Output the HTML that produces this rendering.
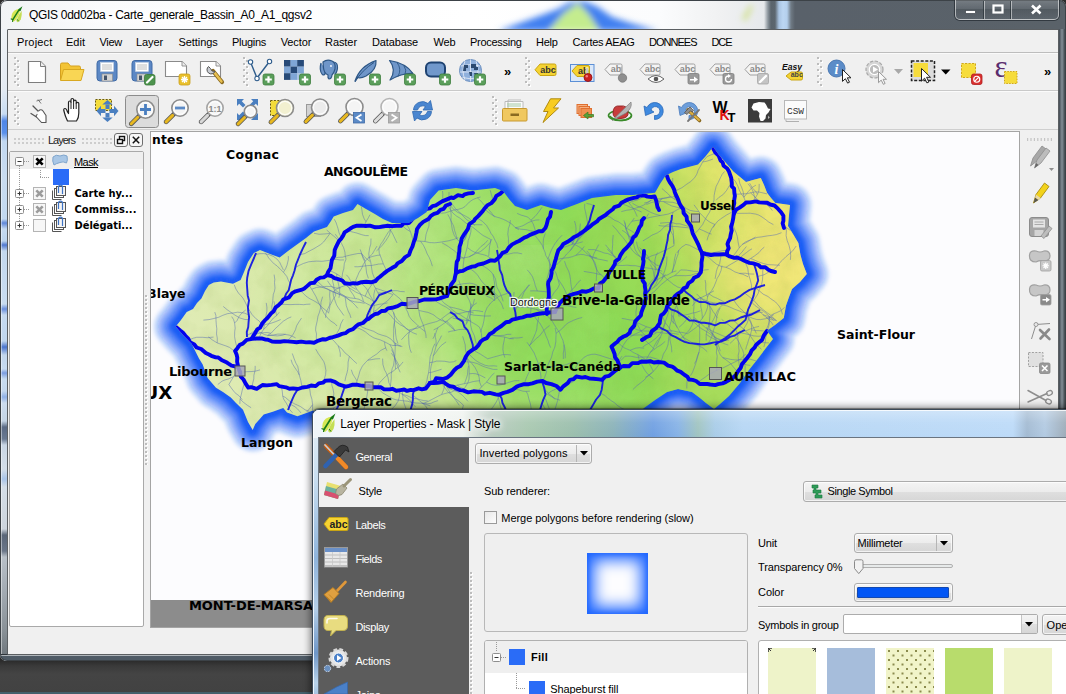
<!DOCTYPE html>
<html><head><meta charset="utf-8"><title>QGIS</title><style>
*{box-sizing:border-box;margin:0;padding:0}
html,body{width:1066px;height:694px;overflow:hidden}
body{background:#3a3a3a;font-family:"Liberation Sans","DejaVu Sans",sans-serif;font-size:11px;color:#000;position:relative}
.abs{position:absolute}
.t{position:absolute;white-space:nowrap;line-height:1}
#desk{position:absolute;left:0;top:0;width:1066px;height:694px;background:linear-gradient(180deg,#2c2c2c 661px,#3a3a3a 666px,#444 674px,#424242 692px)}
#deskline{position:absolute;left:0;top:692px;width:1066px;height:2px;background:#44606c}
#main{position:absolute;left:0;top:0;width:1066px;height:661px;border-radius:7px 7px 7px 7px;background:#e9edf0;overflow:hidden}
#mainb{position:absolute;left:0;top:0;width:1066px;height:661px;border-radius:7px;border:1px solid #3c4247}
#mtitle{position:absolute;left:0;top:0;width:1066px;height:29px}
#client{position:absolute;left:8px;top:30px;width:1050px;height:624px;background:#f0f0f0}
#clientborder{position:absolute;left:7px;top:29px;width:1052px;height:626px;border:1px solid #5b5f62;border-radius:1px}
.menu{position:absolute;top:38px;font-size:11px;line-height:11px;white-space:nowrap}
.hsep{position:absolute;height:1px;background:#c4c4c4}
.grip{position:absolute;width:6px;background-image:radial-gradient(circle at 1px 1px,#bdbdbd 0.8px,transparent 1.2px),radial-gradient(circle at 2px 2px,#fff 0.8px,transparent 1.2px),radial-gradient(circle at 4px 4px,#bdbdbd 0.8px,transparent 1.2px),radial-gradient(circle at 5px 5px,#fff 0.8px,transparent 1.2px);background-size:6px 6px}
</style></head><body>
<div id="desk"></div><div id="deskline"></div>
<div id="main">
<div id="mtitle" style="background:linear-gradient(90deg,#f1f3f5 0px,#fafbfc 100px,#ffffff 470px,#fbfcfd 660px,#f0f1f2 720px,#e6e9ec 764px,#8a949c 768px,#5a646c 771px,#5c666e 775px,#a9c4e2 779px,#bcd6f2 783px,#b4cfec 787px,#6f7a84 791px,#59616a 795px,#5a6269 1066px)"></div>
<svg class="abs" style="left:480px;top:1px" width="300" height="28" viewBox="0 0 300 28"><defs><filter id="tb" x="-20%" y="-50%" width="140%" height="200%"><feGaussianBlur stdDeviation="3.2"></feGaussianBlur></filter></defs><g filter="url(#tb)"><path d="M18 30L40 22L62 14L78 8L90 1L104 0L118 6L132 16L150 22L178 30Z" fill="#3f7ff0"></path><path d="M68 30L84 12L98 2L108 12L120 30Z" fill="#c4ec8e"></path><path d="M262 18L270 4L273 5L266 20Z" fill="#c8dc6a" opacity=".8"></path></g></svg>
<div class="abs" style="left:0;top:29px;width:7px;height:632px;background:linear-gradient(180deg,#eef2f6 0px,#e3eaf2 60px,#c8dcf2 85px,#4f86e6 92px,#5a90ea 104px,#c2d8f0 112px,#c9dcf0 150px,#c2d8ef 190px,#5f86d8 194px,#c6daf0 200px,#bcd4ee 212px,#5078d0 216px,#c4d8ee 222px,#c9dcf0 275px,#6a8fdc 280px,#c6daf0 286px,#c0d6ee 312px,#4a74cc 318px,#c2d6ec 326px,#c6daf0 340px,#7a9ce0 344px,#c8dcf0 350px,#c4d8ee 362px,#8fb0e6 368px,#ccdcee 374px,#c4d4e4 392px,#5a6a84 398px,#6a7a92 410px,#c9d6e4 416px,#d4dee8 440px,#a8c4e8 450px,#d4dee8 458px,#ccd4dc 500px,#5a6678 506px,#6a7688 522px,#b8c0c8 528px,#a4acb4 560px,#8a9298 600px,#6a7278 632px)"></div>
<div class="abs" style="left:0;top:29px;width:2px;height:632px;background:rgba(255,255,255,.45)"></div>
<div class="abs" style="left:1058px;top:29px;width:8px;height:632px;background:linear-gradient(90deg,#4c545c 0,#4c545c 2px,#78828a 3px,#78828a 5px,#4a5258 6px)"></div>
<div class="abs" style="left:0;top:654px;width:1066px;height:7px;background:#4f5b66;border-top:1px solid #2e343a;box-shadow:inset 0 1px 0 rgba(255,255,255,.55),inset 0 -1px 0 rgba(225,232,238,.9)"></div>
<div id="clientborder"></div>
<div id="client"></div>
</div>
<div id="mainb"></div>
<div class="abs" style="left:14px;top:6px;width:310px;height:20px;background:radial-gradient(closest-side,rgba(255,255,255,.9),rgba(255,255,255,0));"></div>
<span class="t" style="left: 29px; top: 9px; font-size: 12px; color: rgb(0, 0, 0); text-shadow: rgb(255, 255, 255) 0px 0px 6px, rgb(255, 255, 255) 0px 0px 6px; letter-spacing: -0.303px;">QGIS 0dd02ba - Carte_generale_Bassin_A0_A1_qgsv2</span>
<svg class="abs" style="left:0;top:0" width="40" height="30"><g transform="translate(9.5 7.5) scale(0.84)"><path d="M2.500 14Q1.500 7 6 3.500Q10 1 13 2Q12 8 9.500 12Q7.500 15.500 5 17Q3.500 16.500 2.500 14Z" fill="#d4e64a" opacity=".95"></path><path d="M8 16Q10.500 9 14.500 4Q15 10 13.500 14Q11.500 17.500 9.500 17.500Z" fill="#c0dc40" opacity=".9"></path><path d="M4 14.500L11.500 2.500L13.500 1L12.500 3.500" fill="none" stroke="#1a7a1a" stroke-width="1.700" stroke-linecap="round"></path><path d="M1.500 13.500L4 14.500L3.500 17" fill="none" stroke="#1a7a1a" stroke-width="1.200"></path><path d="M9 14L11 16.500" stroke="#1a7a1a" stroke-width="1"></path></g></svg>
<div class="abs" style="left:955px;top:0;width:104px;height:20px;border:1px solid rgba(255,255,255,.55);border-top:0;border-radius:0 0 5px 5px;background:linear-gradient(rgba(255,255,255,.18),rgba(255,255,255,.05) 45%,rgba(0,0,0,.08) 50%,rgba(255,255,255,.02));box-shadow:0 0 0 1px rgba(40,48,54,.8)"></div>
<div class="abs" style="left:984px;top:1px;width:1px;height:18px;background:rgba(255,255,255,.5);box-shadow:-1px 0 0 rgba(40,48,54,.7)"></div>
<div class="abs" style="left:1011px;top:1px;width:1px;height:18px;background:rgba(255,255,255,.5);box-shadow:-1px 0 0 rgba(40,48,54,.7)"></div>
<svg class="abs" style="left:955px;top:0" width="104" height="20"><rect x="10.5" y="10.5" width="10" height="3" fill="#fff" stroke="#4a5056" stroke-width=".8"></rect><rect x="38.5" y="5.5" width="9" height="7" fill="none" stroke="#fff" stroke-width="2.2"></rect><path d="M77 5.5L85.5 13.5M85.5 5.5L77 13.5" stroke="#fff" stroke-width="2.6"></path></svg>
<span class="t" style="left: 17px; top: 36.9px; font-size: 11px; color: rgb(0, 0, 0); letter-spacing: 0.179px;">Project</span>
<span class="t" style="left: 66px; top: 36.9px; font-size: 11px; color: rgb(0, 0, 0); letter-spacing: 0.008px;">Edit</span>
<span class="t" style="left: 99.4px; top: 36.9px; font-size: 11px; color: rgb(0, 0, 0); letter-spacing: -0.264px;">View</span>
<span class="t" style="left: 136px; top: 36.9px; font-size: 11px; color: rgb(0, 0, 0); letter-spacing: -0.106px;">Layer</span>
<span class="t" style="left: 178.6px; top: 36.9px; font-size: 11px; color: rgb(0, 0, 0); letter-spacing: -0.094px;">Settings</span>
<span class="t" style="left: 232px; top: 36.9px; font-size: 11px; color: rgb(0, 0, 0); letter-spacing: -0.297px;">Plugins</span>
<span class="t" style="left: 280.7px; top: 36.9px; font-size: 11px; color: rgb(0, 0, 0); letter-spacing: -0.115px;">Vector</span>
<span class="t" style="left: 325px; top: 36.9px; font-size: 11px; color: rgb(0, 0, 0); letter-spacing: -0.068px;">Raster</span>
<span class="t" style="left: 372px; top: 36.9px; font-size: 11px; color: rgb(0, 0, 0); letter-spacing: -0.137px;">Database</span>
<span class="t" style="left: 433.4px; top: 36.9px; font-size: 11px; color: rgb(0, 0, 0); letter-spacing: -0.141px;">Web</span>
<span class="t" style="left: 470px; top: 36.9px; font-size: 11px; color: rgb(0, 0, 0); letter-spacing: -0.282px;">Processing</span>
<span class="t" style="left: 536px; top: 36.9px; font-size: 11px; color: rgb(0, 0, 0); letter-spacing: -0.256px;">Help</span>
<span class="t" style="left: 572.6px; top: 36.9px; font-size: 11px; color: rgb(0, 0, 0); letter-spacing: -0.311px;">Cartes AEAG</span>
<span class="t" style="left: 649px; top: 36.9px; font-size: 11px; color: rgb(0, 0, 0); letter-spacing: -0.987px;">DONNEES</span>
<span class="t" style="left: 711.4px; top: 36.9px; font-size: 11px; color: rgb(0, 0, 0); letter-spacing: -0.978px;">DCE</span>
<div class="hsep" style="left:8px;top:52px;width:1050px;background:#bdbdbd"></div>
<div class="hsep" style="left:8px;top:53px;width:1050px;background:#fafafa"></div>
<div class="hsep" style="left:8px;top:90px;width:1050px;background:#c9c9c9"></div>
<div class="hsep" style="left:8px;top:91px;width:1050px;background:#fbfbfb"></div>
<div class="hsep" style="left:8px;top:129px;width:1050px;background:#cfcfcf"></div>
<div class="grip" style="left:14px;top:57px;height:30px"></div>
<div class="grip" style="left:243px;top:57px;height:30px"></div>
<div class="grip" style="left:525px;top:57px;height:30px"></div>
<div class="grip" style="left:817px;top:57px;height:30px"></div>
<div class="grip" style="left:14px;top:96px;height:30px"></div>
<div class="grip" style="left:492px;top:96px;height:30px"></div>
<span class="t" style="left:504px;top:65.2px;font-size:13px;color:#000;font-weight:bold;">»</span>
<span class="t" style="left:1044px;top:65.2px;font-size:13px;color:#000;font-weight:bold;">»</span>
<div class="abs" style="left:14px;top:138px;width:30px;height:6px;background-image:radial-gradient(circle at 1px 1px,#cdcdcd 0.8px,transparent 1.1px);background-size:4px 4px"></div>
<div class="abs" style="left:82px;top:138px;width:30px;height:6px;background-image:radial-gradient(circle at 1px 1px,#cdcdcd 0.8px,transparent 1.1px);background-size:4px 4px"></div>
<span class="t" style="left: 48px; top: 134.9px; font-size: 11px; color: rgb(34, 34, 34); letter-spacing: -1.005px;">Layers</span>
<div class="abs" style="left:114px;top:133px;width:14px;height:14px;border:1px solid #6e6e6e;border-radius:3px;background:#f6f6f6"></div>
<svg class="abs" style="left:114px;top:133px" width="14" height="14"><rect x="5.5" y="3.5" width="5" height="4" fill="none" stroke="#111" stroke-width="1.4"></rect><rect x="3.5" y="6.5" width="5" height="4" fill="#f6f6f6" stroke="#111" stroke-width="1.4"></rect></svg>
<div class="abs" style="left:129px;top:133px;width:14px;height:14px;border:1px solid #6e6e6e;border-radius:3px;background:#f6f6f6"></div>
<svg class="abs" style="left:129px;top:133px" width="14" height="14"><path d="M3.8 3.8L10.2 10.2M10.2 3.8L3.8 10.2" stroke="#111" stroke-width="1.5"></path></svg>
<div class="abs" style="left:9px;top:151px;width:135px;height:476px;background:#fff;border:1px solid #a9a9a9;border-radius:2px"></div>
<div class="abs" style="left:10px;top:152px;width:133px;height:17px;background:#efefef"></div>
<div class="abs" style="left:19px;top:166px;width:1px;height:55px;background-image:linear-gradient(#9a9a9a 1px,transparent 1px);background-size:1px 2px"></div>
<div class="abs" style="left:24px;top:161px;width:6px;height:1px;background-image:linear-gradient(90deg,#9a9a9a 1px,transparent 1px);background-size:2px 1px"></div>
<div class="abs" style="left:24px;top:193px;width:6px;height:1px;background-image:linear-gradient(90deg,#9a9a9a 1px,transparent 1px);background-size:2px 1px"></div>
<div class="abs" style="left:24px;top:209px;width:6px;height:1px;background-image:linear-gradient(90deg,#9a9a9a 1px,transparent 1px);background-size:2px 1px"></div>
<div class="abs" style="left:24px;top:225px;width:6px;height:1px;background-image:linear-gradient(90deg,#9a9a9a 1px,transparent 1px);background-size:2px 1px"></div>
<div class="abs" style="left:40px;top:170px;width:1px;height:7px;background-image:linear-gradient(#9a9a9a 1px,transparent 1px);background-size:1px 2px"></div>
<div class="abs" style="left:40px;top:177px;width:10px;height:1px;background-image:linear-gradient(90deg,#9a9a9a 1px,transparent 1px);background-size:2px 1px"></div>
<svg class="abs" style="left:15px;top:157px" width="9" height="9"><rect x="0.5" y="0.5" width="8" height="8" rx="1" fill="#fdfdfd" stroke="#8e8e8e"></rect><path d="M2.5 4.5H6.5" stroke="#333" stroke-width="1"></path></svg>
<svg class="abs" style="left:15px;top:189px" width="9" height="9"><rect x="0.5" y="0.5" width="8" height="8" rx="1" fill="#fdfdfd" stroke="#8e8e8e"></rect><path d="M2.5 4.5H6.5" stroke="#333" stroke-width="1"></path><path d="M4.5 2.5V6.5" stroke="#333" stroke-width="1"></path></svg>
<svg class="abs" style="left:15px;top:205px" width="9" height="9"><rect x="0.5" y="0.5" width="8" height="8" rx="1" fill="#fdfdfd" stroke="#8e8e8e"></rect><path d="M2.5 4.5H6.5" stroke="#333" stroke-width="1"></path><path d="M4.5 2.5V6.5" stroke="#333" stroke-width="1"></path></svg>
<svg class="abs" style="left:15px;top:221px" width="9" height="9"><rect x="0.5" y="0.5" width="8" height="8" rx="1" fill="#fdfdfd" stroke="#8e8e8e"></rect><path d="M2.5 4.5H6.5" stroke="#333" stroke-width="1"></path><path d="M4.5 2.5V6.5" stroke="#333" stroke-width="1"></path></svg>
<div class="abs" style="left:33px;top:155px;width:13px;height:13px;border:1px solid #b4b4b4;background:#f7f7f7"></div>
<div class="abs" style="left:33px;top:187px;width:13px;height:13px;border:1px solid #b4b4b4;background:#f7f7f7"></div>
<div class="abs" style="left:33px;top:203px;width:13px;height:13px;border:1px solid #b4b4b4;background:#f7f7f7"></div>
<div class="abs" style="left:33px;top:219px;width:13px;height:13px;border:1px solid #b4b4b4;background:#f7f7f7"></div>
<svg class="abs" style="left:33px;top:155px" width="13" height="13"><path d="M3.3 3.3L9.7 9.7M9.7 3.3L3.3 9.7" stroke="#000" stroke-width="2.6"></path></svg>
<svg class="abs" style="left:33px;top:187px" width="13" height="13"><path d="M3.3 3.3L9.7 9.7M9.7 3.3L3.3 9.7" stroke="#9c9c9c" stroke-width="2.6"></path></svg>
<svg class="abs" style="left:33px;top:203px" width="13" height="13"><path d="M3.3 3.3L9.7 9.7M9.7 3.3L3.3 9.7" stroke="#9c9c9c" stroke-width="2.6"></path></svg>
<svg class="abs" style="left:51px;top:153px" width="18" height="15" viewBox="0 0 18 15"><path d="M2 4 Q5 1 9 3 Q13 1 16 3 Q17 7 15.5 10 Q12 8 9 9.5 Q5 10.5 3 12 Q1 8 2 4Z" fill="#a9c7e6" stroke="#7fa5cc" stroke-width="1"></path></svg>
<span class="t" style="left: 74px; top: 156.9px; font-size: 11px; color: rgb(0, 0, 0); text-decoration: underline; letter-spacing: -0.57px;">Mask</span>
<div class="abs" style="left:53px;top:169px;width:16px;height:16px;background:#2a6cf7"></div>
<svg class="abs" style="left:51px;top:184px" width="16" height="17" viewBox="0 0 16 17"><path d="M1.5 6.5V15.5H10.5" fill="none" stroke="#555" stroke-width="1"></path><rect x="3.5" y="4.5" width="9" height="9" fill="#fff" stroke="#555"></rect><rect x="5.5" y="2.5" width="9" height="9" fill="#f4f4f4" stroke="#555"></rect><path d="M7.5 9V3.2A2 2 0 0 1 11.5 3.2V10" fill="none" stroke="#3e73c4" stroke-width="1.2"></path></svg>
<span class="t" style="left: 74.5px; top: 187.9px; font-size: 11px; color: rgb(0, 0, 0); font-weight: bold; font-family: &quot;DejaVu Sans Condensed&quot;, &quot;DejaVu Sans&quot;, &quot;Liberation Sans&quot;, sans-serif; letter-spacing: 0.047px;">Carte hy...</span>
<svg class="abs" style="left:51px;top:200px" width="16" height="17" viewBox="0 0 16 17"><path d="M1.5 6.5V15.5H10.5" fill="none" stroke="#555" stroke-width="1"></path><rect x="3.5" y="4.5" width="9" height="9" fill="#fff" stroke="#555"></rect><rect x="5.5" y="2.5" width="9" height="9" fill="#f4f4f4" stroke="#555"></rect><path d="M7.5 9V3.2A2 2 0 0 1 11.5 3.2V10" fill="none" stroke="#3e73c4" stroke-width="1.2"></path></svg>
<span class="t" style="left: 74.5px; top: 203.9px; font-size: 11px; color: rgb(0, 0, 0); font-weight: bold; font-family: &quot;DejaVu Sans Condensed&quot;, &quot;DejaVu Sans&quot;, &quot;Liberation Sans&quot;, sans-serif; letter-spacing: 0.086px;">Commiss...</span>
<svg class="abs" style="left:51px;top:216px" width="16" height="17" viewBox="0 0 16 17"><path d="M1.5 6.5V15.5H10.5" fill="none" stroke="#555" stroke-width="1"></path><rect x="3.5" y="4.5" width="9" height="9" fill="#fff" stroke="#555"></rect><rect x="5.5" y="2.5" width="9" height="9" fill="#f4f4f4" stroke="#555"></rect><path d="M7.5 9V3.2A2 2 0 0 1 11.5 3.2V10" fill="none" stroke="#3e73c4" stroke-width="1.2"></path></svg>
<span class="t" style="left: 74.5px; top: 219.9px; font-size: 11px; color: rgb(0, 0, 0); font-weight: bold; font-family: &quot;DejaVu Sans Condensed&quot;, &quot;DejaVu Sans&quot;, &quot;Liberation Sans&quot;, sans-serif; letter-spacing: -0.018px;">Délégati...</span>
<div class="grip" style="left:145px;top:295px;height:170px;width:3px;background-size:6px 4px"></div>
<div class="abs" style="left:150px;top:131px;width:870px;height:497px;border:1px solid #a4a4a4;background:#fcfcfe"></div>
<svg class="abs" style="left:151px;top:132px" width="868" height="495" viewBox="0 0 868 495">
<defs>
<filter id="glow" x="-10%" y="-10%" width="120%" height="120%"><feGaussianBlur stdDeviation="6.5"></feGaussianBlur></filter>
<filter id="glow2" x="-10%" y="-10%" width="120%" height="120%"><feGaussianBlur stdDeviation="1.6"></feGaussianBlur></filter>
<filter id="soft" x="-20%" y="-20%" width="140%" height="140%"><feGaussianBlur stdDeviation="18"></feGaussianBlur></filter>
<filter id="tex" x="0" y="0" width="100%" height="100%"><feTurbulence type="fractalNoise" baseFrequency="0.045" numOctaves="3" seed="4" result="n"></feTurbulence><feColorMatrix in="n" type="matrix" values="0 0 0 0 0.2  0 0 0 0 0.35  0 0 0 0 0.05  0 0 0 1.6 -0.62"></feColorMatrix></filter>
<linearGradient id="terr" gradientUnits="userSpaceOnUse" x1="25" y1="160" x2="660" y2="-140">
<stop offset="0" stop-color="#dfebb4"></stop><stop offset="0.14" stop-color="#d8e9a8"></stop><stop offset="0.28" stop-color="#c6e692"></stop><stop offset="0.42" stop-color="#a6e372"></stop><stop offset="0.55" stop-color="#8edb58"></stop><stop offset="0.64" stop-color="#a0dc58"></stop><stop offset="0.71" stop-color="#c4e162"></stop><stop offset="0.78" stop-color="#e4e66e"></stop><stop offset="0.86" stop-color="#f6e67e"></stop><stop offset="1" stop-color="#f6e67e"></stop></linearGradient>
<clipPath id="bc"><polygon points="24.7,194.5 30.0,188.0 35.7,180.0 42.0,177.0 46.0,171.0 50.4,166.4 54.0,159.0 57.8,153.0 62.7,150.4 70.0,149.5 82.0,151.7 89.6,148.0 93.0,140.0 97.0,130.0 102.8,121.0 109.0,118.0 119.0,122.0 128.7,125.5 137.0,119.0 146.0,112.6 155.0,106.0 163.0,99.6 176.0,95.0 180.0,89.0 182.7,84.5 192.0,81.0 202.0,78.0 206.5,72.0 215.0,77.0 223.8,82.0 232.0,87.0 241.0,91.0 258.0,91.0 267.0,86.0 275.7,80.0 279.0,68.0 287.6,58.5 305.0,56.0 322.0,58.5 344.0,56.0 352.0,59.0 358.0,67.0 364.0,74.0 376.0,78.0 390.0,73.0 400.0,76.0 410.0,78.0 426.0,72.0 441.0,66.0 465.0,63.0 482.0,63.0 504.0,60.7 509.0,52.0 514.6,43.4 522.0,40.0 529.8,37.0 547.0,32.6 554.0,25.0 560.0,17.5 562.0,14.7 568.0,23.0 575.0,31.0 582.6,39.8 589.0,45.0 595.0,50.0 602.0,48.0 609.8,46.0 613.0,53.0 616.0,60.7 620.0,66.0 624.4,71.0 632.0,72.0 639.0,73.0 638.0,83.0 637.0,94.0 642.0,102.0 647.4,111.0 649.5,123.0 652.0,132.0 655.8,142.0 649.0,150.0 641.0,157.0 638.0,165.0 635.0,173.6 632.8,186.0 624.0,193.0 616.0,198.7 622.0,207.0 615.0,216.0 607.7,225.8 598.0,238.0 589.0,251.0 578.0,264.0 569.0,272.0 563.0,277.0 555.0,271.0 549.0,266.0 541.0,260.0 527.0,257.0 516.0,260.0 504.0,268.0 493.0,276.0 479.0,288.0 449.0,296.0 409.0,292.0 369.0,300.0 319.0,294.0 269.0,298.0 219.0,292.0 179.0,288.0 162.0,278.5 156.8,280.4 146.4,284.3 136.0,280.4 132.2,275.9 121.8,279.8 112.7,282.4 108.8,286.9 104.3,292.0 101.7,298.0 97.0,290.0 92.0,277.8 85.0,271.0 79.8,265.6 72.0,260.0 65.0,255.8 56.6,246.0 51.7,232.5 48.0,226.4 40.6,211.7 32.0,203.0"></polygon></clipPath>
</defs>
<rect width="868" height="495" fill="#fcfcfe"></rect>
<g filter="url(#glow2)">
<polygon points="24.7,194.5 30.0,188.0 35.7,180.0 42.0,177.0 46.0,171.0 50.4,166.4 54.0,159.0 57.8,153.0 62.7,150.4 70.0,149.5 82.0,151.7 89.6,148.0 93.0,140.0 97.0,130.0 102.8,121.0 109.0,118.0 119.0,122.0 128.7,125.5 137.0,119.0 146.0,112.6 155.0,106.0 163.0,99.6 176.0,95.0 180.0,89.0 182.7,84.5 192.0,81.0 202.0,78.0 206.5,72.0 215.0,77.0 223.8,82.0 232.0,87.0 241.0,91.0 258.0,91.0 267.0,86.0 275.7,80.0 279.0,68.0 287.6,58.5 305.0,56.0 322.0,58.5 344.0,56.0 352.0,59.0 358.0,67.0 364.0,74.0 376.0,78.0 390.0,73.0 400.0,76.0 410.0,78.0 426.0,72.0 441.0,66.0 465.0,63.0 482.0,63.0 504.0,60.7 509.0,52.0 514.6,43.4 522.0,40.0 529.8,37.0 547.0,32.6 554.0,25.0 560.0,17.5 562.0,14.7 568.0,23.0 575.0,31.0 582.6,39.8 589.0,45.0 595.0,50.0 602.0,48.0 609.8,46.0 613.0,53.0 616.0,60.7 620.0,66.0 624.4,71.0 632.0,72.0 639.0,73.0 638.0,83.0 637.0,94.0 642.0,102.0 647.4,111.0 649.5,123.0 652.0,132.0 655.8,142.0 649.0,150.0 641.0,157.0 638.0,165.0 635.0,173.6 632.8,186.0 624.0,193.0 616.0,198.7 622.0,207.0 615.0,216.0 607.7,225.8 598.0,238.0 589.0,251.0 578.0,264.0 569.0,272.0 563.0,277.0 555.0,271.0 549.0,266.0 541.0,260.0 527.0,257.0 516.0,260.0 504.0,268.0 493.0,276.0 479.0,288.0 449.0,296.0 409.0,292.0 369.0,300.0 319.0,294.0 269.0,298.0 219.0,292.0 179.0,288.0 162.0,278.5 156.8,280.4 146.4,284.3 136.0,280.4 132.2,275.9 121.8,279.8 112.7,282.4 108.8,286.9 104.3,292.0 101.7,298.0 97.0,290.0 92.0,277.8 85.0,271.0 79.8,265.6 72.0,260.0 65.0,255.8 56.6,246.0 51.7,232.5 48.0,226.4 40.6,211.7 32.0,203.0" fill="none" stroke="#1a5cf5" stroke-opacity="0.085" stroke-width="46.0" stroke-linejoin="round"></polygon>
<polygon points="24.7,194.5 30.0,188.0 35.7,180.0 42.0,177.0 46.0,171.0 50.4,166.4 54.0,159.0 57.8,153.0 62.7,150.4 70.0,149.5 82.0,151.7 89.6,148.0 93.0,140.0 97.0,130.0 102.8,121.0 109.0,118.0 119.0,122.0 128.7,125.5 137.0,119.0 146.0,112.6 155.0,106.0 163.0,99.6 176.0,95.0 180.0,89.0 182.7,84.5 192.0,81.0 202.0,78.0 206.5,72.0 215.0,77.0 223.8,82.0 232.0,87.0 241.0,91.0 258.0,91.0 267.0,86.0 275.7,80.0 279.0,68.0 287.6,58.5 305.0,56.0 322.0,58.5 344.0,56.0 352.0,59.0 358.0,67.0 364.0,74.0 376.0,78.0 390.0,73.0 400.0,76.0 410.0,78.0 426.0,72.0 441.0,66.0 465.0,63.0 482.0,63.0 504.0,60.7 509.0,52.0 514.6,43.4 522.0,40.0 529.8,37.0 547.0,32.6 554.0,25.0 560.0,17.5 562.0,14.7 568.0,23.0 575.0,31.0 582.6,39.8 589.0,45.0 595.0,50.0 602.0,48.0 609.8,46.0 613.0,53.0 616.0,60.7 620.0,66.0 624.4,71.0 632.0,72.0 639.0,73.0 638.0,83.0 637.0,94.0 642.0,102.0 647.4,111.0 649.5,123.0 652.0,132.0 655.8,142.0 649.0,150.0 641.0,157.0 638.0,165.0 635.0,173.6 632.8,186.0 624.0,193.0 616.0,198.7 622.0,207.0 615.0,216.0 607.7,225.8 598.0,238.0 589.0,251.0 578.0,264.0 569.0,272.0 563.0,277.0 555.0,271.0 549.0,266.0 541.0,260.0 527.0,257.0 516.0,260.0 504.0,268.0 493.0,276.0 479.0,288.0 449.0,296.0 409.0,292.0 369.0,300.0 319.0,294.0 269.0,298.0 219.0,292.0 179.0,288.0 162.0,278.5 156.8,280.4 146.4,284.3 136.0,280.4 132.2,275.9 121.8,279.8 112.7,282.4 108.8,286.9 104.3,292.0 101.7,298.0 97.0,290.0 92.0,277.8 85.0,271.0 79.8,265.6 72.0,260.0 65.0,255.8 56.6,246.0 51.7,232.5 48.0,226.4 40.6,211.7 32.0,203.0" fill="none" stroke="#1a5cf5" stroke-opacity="0.087" stroke-width="42.9" stroke-linejoin="round"></polygon>
<polygon points="24.7,194.5 30.0,188.0 35.7,180.0 42.0,177.0 46.0,171.0 50.4,166.4 54.0,159.0 57.8,153.0 62.7,150.4 70.0,149.5 82.0,151.7 89.6,148.0 93.0,140.0 97.0,130.0 102.8,121.0 109.0,118.0 119.0,122.0 128.7,125.5 137.0,119.0 146.0,112.6 155.0,106.0 163.0,99.6 176.0,95.0 180.0,89.0 182.7,84.5 192.0,81.0 202.0,78.0 206.5,72.0 215.0,77.0 223.8,82.0 232.0,87.0 241.0,91.0 258.0,91.0 267.0,86.0 275.7,80.0 279.0,68.0 287.6,58.5 305.0,56.0 322.0,58.5 344.0,56.0 352.0,59.0 358.0,67.0 364.0,74.0 376.0,78.0 390.0,73.0 400.0,76.0 410.0,78.0 426.0,72.0 441.0,66.0 465.0,63.0 482.0,63.0 504.0,60.7 509.0,52.0 514.6,43.4 522.0,40.0 529.8,37.0 547.0,32.6 554.0,25.0 560.0,17.5 562.0,14.7 568.0,23.0 575.0,31.0 582.6,39.8 589.0,45.0 595.0,50.0 602.0,48.0 609.8,46.0 613.0,53.0 616.0,60.7 620.0,66.0 624.4,71.0 632.0,72.0 639.0,73.0 638.0,83.0 637.0,94.0 642.0,102.0 647.4,111.0 649.5,123.0 652.0,132.0 655.8,142.0 649.0,150.0 641.0,157.0 638.0,165.0 635.0,173.6 632.8,186.0 624.0,193.0 616.0,198.7 622.0,207.0 615.0,216.0 607.7,225.8 598.0,238.0 589.0,251.0 578.0,264.0 569.0,272.0 563.0,277.0 555.0,271.0 549.0,266.0 541.0,260.0 527.0,257.0 516.0,260.0 504.0,268.0 493.0,276.0 479.0,288.0 449.0,296.0 409.0,292.0 369.0,300.0 319.0,294.0 269.0,298.0 219.0,292.0 179.0,288.0 162.0,278.5 156.8,280.4 146.4,284.3 136.0,280.4 132.2,275.9 121.8,279.8 112.7,282.4 108.8,286.9 104.3,292.0 101.7,298.0 97.0,290.0 92.0,277.8 85.0,271.0 79.8,265.6 72.0,260.0 65.0,255.8 56.6,246.0 51.7,232.5 48.0,226.4 40.6,211.7 32.0,203.0" fill="none" stroke="#1a5cf5" stroke-opacity="0.093" stroke-width="39.9" stroke-linejoin="round"></polygon>
<polygon points="24.7,194.5 30.0,188.0 35.7,180.0 42.0,177.0 46.0,171.0 50.4,166.4 54.0,159.0 57.8,153.0 62.7,150.4 70.0,149.5 82.0,151.7 89.6,148.0 93.0,140.0 97.0,130.0 102.8,121.0 109.0,118.0 119.0,122.0 128.7,125.5 137.0,119.0 146.0,112.6 155.0,106.0 163.0,99.6 176.0,95.0 180.0,89.0 182.7,84.5 192.0,81.0 202.0,78.0 206.5,72.0 215.0,77.0 223.8,82.0 232.0,87.0 241.0,91.0 258.0,91.0 267.0,86.0 275.7,80.0 279.0,68.0 287.6,58.5 305.0,56.0 322.0,58.5 344.0,56.0 352.0,59.0 358.0,67.0 364.0,74.0 376.0,78.0 390.0,73.0 400.0,76.0 410.0,78.0 426.0,72.0 441.0,66.0 465.0,63.0 482.0,63.0 504.0,60.7 509.0,52.0 514.6,43.4 522.0,40.0 529.8,37.0 547.0,32.6 554.0,25.0 560.0,17.5 562.0,14.7 568.0,23.0 575.0,31.0 582.6,39.8 589.0,45.0 595.0,50.0 602.0,48.0 609.8,46.0 613.0,53.0 616.0,60.7 620.0,66.0 624.4,71.0 632.0,72.0 639.0,73.0 638.0,83.0 637.0,94.0 642.0,102.0 647.4,111.0 649.5,123.0 652.0,132.0 655.8,142.0 649.0,150.0 641.0,157.0 638.0,165.0 635.0,173.6 632.8,186.0 624.0,193.0 616.0,198.7 622.0,207.0 615.0,216.0 607.7,225.8 598.0,238.0 589.0,251.0 578.0,264.0 569.0,272.0 563.0,277.0 555.0,271.0 549.0,266.0 541.0,260.0 527.0,257.0 516.0,260.0 504.0,268.0 493.0,276.0 479.0,288.0 449.0,296.0 409.0,292.0 369.0,300.0 319.0,294.0 269.0,298.0 219.0,292.0 179.0,288.0 162.0,278.5 156.8,280.4 146.4,284.3 136.0,280.4 132.2,275.9 121.8,279.8 112.7,282.4 108.8,286.9 104.3,292.0 101.7,298.0 97.0,290.0 92.0,277.8 85.0,271.0 79.8,265.6 72.0,260.0 65.0,255.8 56.6,246.0 51.7,232.5 48.0,226.4 40.6,211.7 32.0,203.0" fill="none" stroke="#1a5cf5" stroke-opacity="0.101" stroke-width="36.8" stroke-linejoin="round"></polygon>
<polygon points="24.7,194.5 30.0,188.0 35.7,180.0 42.0,177.0 46.0,171.0 50.4,166.4 54.0,159.0 57.8,153.0 62.7,150.4 70.0,149.5 82.0,151.7 89.6,148.0 93.0,140.0 97.0,130.0 102.8,121.0 109.0,118.0 119.0,122.0 128.7,125.5 137.0,119.0 146.0,112.6 155.0,106.0 163.0,99.6 176.0,95.0 180.0,89.0 182.7,84.5 192.0,81.0 202.0,78.0 206.5,72.0 215.0,77.0 223.8,82.0 232.0,87.0 241.0,91.0 258.0,91.0 267.0,86.0 275.7,80.0 279.0,68.0 287.6,58.5 305.0,56.0 322.0,58.5 344.0,56.0 352.0,59.0 358.0,67.0 364.0,74.0 376.0,78.0 390.0,73.0 400.0,76.0 410.0,78.0 426.0,72.0 441.0,66.0 465.0,63.0 482.0,63.0 504.0,60.7 509.0,52.0 514.6,43.4 522.0,40.0 529.8,37.0 547.0,32.6 554.0,25.0 560.0,17.5 562.0,14.7 568.0,23.0 575.0,31.0 582.6,39.8 589.0,45.0 595.0,50.0 602.0,48.0 609.8,46.0 613.0,53.0 616.0,60.7 620.0,66.0 624.4,71.0 632.0,72.0 639.0,73.0 638.0,83.0 637.0,94.0 642.0,102.0 647.4,111.0 649.5,123.0 652.0,132.0 655.8,142.0 649.0,150.0 641.0,157.0 638.0,165.0 635.0,173.6 632.8,186.0 624.0,193.0 616.0,198.7 622.0,207.0 615.0,216.0 607.7,225.8 598.0,238.0 589.0,251.0 578.0,264.0 569.0,272.0 563.0,277.0 555.0,271.0 549.0,266.0 541.0,260.0 527.0,257.0 516.0,260.0 504.0,268.0 493.0,276.0 479.0,288.0 449.0,296.0 409.0,292.0 369.0,300.0 319.0,294.0 269.0,298.0 219.0,292.0 179.0,288.0 162.0,278.5 156.8,280.4 146.4,284.3 136.0,280.4 132.2,275.9 121.8,279.8 112.7,282.4 108.8,286.9 104.3,292.0 101.7,298.0 97.0,290.0 92.0,277.8 85.0,271.0 79.8,265.6 72.0,260.0 65.0,255.8 56.6,246.0 51.7,232.5 48.0,226.4 40.6,211.7 32.0,203.0" fill="none" stroke="#1a5cf5" stroke-opacity="0.111" stroke-width="33.7" stroke-linejoin="round"></polygon>
<polygon points="24.7,194.5 30.0,188.0 35.7,180.0 42.0,177.0 46.0,171.0 50.4,166.4 54.0,159.0 57.8,153.0 62.7,150.4 70.0,149.5 82.0,151.7 89.6,148.0 93.0,140.0 97.0,130.0 102.8,121.0 109.0,118.0 119.0,122.0 128.7,125.5 137.0,119.0 146.0,112.6 155.0,106.0 163.0,99.6 176.0,95.0 180.0,89.0 182.7,84.5 192.0,81.0 202.0,78.0 206.5,72.0 215.0,77.0 223.8,82.0 232.0,87.0 241.0,91.0 258.0,91.0 267.0,86.0 275.7,80.0 279.0,68.0 287.6,58.5 305.0,56.0 322.0,58.5 344.0,56.0 352.0,59.0 358.0,67.0 364.0,74.0 376.0,78.0 390.0,73.0 400.0,76.0 410.0,78.0 426.0,72.0 441.0,66.0 465.0,63.0 482.0,63.0 504.0,60.7 509.0,52.0 514.6,43.4 522.0,40.0 529.8,37.0 547.0,32.6 554.0,25.0 560.0,17.5 562.0,14.7 568.0,23.0 575.0,31.0 582.6,39.8 589.0,45.0 595.0,50.0 602.0,48.0 609.8,46.0 613.0,53.0 616.0,60.7 620.0,66.0 624.4,71.0 632.0,72.0 639.0,73.0 638.0,83.0 637.0,94.0 642.0,102.0 647.4,111.0 649.5,123.0 652.0,132.0 655.8,142.0 649.0,150.0 641.0,157.0 638.0,165.0 635.0,173.6 632.8,186.0 624.0,193.0 616.0,198.7 622.0,207.0 615.0,216.0 607.7,225.8 598.0,238.0 589.0,251.0 578.0,264.0 569.0,272.0 563.0,277.0 555.0,271.0 549.0,266.0 541.0,260.0 527.0,257.0 516.0,260.0 504.0,268.0 493.0,276.0 479.0,288.0 449.0,296.0 409.0,292.0 369.0,300.0 319.0,294.0 269.0,298.0 219.0,292.0 179.0,288.0 162.0,278.5 156.8,280.4 146.4,284.3 136.0,280.4 132.2,275.9 121.8,279.8 112.7,282.4 108.8,286.9 104.3,292.0 101.7,298.0 97.0,290.0 92.0,277.8 85.0,271.0 79.8,265.6 72.0,260.0 65.0,255.8 56.6,246.0 51.7,232.5 48.0,226.4 40.6,211.7 32.0,203.0" fill="none" stroke="#1a5cf5" stroke-opacity="0.123" stroke-width="30.7" stroke-linejoin="round"></polygon>
<polygon points="24.7,194.5 30.0,188.0 35.7,180.0 42.0,177.0 46.0,171.0 50.4,166.4 54.0,159.0 57.8,153.0 62.7,150.4 70.0,149.5 82.0,151.7 89.6,148.0 93.0,140.0 97.0,130.0 102.8,121.0 109.0,118.0 119.0,122.0 128.7,125.5 137.0,119.0 146.0,112.6 155.0,106.0 163.0,99.6 176.0,95.0 180.0,89.0 182.7,84.5 192.0,81.0 202.0,78.0 206.5,72.0 215.0,77.0 223.8,82.0 232.0,87.0 241.0,91.0 258.0,91.0 267.0,86.0 275.7,80.0 279.0,68.0 287.6,58.5 305.0,56.0 322.0,58.5 344.0,56.0 352.0,59.0 358.0,67.0 364.0,74.0 376.0,78.0 390.0,73.0 400.0,76.0 410.0,78.0 426.0,72.0 441.0,66.0 465.0,63.0 482.0,63.0 504.0,60.7 509.0,52.0 514.6,43.4 522.0,40.0 529.8,37.0 547.0,32.6 554.0,25.0 560.0,17.5 562.0,14.7 568.0,23.0 575.0,31.0 582.6,39.8 589.0,45.0 595.0,50.0 602.0,48.0 609.8,46.0 613.0,53.0 616.0,60.7 620.0,66.0 624.4,71.0 632.0,72.0 639.0,73.0 638.0,83.0 637.0,94.0 642.0,102.0 647.4,111.0 649.5,123.0 652.0,132.0 655.8,142.0 649.0,150.0 641.0,157.0 638.0,165.0 635.0,173.6 632.8,186.0 624.0,193.0 616.0,198.7 622.0,207.0 615.0,216.0 607.7,225.8 598.0,238.0 589.0,251.0 578.0,264.0 569.0,272.0 563.0,277.0 555.0,271.0 549.0,266.0 541.0,260.0 527.0,257.0 516.0,260.0 504.0,268.0 493.0,276.0 479.0,288.0 449.0,296.0 409.0,292.0 369.0,300.0 319.0,294.0 269.0,298.0 219.0,292.0 179.0,288.0 162.0,278.5 156.8,280.4 146.4,284.3 136.0,280.4 132.2,275.9 121.8,279.8 112.7,282.4 108.8,286.9 104.3,292.0 101.7,298.0 97.0,290.0 92.0,277.8 85.0,271.0 79.8,265.6 72.0,260.0 65.0,255.8 56.6,246.0 51.7,232.5 48.0,226.4 40.6,211.7 32.0,203.0" fill="none" stroke="#1a5cf5" stroke-opacity="0.139" stroke-width="27.6" stroke-linejoin="round"></polygon>
<polygon points="24.7,194.5 30.0,188.0 35.7,180.0 42.0,177.0 46.0,171.0 50.4,166.4 54.0,159.0 57.8,153.0 62.7,150.4 70.0,149.5 82.0,151.7 89.6,148.0 93.0,140.0 97.0,130.0 102.8,121.0 109.0,118.0 119.0,122.0 128.7,125.5 137.0,119.0 146.0,112.6 155.0,106.0 163.0,99.6 176.0,95.0 180.0,89.0 182.7,84.5 192.0,81.0 202.0,78.0 206.5,72.0 215.0,77.0 223.8,82.0 232.0,87.0 241.0,91.0 258.0,91.0 267.0,86.0 275.7,80.0 279.0,68.0 287.6,58.5 305.0,56.0 322.0,58.5 344.0,56.0 352.0,59.0 358.0,67.0 364.0,74.0 376.0,78.0 390.0,73.0 400.0,76.0 410.0,78.0 426.0,72.0 441.0,66.0 465.0,63.0 482.0,63.0 504.0,60.7 509.0,52.0 514.6,43.4 522.0,40.0 529.8,37.0 547.0,32.6 554.0,25.0 560.0,17.5 562.0,14.7 568.0,23.0 575.0,31.0 582.6,39.8 589.0,45.0 595.0,50.0 602.0,48.0 609.8,46.0 613.0,53.0 616.0,60.7 620.0,66.0 624.4,71.0 632.0,72.0 639.0,73.0 638.0,83.0 637.0,94.0 642.0,102.0 647.4,111.0 649.5,123.0 652.0,132.0 655.8,142.0 649.0,150.0 641.0,157.0 638.0,165.0 635.0,173.6 632.8,186.0 624.0,193.0 616.0,198.7 622.0,207.0 615.0,216.0 607.7,225.8 598.0,238.0 589.0,251.0 578.0,264.0 569.0,272.0 563.0,277.0 555.0,271.0 549.0,266.0 541.0,260.0 527.0,257.0 516.0,260.0 504.0,268.0 493.0,276.0 479.0,288.0 449.0,296.0 409.0,292.0 369.0,300.0 319.0,294.0 269.0,298.0 219.0,292.0 179.0,288.0 162.0,278.5 156.8,280.4 146.4,284.3 136.0,280.4 132.2,275.9 121.8,279.8 112.7,282.4 108.8,286.9 104.3,292.0 101.7,298.0 97.0,290.0 92.0,277.8 85.0,271.0 79.8,265.6 72.0,260.0 65.0,255.8 56.6,246.0 51.7,232.5 48.0,226.4 40.6,211.7 32.0,203.0" fill="none" stroke="#1a5cf5" stroke-opacity="0.161" stroke-width="24.5" stroke-linejoin="round"></polygon>
<polygon points="24.7,194.5 30.0,188.0 35.7,180.0 42.0,177.0 46.0,171.0 50.4,166.4 54.0,159.0 57.8,153.0 62.7,150.4 70.0,149.5 82.0,151.7 89.6,148.0 93.0,140.0 97.0,130.0 102.8,121.0 109.0,118.0 119.0,122.0 128.7,125.5 137.0,119.0 146.0,112.6 155.0,106.0 163.0,99.6 176.0,95.0 180.0,89.0 182.7,84.5 192.0,81.0 202.0,78.0 206.5,72.0 215.0,77.0 223.8,82.0 232.0,87.0 241.0,91.0 258.0,91.0 267.0,86.0 275.7,80.0 279.0,68.0 287.6,58.5 305.0,56.0 322.0,58.5 344.0,56.0 352.0,59.0 358.0,67.0 364.0,74.0 376.0,78.0 390.0,73.0 400.0,76.0 410.0,78.0 426.0,72.0 441.0,66.0 465.0,63.0 482.0,63.0 504.0,60.7 509.0,52.0 514.6,43.4 522.0,40.0 529.8,37.0 547.0,32.6 554.0,25.0 560.0,17.5 562.0,14.7 568.0,23.0 575.0,31.0 582.6,39.8 589.0,45.0 595.0,50.0 602.0,48.0 609.8,46.0 613.0,53.0 616.0,60.7 620.0,66.0 624.4,71.0 632.0,72.0 639.0,73.0 638.0,83.0 637.0,94.0 642.0,102.0 647.4,111.0 649.5,123.0 652.0,132.0 655.8,142.0 649.0,150.0 641.0,157.0 638.0,165.0 635.0,173.6 632.8,186.0 624.0,193.0 616.0,198.7 622.0,207.0 615.0,216.0 607.7,225.8 598.0,238.0 589.0,251.0 578.0,264.0 569.0,272.0 563.0,277.0 555.0,271.0 549.0,266.0 541.0,260.0 527.0,257.0 516.0,260.0 504.0,268.0 493.0,276.0 479.0,288.0 449.0,296.0 409.0,292.0 369.0,300.0 319.0,294.0 269.0,298.0 219.0,292.0 179.0,288.0 162.0,278.5 156.8,280.4 146.4,284.3 136.0,280.4 132.2,275.9 121.8,279.8 112.7,282.4 108.8,286.9 104.3,292.0 101.7,298.0 97.0,290.0 92.0,277.8 85.0,271.0 79.8,265.6 72.0,260.0 65.0,255.8 56.6,246.0 51.7,232.5 48.0,226.4 40.6,211.7 32.0,203.0" fill="none" stroke="#1a5cf5" stroke-opacity="0.190" stroke-width="21.5" stroke-linejoin="round"></polygon>
<polygon points="24.7,194.5 30.0,188.0 35.7,180.0 42.0,177.0 46.0,171.0 50.4,166.4 54.0,159.0 57.8,153.0 62.7,150.4 70.0,149.5 82.0,151.7 89.6,148.0 93.0,140.0 97.0,130.0 102.8,121.0 109.0,118.0 119.0,122.0 128.7,125.5 137.0,119.0 146.0,112.6 155.0,106.0 163.0,99.6 176.0,95.0 180.0,89.0 182.7,84.5 192.0,81.0 202.0,78.0 206.5,72.0 215.0,77.0 223.8,82.0 232.0,87.0 241.0,91.0 258.0,91.0 267.0,86.0 275.7,80.0 279.0,68.0 287.6,58.5 305.0,56.0 322.0,58.5 344.0,56.0 352.0,59.0 358.0,67.0 364.0,74.0 376.0,78.0 390.0,73.0 400.0,76.0 410.0,78.0 426.0,72.0 441.0,66.0 465.0,63.0 482.0,63.0 504.0,60.7 509.0,52.0 514.6,43.4 522.0,40.0 529.8,37.0 547.0,32.6 554.0,25.0 560.0,17.5 562.0,14.7 568.0,23.0 575.0,31.0 582.6,39.8 589.0,45.0 595.0,50.0 602.0,48.0 609.8,46.0 613.0,53.0 616.0,60.7 620.0,66.0 624.4,71.0 632.0,72.0 639.0,73.0 638.0,83.0 637.0,94.0 642.0,102.0 647.4,111.0 649.5,123.0 652.0,132.0 655.8,142.0 649.0,150.0 641.0,157.0 638.0,165.0 635.0,173.6 632.8,186.0 624.0,193.0 616.0,198.7 622.0,207.0 615.0,216.0 607.7,225.8 598.0,238.0 589.0,251.0 578.0,264.0 569.0,272.0 563.0,277.0 555.0,271.0 549.0,266.0 541.0,260.0 527.0,257.0 516.0,260.0 504.0,268.0 493.0,276.0 479.0,288.0 449.0,296.0 409.0,292.0 369.0,300.0 319.0,294.0 269.0,298.0 219.0,292.0 179.0,288.0 162.0,278.5 156.8,280.4 146.4,284.3 136.0,280.4 132.2,275.9 121.8,279.8 112.7,282.4 108.8,286.9 104.3,292.0 101.7,298.0 97.0,290.0 92.0,277.8 85.0,271.0 79.8,265.6 72.0,260.0 65.0,255.8 56.6,246.0 51.7,232.5 48.0,226.4 40.6,211.7 32.0,203.0" fill="none" stroke="#1a5cf5" stroke-opacity="0.234" stroke-width="18.4" stroke-linejoin="round"></polygon>
<polygon points="24.7,194.5 30.0,188.0 35.7,180.0 42.0,177.0 46.0,171.0 50.4,166.4 54.0,159.0 57.8,153.0 62.7,150.4 70.0,149.5 82.0,151.7 89.6,148.0 93.0,140.0 97.0,130.0 102.8,121.0 109.0,118.0 119.0,122.0 128.7,125.5 137.0,119.0 146.0,112.6 155.0,106.0 163.0,99.6 176.0,95.0 180.0,89.0 182.7,84.5 192.0,81.0 202.0,78.0 206.5,72.0 215.0,77.0 223.8,82.0 232.0,87.0 241.0,91.0 258.0,91.0 267.0,86.0 275.7,80.0 279.0,68.0 287.6,58.5 305.0,56.0 322.0,58.5 344.0,56.0 352.0,59.0 358.0,67.0 364.0,74.0 376.0,78.0 390.0,73.0 400.0,76.0 410.0,78.0 426.0,72.0 441.0,66.0 465.0,63.0 482.0,63.0 504.0,60.7 509.0,52.0 514.6,43.4 522.0,40.0 529.8,37.0 547.0,32.6 554.0,25.0 560.0,17.5 562.0,14.7 568.0,23.0 575.0,31.0 582.6,39.8 589.0,45.0 595.0,50.0 602.0,48.0 609.8,46.0 613.0,53.0 616.0,60.7 620.0,66.0 624.4,71.0 632.0,72.0 639.0,73.0 638.0,83.0 637.0,94.0 642.0,102.0 647.4,111.0 649.5,123.0 652.0,132.0 655.8,142.0 649.0,150.0 641.0,157.0 638.0,165.0 635.0,173.6 632.8,186.0 624.0,193.0 616.0,198.7 622.0,207.0 615.0,216.0 607.7,225.8 598.0,238.0 589.0,251.0 578.0,264.0 569.0,272.0 563.0,277.0 555.0,271.0 549.0,266.0 541.0,260.0 527.0,257.0 516.0,260.0 504.0,268.0 493.0,276.0 479.0,288.0 449.0,296.0 409.0,292.0 369.0,300.0 319.0,294.0 269.0,298.0 219.0,292.0 179.0,288.0 162.0,278.5 156.8,280.4 146.4,284.3 136.0,280.4 132.2,275.9 121.8,279.8 112.7,282.4 108.8,286.9 104.3,292.0 101.7,298.0 97.0,290.0 92.0,277.8 85.0,271.0 79.8,265.6 72.0,260.0 65.0,255.8 56.6,246.0 51.7,232.5 48.0,226.4 40.6,211.7 32.0,203.0" fill="none" stroke="#1a5cf5" stroke-opacity="0.303" stroke-width="15.3" stroke-linejoin="round"></polygon>
<polygon points="24.7,194.5 30.0,188.0 35.7,180.0 42.0,177.0 46.0,171.0 50.4,166.4 54.0,159.0 57.8,153.0 62.7,150.4 70.0,149.5 82.0,151.7 89.6,148.0 93.0,140.0 97.0,130.0 102.8,121.0 109.0,118.0 119.0,122.0 128.7,125.5 137.0,119.0 146.0,112.6 155.0,106.0 163.0,99.6 176.0,95.0 180.0,89.0 182.7,84.5 192.0,81.0 202.0,78.0 206.5,72.0 215.0,77.0 223.8,82.0 232.0,87.0 241.0,91.0 258.0,91.0 267.0,86.0 275.7,80.0 279.0,68.0 287.6,58.5 305.0,56.0 322.0,58.5 344.0,56.0 352.0,59.0 358.0,67.0 364.0,74.0 376.0,78.0 390.0,73.0 400.0,76.0 410.0,78.0 426.0,72.0 441.0,66.0 465.0,63.0 482.0,63.0 504.0,60.7 509.0,52.0 514.6,43.4 522.0,40.0 529.8,37.0 547.0,32.6 554.0,25.0 560.0,17.5 562.0,14.7 568.0,23.0 575.0,31.0 582.6,39.8 589.0,45.0 595.0,50.0 602.0,48.0 609.8,46.0 613.0,53.0 616.0,60.7 620.0,66.0 624.4,71.0 632.0,72.0 639.0,73.0 638.0,83.0 637.0,94.0 642.0,102.0 647.4,111.0 649.5,123.0 652.0,132.0 655.8,142.0 649.0,150.0 641.0,157.0 638.0,165.0 635.0,173.6 632.8,186.0 624.0,193.0 616.0,198.7 622.0,207.0 615.0,216.0 607.7,225.8 598.0,238.0 589.0,251.0 578.0,264.0 569.0,272.0 563.0,277.0 555.0,271.0 549.0,266.0 541.0,260.0 527.0,257.0 516.0,260.0 504.0,268.0 493.0,276.0 479.0,288.0 449.0,296.0 409.0,292.0 369.0,300.0 319.0,294.0 269.0,298.0 219.0,292.0 179.0,288.0 162.0,278.5 156.8,280.4 146.4,284.3 136.0,280.4 132.2,275.9 121.8,279.8 112.7,282.4 108.8,286.9 104.3,292.0 101.7,298.0 97.0,290.0 92.0,277.8 85.0,271.0 79.8,265.6 72.0,260.0 65.0,255.8 56.6,246.0 51.7,232.5 48.0,226.4 40.6,211.7 32.0,203.0" fill="none" stroke="#1a5cf5" stroke-opacity="0.433" stroke-width="12.3" stroke-linejoin="round"></polygon>
<polygon points="24.7,194.5 30.0,188.0 35.7,180.0 42.0,177.0 46.0,171.0 50.4,166.4 54.0,159.0 57.8,153.0 62.7,150.4 70.0,149.5 82.0,151.7 89.6,148.0 93.0,140.0 97.0,130.0 102.8,121.0 109.0,118.0 119.0,122.0 128.7,125.5 137.0,119.0 146.0,112.6 155.0,106.0 163.0,99.6 176.0,95.0 180.0,89.0 182.7,84.5 192.0,81.0 202.0,78.0 206.5,72.0 215.0,77.0 223.8,82.0 232.0,87.0 241.0,91.0 258.0,91.0 267.0,86.0 275.7,80.0 279.0,68.0 287.6,58.5 305.0,56.0 322.0,58.5 344.0,56.0 352.0,59.0 358.0,67.0 364.0,74.0 376.0,78.0 390.0,73.0 400.0,76.0 410.0,78.0 426.0,72.0 441.0,66.0 465.0,63.0 482.0,63.0 504.0,60.7 509.0,52.0 514.6,43.4 522.0,40.0 529.8,37.0 547.0,32.6 554.0,25.0 560.0,17.5 562.0,14.7 568.0,23.0 575.0,31.0 582.6,39.8 589.0,45.0 595.0,50.0 602.0,48.0 609.8,46.0 613.0,53.0 616.0,60.7 620.0,66.0 624.4,71.0 632.0,72.0 639.0,73.0 638.0,83.0 637.0,94.0 642.0,102.0 647.4,111.0 649.5,123.0 652.0,132.0 655.8,142.0 649.0,150.0 641.0,157.0 638.0,165.0 635.0,173.6 632.8,186.0 624.0,193.0 616.0,198.7 622.0,207.0 615.0,216.0 607.7,225.8 598.0,238.0 589.0,251.0 578.0,264.0 569.0,272.0 563.0,277.0 555.0,271.0 549.0,266.0 541.0,260.0 527.0,257.0 516.0,260.0 504.0,268.0 493.0,276.0 479.0,288.0 449.0,296.0 409.0,292.0 369.0,300.0 319.0,294.0 269.0,298.0 219.0,292.0 179.0,288.0 162.0,278.5 156.8,280.4 146.4,284.3 136.0,280.4 132.2,275.9 121.8,279.8 112.7,282.4 108.8,286.9 104.3,292.0 101.7,298.0 97.0,290.0 92.0,277.8 85.0,271.0 79.8,265.6 72.0,260.0 65.0,255.8 56.6,246.0 51.7,232.5 48.0,226.4 40.6,211.7 32.0,203.0" fill="none" stroke="#1a5cf5" stroke-opacity="0.762" stroke-width="9.2" stroke-linejoin="round"></polygon>
<polygon points="24.7,194.5 30.0,188.0 35.7,180.0 42.0,177.0 46.0,171.0 50.4,166.4 54.0,159.0 57.8,153.0 62.7,150.4 70.0,149.5 82.0,151.7 89.6,148.0 93.0,140.0 97.0,130.0 102.8,121.0 109.0,118.0 119.0,122.0 128.7,125.5 137.0,119.0 146.0,112.6 155.0,106.0 163.0,99.6 176.0,95.0 180.0,89.0 182.7,84.5 192.0,81.0 202.0,78.0 206.5,72.0 215.0,77.0 223.8,82.0 232.0,87.0 241.0,91.0 258.0,91.0 267.0,86.0 275.7,80.0 279.0,68.0 287.6,58.5 305.0,56.0 322.0,58.5 344.0,56.0 352.0,59.0 358.0,67.0 364.0,74.0 376.0,78.0 390.0,73.0 400.0,76.0 410.0,78.0 426.0,72.0 441.0,66.0 465.0,63.0 482.0,63.0 504.0,60.7 509.0,52.0 514.6,43.4 522.0,40.0 529.8,37.0 547.0,32.6 554.0,25.0 560.0,17.5 562.0,14.7 568.0,23.0 575.0,31.0 582.6,39.8 589.0,45.0 595.0,50.0 602.0,48.0 609.8,46.0 613.0,53.0 616.0,60.7 620.0,66.0 624.4,71.0 632.0,72.0 639.0,73.0 638.0,83.0 637.0,94.0 642.0,102.0 647.4,111.0 649.5,123.0 652.0,132.0 655.8,142.0 649.0,150.0 641.0,157.0 638.0,165.0 635.0,173.6 632.8,186.0 624.0,193.0 616.0,198.7 622.0,207.0 615.0,216.0 607.7,225.8 598.0,238.0 589.0,251.0 578.0,264.0 569.0,272.0 563.0,277.0 555.0,271.0 549.0,266.0 541.0,260.0 527.0,257.0 516.0,260.0 504.0,268.0 493.0,276.0 479.0,288.0 449.0,296.0 409.0,292.0 369.0,300.0 319.0,294.0 269.0,298.0 219.0,292.0 179.0,288.0 162.0,278.5 156.8,280.4 146.4,284.3 136.0,280.4 132.2,275.9 121.8,279.8 112.7,282.4 108.8,286.9 104.3,292.0 101.7,298.0 97.0,290.0 92.0,277.8 85.0,271.0 79.8,265.6 72.0,260.0 65.0,255.8 56.6,246.0 51.7,232.5 48.0,226.4 40.6,211.7 32.0,203.0" fill="none" stroke="#1a5cf5" stroke-opacity="1.000" stroke-width="6.1" stroke-linejoin="round"></polygon>
<polygon points="24.7,194.5 30.0,188.0 35.7,180.0 42.0,177.0 46.0,171.0 50.4,166.4 54.0,159.0 57.8,153.0 62.7,150.4 70.0,149.5 82.0,151.7 89.6,148.0 93.0,140.0 97.0,130.0 102.8,121.0 109.0,118.0 119.0,122.0 128.7,125.5 137.0,119.0 146.0,112.6 155.0,106.0 163.0,99.6 176.0,95.0 180.0,89.0 182.7,84.5 192.0,81.0 202.0,78.0 206.5,72.0 215.0,77.0 223.8,82.0 232.0,87.0 241.0,91.0 258.0,91.0 267.0,86.0 275.7,80.0 279.0,68.0 287.6,58.5 305.0,56.0 322.0,58.5 344.0,56.0 352.0,59.0 358.0,67.0 364.0,74.0 376.0,78.0 390.0,73.0 400.0,76.0 410.0,78.0 426.0,72.0 441.0,66.0 465.0,63.0 482.0,63.0 504.0,60.7 509.0,52.0 514.6,43.4 522.0,40.0 529.8,37.0 547.0,32.6 554.0,25.0 560.0,17.5 562.0,14.7 568.0,23.0 575.0,31.0 582.6,39.8 589.0,45.0 595.0,50.0 602.0,48.0 609.8,46.0 613.0,53.0 616.0,60.7 620.0,66.0 624.4,71.0 632.0,72.0 639.0,73.0 638.0,83.0 637.0,94.0 642.0,102.0 647.4,111.0 649.5,123.0 652.0,132.0 655.8,142.0 649.0,150.0 641.0,157.0 638.0,165.0 635.0,173.6 632.8,186.0 624.0,193.0 616.0,198.7 622.0,207.0 615.0,216.0 607.7,225.8 598.0,238.0 589.0,251.0 578.0,264.0 569.0,272.0 563.0,277.0 555.0,271.0 549.0,266.0 541.0,260.0 527.0,257.0 516.0,260.0 504.0,268.0 493.0,276.0 479.0,288.0 449.0,296.0 409.0,292.0 369.0,300.0 319.0,294.0 269.0,298.0 219.0,292.0 179.0,288.0 162.0,278.5 156.8,280.4 146.4,284.3 136.0,280.4 132.2,275.9 121.8,279.8 112.7,282.4 108.8,286.9 104.3,292.0 101.7,298.0 97.0,290.0 92.0,277.8 85.0,271.0 79.8,265.6 72.0,260.0 65.0,255.8 56.6,246.0 51.7,232.5 48.0,226.4 40.6,211.7 32.0,203.0" fill="none" stroke="#1a5cf5" stroke-opacity="1.000" stroke-width="3.1" stroke-linejoin="round"></polygon>
</g>
<polygon points="24.7,194.5 30.0,188.0 35.7,180.0 42.0,177.0 46.0,171.0 50.4,166.4 54.0,159.0 57.8,153.0 62.7,150.4 70.0,149.5 82.0,151.7 89.6,148.0 93.0,140.0 97.0,130.0 102.8,121.0 109.0,118.0 119.0,122.0 128.7,125.5 137.0,119.0 146.0,112.6 155.0,106.0 163.0,99.6 176.0,95.0 180.0,89.0 182.7,84.5 192.0,81.0 202.0,78.0 206.5,72.0 215.0,77.0 223.8,82.0 232.0,87.0 241.0,91.0 258.0,91.0 267.0,86.0 275.7,80.0 279.0,68.0 287.6,58.5 305.0,56.0 322.0,58.5 344.0,56.0 352.0,59.0 358.0,67.0 364.0,74.0 376.0,78.0 390.0,73.0 400.0,76.0 410.0,78.0 426.0,72.0 441.0,66.0 465.0,63.0 482.0,63.0 504.0,60.7 509.0,52.0 514.6,43.4 522.0,40.0 529.8,37.0 547.0,32.6 554.0,25.0 560.0,17.5 562.0,14.7 568.0,23.0 575.0,31.0 582.6,39.8 589.0,45.0 595.0,50.0 602.0,48.0 609.8,46.0 613.0,53.0 616.0,60.7 620.0,66.0 624.4,71.0 632.0,72.0 639.0,73.0 638.0,83.0 637.0,94.0 642.0,102.0 647.4,111.0 649.5,123.0 652.0,132.0 655.8,142.0 649.0,150.0 641.0,157.0 638.0,165.0 635.0,173.6 632.8,186.0 624.0,193.0 616.0,198.7 622.0,207.0 615.0,216.0 607.7,225.8 598.0,238.0 589.0,251.0 578.0,264.0 569.0,272.0 563.0,277.0 555.0,271.0 549.0,266.0 541.0,260.0 527.0,257.0 516.0,260.0 504.0,268.0 493.0,276.0 479.0,288.0 449.0,296.0 409.0,292.0 369.0,300.0 319.0,294.0 269.0,298.0 219.0,292.0 179.0,288.0 162.0,278.5 156.8,280.4 146.4,284.3 136.0,280.4 132.2,275.9 121.8,279.8 112.7,282.4 108.8,286.9 104.3,292.0 101.7,298.0 97.0,290.0 92.0,277.8 85.0,271.0 79.8,265.6 72.0,260.0 65.0,255.8 56.6,246.0 51.7,232.5 48.0,226.4 40.6,211.7 32.0,203.0" fill="url(#terr)"></polygon>
<g clip-path="url(#bc)">
<circle cx="377" cy="144" r="22" fill="#cfeca6" opacity="0.7" filter="url(#soft)"></circle>
<circle cx="280" cy="140" r="22" fill="#cdeba2" opacity="0.55" filter="url(#soft)"></circle>
<circle cx="330" cy="215" r="25" fill="#bfe890" opacity="0.5" filter="url(#soft)"></circle>
<circle cx="430" cy="190" r="20" fill="#c6ea98" opacity="0.5" filter="url(#soft)"></circle>
<circle cx="380" cy="200" r="70" fill="#84d850" opacity="0.6" filter="url(#soft)"></circle>
<circle cx="300" cy="170" r="60" fill="#a4e36c" opacity="0.4" filter="url(#soft)"></circle>
<circle cx="460" cy="130" r="50" fill="#98dc56" opacity="0.5" filter="url(#soft)"></circle>
<circle cx="545" cy="250" r="45" fill="#aedc5e" opacity="0.6" filter="url(#soft)"></circle>
<circle cx="610" cy="140" r="50" fill="#f6e67c" opacity="0.7" filter="url(#soft)"></circle>
<circle cx="600" cy="60" r="40" fill="#e6e46e" opacity="0.6" filter="url(#soft)"></circle>
<circle cx="480" cy="230" r="40" fill="#8ad852" opacity="0.5" filter="url(#soft)"></circle>
<circle cx="180" cy="190" r="60" fill="#cae99c" opacity="0.5" filter="url(#soft)"></circle>
<circle cx="560" cy="100" r="35" fill="#cce268" opacity="0.5" filter="url(#soft)"></circle>
<rect width="868" height="495" filter="url(#tex)" opacity="0.16"></rect>
<path d="M37.6 208.1 L42.6 206.1 L45.6 205.3 L51.5 205.3 L56.3 205.7 L59.4 205.4 L62.5 205.1M87.8 237.6 L85.8 239.8 L82.6 244.6 L79.5 249.7 L77.9 252.5M82.6 244.6 L77.3 247.0 L74.0 247.9 L71.0 249.2 L66.8 252.5M77.9 252.5 L80.2 255.9 L83.9 260.7 L88.3 264.0 L91.3 267.8M89.1 240.2 L92.5 240.0 L95.5 239.7 L101.0 239.5 L104.2 239.2 L109.0 237.9M93.9 250.6 L92.6 253.8 L91.2 258.4 L90.4 262.1 L89.1 267.1 L88.8 271.9M89.1 267.1 L92.3 270.2 L96.5 273.4 L100.1 275.7M100.9 256.0 L101.6 251.6 L102.8 246.9 L102.9 243.3 L104.1 238.2 L104.2 233.9M130.3 254.4 L131.3 259.3 L131.7 264.0 L132.6 267.0 L135.7 271.8 L138.3 277.1 L141.5 280.8M131.7 264.0 L134.5 265.5 L138.4 268.9 L143.5 271.8 L146.5 273.2 L149.4 274.5 L154.2 277.9 L158.4 279.4M150.8 256.2 L150.6 252.9 L149.9 248.7 L148.3 243.1 L147.6 238.8 L146.7 234.3M146.7 234.3 L144.9 231.1 L143.2 226.9 L141.3 221.5M148.3 243.1 L146.8 239.9 L143.5 235.2 L141.3 231.5 L140.1 227.7M158.4 254.8 L159.0 258.9 L159.5 262.8 L160.9 267.1 L161.6 272.6 L161.6 278.5M161.6 272.6 L158.9 276.3 L155.5 280.2M173.2 249.4 L173.7 245.5 L174.6 242.6 L174.9 238.3 L173.9 232.9 L172.8 229.6 L170.1 225.6 L167.3 221.6 L164.6 216.9M180.6 248.8 L180.9 253.4 L182.0 256.9 L182.8 261.4 L182.4 265.9M204.9 253.1 L206.0 248.9 L207.8 243.4 L209.0 238.9 L211.4 234.1 L214.3 230.7 L216.8 228.2 L221.2 224.9 L225.5 222.2 L229.8 218.4 L235.1 215.7M216.8 228.2 L220.1 227.7 L224.6 226.9 L229.1 226.7M206.0 248.9 L204.3 246.2 L201.7 241.9 L200.3 237.7M216.8 253.9 L216.7 259.0 L216.1 263.2 L215.0 268.6 L214.2 272.0 L212.9 277.6 L212.4 282.6 L210.5 287.9M226.4 255.6 L228.4 257.8 L231.8 261.0 L236.8 263.8 L241.9 266.8 L245.1 267.8 L250.8 268.6 L256.5 269.2 L260.6 270.4 L265.0 271.0 L270.7 271.2 L276.2 272.9 L279.4 273.9M270.7 271.2 L276.6 271.8 L280.0 271.3 L283.5 269.7 L287.1 268.6M226.0 255.5 L228.4 251.0 L230.4 248.7 L234.3 244.8 L237.7 241.7 L241.7 239.5 L244.6 237.2 L248.4 234.3 L252.1 229.9M244.6 237.2 L244.2 233.6 L244.5 230.0 L243.5 224.4 L242.3 221.4 L240.5 217.5M248.4 234.3 L246.2 230.1 L243.4 225.4 L240.4 221.3M239.2 257.3 L239.4 254.2 L239.9 249.7 L240.3 246.3 L240.2 242.7 L241.1 236.8 L242.4 233.8 L243.3 228.0 L244.0 222.7 L244.1 218.3 L244.3 214.0 L244.6 211.0M239.4 254.2 L237.8 250.4 L237.1 245.7 L235.1 240.7 L233.5 237.8 L231.9 232.4 L231.6 226.6M244.3 214.0 L243.0 210.5 L242.5 205.3 L242.7 199.8 L242.7 194.2 L243.8 189.2M245.5 257.8 L248.6 260.3 L250.9 262.2 L255.0 265.0 L257.9 267.2 L261.0 271.2 L264.4 274.8M250.9 262.2 L255.9 263.6 L261.3 266.1 L266.1 266.8 L269.7 267.9 L272.7 268.6 L276.8 268.9M248.6 260.3 L248.4 264.9 L247.0 269.3 L244.3 273.5 L242.1 275.8 L238.3 279.5M251.2 258.0 L251.6 262.8 L252.1 267.2 L253.0 271.3 L254.6 275.7 L255.8 279.2 L256.4 284.2 L256.3 287.3 L255.4 292.0 L254.3 296.0M256.3 287.3 L261.6 289.4 L265.7 291.0 L268.8 293.1 L273.5 296.5M272.0 256.4 L274.1 253.4 L275.8 249.2 L276.5 244.9 L277.6 240.7 L278.2 236.0 L278.6 230.7 L279.2 224.7 L281.0 219.8 L281.7 216.5 L283.9 211.7M278.6 230.7 L282.2 230.1 L285.7 229.1 L290.2 229.1 L293.8 229.3 L298.6 230.2 L302.4 229.8 L305.3 228.6M277.6 240.7 L281.0 240.2 L286.7 238.5 L290.6 237.2M279.9 250.5 L279.4 245.6 L279.5 242.0 L279.5 238.2 L280.1 234.2 L281.6 228.4 L282.3 223.8 L284.0 218.3 L285.0 214.3 L285.1 208.7 L284.4 205.5 L283.7 201.1M285.0 214.3 L286.6 211.0 L288.3 208.3 L290.6 203.6M282.3 223.8 L285.5 219.7 L287.3 216.9 L290.4 213.3 L295.1 209.9M290.4 246.6 L293.9 251.1 L295.5 254.5 L297.6 258.1 L299.9 261.6 L302.1 264.4 L305.2 268.8 L308.3 273.4M295.5 254.5 L298.6 256.8 L302.9 258.4 L307.3 260.1 L311.2 263.1 L313.4 265.4 L317.0 269.4M293.9 251.1 L293.4 254.4 L292.6 257.7 L290.7 262.3M312.1 228.8 L316.0 229.9 L320.5 230.1 L323.6 230.8 L326.6 231.7 L332.0 234.3 L334.8 235.3 L337.9 236.2 L342.4 237.4 L346.5 237.4M318.0 222.0 L322.2 226.3 L324.8 228.5 L328.5 230.8 L333.9 233.2 L337.7 234.0 L342.7 233.8 L346.2 234.2M322.2 217.8 L325.2 219.8 L329.4 222.1 L333.1 224.5 L336.7 226.8M336.7 226.8 L342.3 225.2 L347.7 223.7 L351.8 222.6 L356.7 222.6 L360.0 223.0M326.4 214.0 L324.5 209.0 L323.4 203.7 L320.9 198.5 L319.6 193.1 L319.6 188.7 L318.9 184.5 L319.2 180.2 L319.9 176.9 L322.3 172.0 L323.5 166.9M319.6 188.7 L314.1 188.3 L308.8 186.8 L305.0 186.7 L301.8 186.2M319.9 176.9 L319.7 172.4 L318.6 169.0 L316.2 164.5 L314.8 160.5 L312.4 157.0 L309.1 152.1 L307.8 148.4M339.1 201.9 L343.8 203.7 L348.0 204.3 L353.8 205.1 L358.6 206.6 L362.7 206.8M358.6 206.6 L361.5 205.9 L366.9 206.0 L371.7 205.3M353.8 205.1 L352.8 210.2 L352.1 213.4 L351.9 217.5 L352.5 221.4 L353.8 225.6M337.9 203.1 L341.3 203.3 L344.8 203.7 L347.9 203.6 L353.0 203.3 L356.0 202.4 L360.3 202.3M364.2 186.4 L364.6 182.2 L364.7 178.0 L363.6 173.9 L362.7 168.1 L362.8 163.1 L363.0 160.0M364.7 178.0 L366.3 174.2 L368.3 169.2 L371.0 165.2 L373.0 160.3 L375.6 156.5 L377.9 152.6M378.8 183.0 L379.8 179.6 L380.0 175.9 L380.4 170.8 L380.3 165.0M380.4 170.8 L383.8 170.5 L388.4 171.3 L393.0 172.1 L398.7 172.5 L403.8 174.3 L407.0 175.6M382.5 182.7 L384.4 185.7 L386.1 188.4 L388.7 190.9 L391.6 195.9 L393.3 199.4 L395.2 204.3 L397.1 208.7 L397.9 211.6 L399.6 215.6M392.5 181.8 L395.8 183.5 L398.2 185.6 L401.5 189.6 L403.6 193.2 L405.3 196.0 L408.6 200.7 L410.4 205.0 L412.0 208.5 L413.0 212.8 L412.9 217.9 L412.3 221.2 L412.4 227.0M413.0 212.8 L413.7 215.9 L414.3 221.5 L414.2 226.3M405.5 177.3 L402.7 172.4 L401.5 168.1 L398.8 163.1 L396.6 158.6 L395.4 153.1 L395.7 148.0 L396.8 144.0 L398.2 139.5 L398.7 134.6 L398.9 131.2 L398.1 126.7M421.7 162.2 L421.1 158.7 L420.3 154.4 L419.8 151.1 L419.5 147.4 L418.8 143.1 L417.7 139.3 L415.3 134.5 L413.5 129.2M445.8 156.3 L447.5 153.8 L450.6 149.8 L453.6 146.3 L456.7 141.3 L460.4 138.0 L463.9 133.9 L467.1 131.7 L471.6 128.4 L476.0 124.4M467.1 131.7 L464.9 127.1 L462.2 122.8 L460.1 119.5 L456.6 115.4 L454.5 112.8M453.8 146.2 L450.2 142.8 L447.7 140.7 L445.9 138.1 L444.7 135.3 L443.2 130.9 L441.4 126.6 L438.2 121.6 L435.8 118.9M450.2 142.8 L447.1 142.1 L442.0 140.9 L436.3 140.0 L432.8 139.4M441.4 126.6 L442.7 122.2 L445.0 117.7 L447.7 112.6M462.7 133.5 L466.4 133.3 L471.6 133.5 L476.2 133.2 L481.0 133.7 L484.6 133.7 L487.6 134.4 L493.1 135.6 L497.9 136.2 L503.3 137.2 L508.3 138.1 L511.2 139.3M466.7 127.5 L464.6 125.1 L461.1 121.8 L458.3 119.2 L456.1 116.8M461.1 121.8 L461.3 116.8 L461.7 112.5 L461.7 108.1 L462.2 103.0M464.6 125.1 L461.5 123.6 L456.7 121.5 L453.1 121.0 L449.9 119.7 L446.2 118.5 L443.1 117.6 L437.1 117.6M479.1 110.0 L478.1 106.4 L476.4 100.9 L474.9 97.1 L474.4 92.3 L472.9 88.4M478.1 106.4 L480.5 103.9 L485.3 100.6 L488.4 97.8 L490.6 94.2 L492.8 89.3 L495.3 85.6 L497.7 81.5M474.9 97.1 L477.1 94.3 L479.0 91.6 L481.6 88.5 L483.3 86.0M396.7 169.8 L400.2 165.2 L403.1 160.7 L406.7 156.3 L408.4 152.7M408.4 152.7 L407.0 147.6 L406.1 144.6 L405.0 141.0 L403.1 138.1 L401.6 135.4 L399.1 132.0M396.1 179.7 L399.2 178.1 L402.3 175.9 L406.0 173.8 L410.7 170.7 L413.6 168.1 L416.0 165.5 L417.5 162.8 L420.0 158.8 L424.0 154.5 L427.0 150.4 L429.8 148.0M416.0 165.5 L415.0 160.7 L413.2 156.8 L411.7 154.0 L409.5 150.7 L407.4 147.4M406.0 173.8 L411.1 173.7 L416.3 173.6 L421.6 174.8 L425.3 175.5M397.3 160.1 L394.1 159.6 L391.0 159.4 L386.3 159.0 L382.3 158.8 L379.2 159.0M386.3 159.0 L384.3 153.7 L383.3 149.7 L381.3 144.3 L378.3 140.1 L376.1 137.8M401.1 138.0 L399.3 134.2 L398.7 131.2 L396.9 127.0 L394.8 123.5 L394.0 120.1 L392.5 116.8 L391.3 113.3 L388.7 109.5 L386.4 106.5 L383.3 102.6 L380.4 98.7M392.5 116.8 L392.2 111.6 L392.5 106.6 L394.3 101.4M396.9 127.0 L398.3 123.4 L399.7 119.6 L401.7 115.5 L403.7 112.0 L407.1 107.4 L411.0 103.3M402.1 134.3 L406.5 131.9 L410.0 128.5 L413.1 125.3 L415.7 122.0 L419.4 118.5 L422.4 114.7 L425.3 110.5 L427.5 105.4 L428.7 100.9 L429.0 94.9 L429.4 91.6M419.4 118.5 L421.4 115.2 L425.0 110.5 L427.9 106.3 L432.0 102.2 L434.3 99.2 L436.8 94.9M425.3 110.5 L427.7 107.8 L430.5 104.2 L433.6 101.3M408.0 117.7 L412.8 115.2 L416.5 114.1 L421.0 112.4 L426.8 111.2 L431.7 109.8M421.0 112.4 L423.6 107.3 L426.2 103.9 L428.9 98.9M421.0 112.4 L422.5 109.0 L424.1 105.2 L424.9 102.2 L425.0 96.5 L424.7 93.3 L423.5 89.0M404.2 127.8 L408.8 126.8 L412.4 126.2 L417.8 125.6 L421.3 124.7 L424.8 123.3 L429.4 122.4 L432.5 122.6 L438.2 124.0 L443.0 125.4 L446.1 125.8M424.8 123.3 L427.2 121.2 L430.9 117.5 L433.2 114.5M438.2 124.0 L442.1 127.6 L443.8 130.4 L445.1 134.4 L445.8 138.1 L445.7 141.2 L445.4 144.9 L445.3 149.0M417.1 108.5 L420.6 110.2 L423.7 112.6 L427.3 114.4 L430.3 116.3 L433.8 119.4 L436.2 122.0 L439.1 123.9 L442.8 126.0 L447.2 127.1 L451.1 127.8 L456.8 129.0M454.3 83.1 L459.2 85.1 L463.6 88.3 L467.5 89.8 L472.1 93.1 L475.4 96.2 L480.0 98.7 L484.8 101.9M469.9 71.8 L474.9 73.2 L478.8 75.0 L483.9 77.1 L487.7 78.7 L490.6 80.0M476.0 68.3 L478.1 71.0 L481.8 75.7 L483.8 79.1 L486.2 84.6M478.1 71.0 L481.2 69.3 L486.4 68.0 L489.4 66.5 L492.3 64.1M505.4 69.5 L509.2 69.4 L512.4 69.6 L517.8 70.1 L521.5 70.3 L526.9 71.7 L531.2 73.5 L535.6 76.7 L539.3 78.4 L542.3 79.0 L547.9 79.7M512.4 69.6 L516.9 72.0 L520.9 74.0 L525.7 75.2 L529.5 76.2 L534.7 79.1 L539.8 82.2M290.2 249.3 L291.6 252.6 L294.5 256.7 L296.5 259.5 L300.8 263.4 L303.7 266.2 L308.6 269.7 L312.4 273.2M312.4 273.2 L311.2 277.9 L310.1 283.3 L309.4 287.6 L308.4 293.3M299.6 254.7 L302.8 253.8 L306.4 253.2 L309.9 252.4 L313.5 251.6 L317.5 250.9 L322.1 249.6 L325.8 249.0 L328.9 248.7M313.5 251.6 L315.4 246.3 L316.5 242.6 L316.9 237.0 L317.6 233.8M306.4 253.2 L308.8 255.1 L313.1 257.0 L318.3 260.0M312.0 258.7 L314.4 254.9 L316.9 250.7 L318.0 247.2 L318.2 241.8 L318.2 238.1 L318.2 234.8 L316.8 228.9 L316.1 223.6 L316.5 219.1M318.2 241.8 L321.4 241.5 L324.5 241.7 L329.3 243.3 L334.3 245.9M316.1 223.6 L314.5 218.3 L314.2 212.6 L313.0 208.7 L311.7 204.3M325.9 260.3 L328.0 257.8 L330.5 254.8 L333.3 252.3 L335.5 250.1 L338.2 246.6 L340.9 243.2 L343.4 241.1M330.5 254.8 L328.7 250.3 L328.1 245.2 L326.4 240.0 L323.9 235.2 L320.6 231.2 L317.9 228.4 L315.2 225.2M335.5 250.1 L340.5 252.5 L344.7 253.3 L348.5 253.2 L354.0 251.7 L358.2 250.2 L363.7 248.7 L368.4 248.6M346.8 261.9 L347.3 265.6 L348.3 269.8 L349.3 273.8 L350.6 277.9 L353.4 282.7 L356.6 285.9 L359.5 289.0 L362.1 291.0M347.3 265.6 L345.4 269.8 L343.2 273.3 L341.3 276.0 L338.6 279.0M362.6 256.2 L366.8 257.6 L371.9 259.2 L375.1 259.4 L378.9 259.1M375.1 259.4 L376.7 262.2 L378.0 267.5 L379.3 271.3 L380.2 276.6 L380.4 279.7 L380.2 282.9 L379.6 287.5M373.3 253.1 L373.9 250.1 L375.3 246.1 L377.7 240.7 L379.7 238.1 L382.9 235.2 L386.3 232.8 L389.7 230.2M389.7 249.3 L390.0 244.7 L389.5 241.4 L388.0 235.7 L386.8 230.1 L385.2 226.1 L383.2 221.0 L380.2 216.2 L378.5 213.7 L376.0 210.3M378.5 213.7 L381.5 210.4 L385.3 206.4 L388.5 204.0 L391.8 199.7 L394.6 196.6 L398.6 193.5M378.5 213.7 L380.9 209.2 L382.3 206.2 L384.3 201.7 L385.7 197.8 L386.3 192.0 L387.2 188.4 L387.6 184.8M391.6 249.3 L393.7 245.3 L395.4 240.3 L395.8 236.4 L396.7 233.5 L398.6 229.2 L400.4 225.6 L401.8 219.9 L403.9 214.9 L404.8 209.6 L404.9 206.0 L405.1 201.2 L404.1 196.0M395.8 236.4 L400.8 234.5 L405.6 233.6 L411.5 233.5 L415.5 232.6 L420.7 230.3M405.1 201.2 L408.7 198.7 L411.6 196.2 L414.6 192.8 L417.4 190.7 L422.5 188.3 L426.8 186.6 L431.2 185.5M408.3 256.7 L408.1 260.8 L407.4 264.4 L406.7 268.4 L405.0 274.0 L403.6 278.5 L402.8 282.1 L401.3 285.1 L398.0 288.8 L395.4 293.9M458.0 243.0 L460.5 238.6 L464.1 234.7 L466.3 232.3 L468.7 229.7 L471.5 226.8 L474.0 224.2M460.5 238.6 L463.1 235.0 L466.6 230.2 L468.7 227.6 L470.9 224.2M474.0 224.2 L479.8 224.2 L485.5 225.4 L490.0 225.1 L495.0 225.0 L499.9 225.3 L503.0 226.2 L508.6 228.0M494.4 229.1 L496.9 224.7 L499.2 220.5 L502.5 216.2 L503.6 213.2 L506.7 208.2 L509.5 205.0M499.2 220.5 L502.9 217.6 L506.1 215.2 L509.9 213.0 L514.2 209.4M536.3 245.5 L536.0 250.2 L535.8 253.3 L535.8 256.5M546.7 250.2 L549.8 248.2 L554.7 244.8 L557.9 242.3 L563.3 239.7 L566.2 238.0 L571.3 236.2 L576.1 233.9 L579.5 232.1 L584.2 229.8 L589.1 227.3 L592.4 224.3 L594.6 222.0M581.6 246.2 L586.4 247.9 L589.4 250.0M586.4 247.9 L589.7 245.7 L592.9 243.7M588.8 236.5 L588.3 233.2 L587.5 227.6 L587.2 223.6 L588.1 219.2 L587.8 215.8 L587.4 210.7 L586.9 206.0 L586.5 202.2 L585.1 198.2M592.3 231.6 L595.2 232.8 L599.2 233.4M607.1 210.4 L612.9 210.7 L617.9 210.9M466.2 228.4 L461.3 227.3 L457.3 226.1 L452.0 224.4 L449.0 223.4 L444.2 222.2 L440.8 222.3 L436.3 223.5 L433.0 225.5 L429.6 228.8 L427.5 231.1 L424.9 235.2 L423.5 239.1M465.1 225.2 L467.9 221.7 L469.8 218.7 L472.0 213.6 L475.3 208.7 L479.0 205.2 L483.3 202.4 L488.2 200.2 L492.8 197.2 L495.6 194.8M466.3 209.4 L469.5 213.1 L473.6 216.0 L479.1 218.3 L482.3 220.5 L486.9 222.6 L492.0 225.8 L494.7 227.8 L497.0 230.0 L499.9 234.4 L502.3 239.5M486.9 222.6 L488.1 227.6 L490.7 232.6 L493.5 237.9 L496.4 241.8 L499.0 244.1 L502.4 246.8M479.1 218.3 L484.5 216.2 L488.3 215.7 L493.1 216.2M476.0 202.4 L480.3 203.3 L485.9 203.0 L490.3 202.9 L494.1 203.3 L498.8 203.0 L502.7 202.2 L505.5 200.9M490.3 202.9 L493.5 207.7 L496.6 210.6 L499.7 213.5 L503.5 217.5M481.5 195.5 L485.6 197.5 L490.7 198.9 L494.2 199.0 L498.0 199.1 L503.1 200.0 L508.4 200.4 L513.5 201.2 L517.7 201.8 L522.1 201.4 L527.7 202.3M485.0 190.0 L490.4 192.5 L495.3 194.7 L500.5 196.3 L506.1 197.1 L509.3 197.3 L513.0 197.8 L517.2 198.5 L522.4 199.0 L527.1 200.1 L530.8 200.4 L536.7 201.6M536.7 201.6 L541.2 198.3 L544.6 195.8 L549.0 192.2M493.8 167.3 L497.3 164.6 L499.4 162.4 L503.4 159.6 L506.9 155.8 L510.2 152.6 L514.1 149.4 L518.4 146.0 L523.5 143.7 L526.4 141.4 L529.7 137.9M523.5 143.7 L528.8 143.6 L534.8 143.7 L539.9 143.3 L543.9 141.8 L547.6 141.1M529.7 137.9 L535.5 138.1 L539.8 138.8 L542.9 139.3 L547.8 139.4 L553.6 138.0 L557.6 137.6M494.0 156.6 L497.6 152.7 L500.7 148.6 L503.7 146.2 L507.4 143.4M503.7 146.2 L503.6 142.3 L504.3 138.1 L504.1 133.3 L503.8 128.7 L504.8 124.1 L506.6 120.5M494.7 160.4 L499.5 157.7 L502.7 155.6 L506.3 152.8 L508.8 149.5 L511.1 146.9 L514.4 142.3M502.7 155.6 L505.3 151.5 L506.4 148.1 L506.5 144.9M511.1 146.9 L512.0 143.4 L513.8 138.6 L515.3 133.2 L515.8 128.8 L515.9 124.5M492.1 128.5 L495.5 126.4 L500.7 123.8 L506.1 122.2 L509.2 120.5 L514.0 118.3 L518.4 116.2 L523.0 113.6M523.0 113.6 L523.1 108.4 L522.0 103.4 L519.5 98.5M492.2 128.2 L489.2 124.8 L486.5 121.6 L484.3 118.0 L482.9 113.4 L482.0 110.4 L479.7 105.9 L476.1 101.9 L473.8 99.9 L471.2 98.4M482.0 110.4 L479.8 106.1 L478.0 103.3 L476.2 99.3 L474.7 95.6 L473.8 90.5M492.3 126.5 L489.1 124.5 L485.0 122.1 L481.2 118.3 L479.1 115.0 L476.5 111.8 L474.7 109.2 L472.0 105.6 L468.2 101.2 L465.5 97.7 L461.5 93.5M85.2 220.8 L82.2 218.2 L78.5 215.4 L74.9 213.9 L69.3 212.0 L66.2 210.9 L61.6 208.1 L57.4 204.9M66.2 210.9 L66.3 206.2 L65.5 201.9 L65.8 196.8 L65.3 192.5 L65.0 188.5 L64.9 183.6 L63.8 180.1M86.5 217.3 L84.9 211.6 L84.2 208.4 L83.6 204.7 L83.7 199.5 L84.2 196.4 L83.6 191.0 L82.6 187.6 L80.7 184.6M83.6 191.0 L86.0 188.6 L88.3 184.1 L90.8 181.1 L94.7 178.0M106.4 206.8 L108.7 204.1 L110.4 200.7 L112.7 197.3 L116.4 193.9 L119.2 189.9 L122.4 186.0 L125.6 183.6 L128.2 180.3M125.6 183.6 L124.8 179.6 L124.1 175.0 L123.0 169.3M112.7 197.3 L113.3 192.4 L114.1 188.1 L114.7 185.0 L115.9 179.3 L115.9 175.1 L115.2 170.9M135.0 210.0 L139.1 206.1 L142.2 202.2 L144.5 197.7 L145.6 193.8 L148.4 189.2 L150.5 186.1M165.7 209.3 L165.3 205.2 L165.5 201.9 L164.6 198.1 L164.8 195.0 L166.1 189.4 L167.0 184.1 L168.4 180.5 L169.7 175.6 L170.0 170.2 L171.6 164.7M179.6 205.8 L183.5 209.5 L187.2 213.9 L190.5 216.5 L193.8 220.7 L198.4 224.4 L202.3 228.4 L205.9 231.6M198.4 224.4 L197.1 230.1 L197.0 234.3 L196.7 237.7 L196.0 240.8 L194.9 244.4 L193.9 249.2M187.2 213.9 L188.5 217.8 L189.3 221.3 L189.3 224.8M184.1 204.3 L186.6 200.0 L188.8 196.1 L189.8 191.9 L192.3 187.2M203.4 195.0 L207.2 196.1 L211.2 197.9 L214.2 199.7 L218.7 203.4 L222.9 205.9 L225.9 206.9 L229.3 207.9 L233.6 209.8 L238.8 212.6 L241.9 213.5 L246.3 213.5 L251.3 214.5M233.6 209.8 L233.8 212.8 L234.6 215.8 L235.9 218.7M238.8 212.6 L241.6 217.4 L242.8 221.4 L243.7 225.4 L244.9 230.2 L246.2 233.1 L247.6 236.8 L249.2 240.3M207.1 192.7 L212.1 195.6 L215.6 196.9 L219.5 198.3 L222.6 199.3 L227.1 201.9 L231.7 203.4 L235.4 204.4 L239.8 206.9M239.8 206.9 L242.6 210.0 L246.7 212.8 L249.9 214.2M222.8 183.8 L222.5 179.6 L223.2 174.5 L222.8 171.0 L221.6 167.7 L218.7 162.9 L216.8 158.6 L214.5 155.4 L210.3 151.2M222.5 179.6 L225.4 178.1 L229.1 174.8 L233.3 171.0 L236.4 169.0 L239.6 165.4 L242.1 162.5M217.7 186.5 L219.1 181.9 L220.1 176.8 L222.3 171.9 L223.0 167.4 L222.8 162.8 L224.0 157.3M239.4 175.8 L242.5 180.4 L243.8 183.8 L246.3 187.6 L248.9 190.3 L252.8 194.2 L255.4 196.7 L258.6 198.6 L261.7 200.7 L265.9 202.3M258.6 198.6 L257.6 203.8 L257.8 207.6 L258.0 212.2 L259.0 217.2 L260.4 220.8M242.5 180.4 L243.5 185.7 L243.4 189.6 L243.4 192.9 L244.5 197.7 L244.5 201.0 L245.2 206.2 L246.9 211.6M253.0 171.8 L254.5 176.0 L256.7 180.1 L258.2 184.4 L260.7 187.8 L264.6 191.3 L267.3 193.9 L270.6 196.9 L274.3 199.6M267.3 193.9 L263.1 197.0 L260.2 198.8 L256.2 201.6 L252.8 205.2 L250.4 207.8M264.6 170.1 L266.6 175.0 L268.0 179.2 L268.8 184.1 L270.4 188.4 L272.2 192.6 L273.6 197.5 L274.9 202.7 L275.1 206.0M282.5 167.1 L286.1 170.1 L290.7 172.9 L295.6 175.4 L298.0 177.2 L300.6 179.2 L302.7 181.6M302.7 181.6 L307.0 181.8 L310.1 181.1 L314.6 180.0 L319.2 179.2 L323.6 178.5 L327.2 178.8 L332.0 179.7M289.3 166.3 L291.4 169.3 L293.9 171.7 L298.6 174.9 L301.6 178.2 L304.9 180.5 L309.3 182.8 L313.7 185.8 L317.4 188.1 L320.9 190.3 L325.3 192.8 L328.5 195.2M298.6 174.9 L304.3 176.2 L309.8 177.6 L313.2 178.9 L316.3 179.7 L319.7 180.1 L322.7 181.0M328.5 195.2 L329.6 198.0 L330.4 201.6 L330.9 207.0 L332.1 210.3M299.7 155.9 L303.6 153.8 L307.2 152.6 L312.9 151.7 L318.7 151.2 L322.2 151.7 L325.5 153.2 L328.2 155.1 L332.1 157.1 L336.0 160.2 L341.0 163.0 L344.4 166.0M307.4 126.5 L311.1 125.8 L315.1 125.5 L318.2 124.8 L322.0 122.9 L325.8 121.1 L329.4 119.6 L333.3 116.5 L336.5 113.4 L339.1 110.6 L340.9 107.1M318.2 124.8 L322.7 122.2 L324.8 120.0 L327.2 117.5 L330.1 114.4 L334.0 111.4 L336.7 108.3M310.1 111.1 L306.0 107.2 L303.3 103.5 L301.4 98.1 L300.5 92.7 L299.9 88.0 L300.2 83.3 L299.9 80.3 L299.4 74.6 L298.2 69.0 L298.0 65.7 L298.0 60.2M306.0 107.2 L304.8 102.0 L303.7 98.9 L302.6 93.9 L299.9 88.7 L298.6 85.9 L296.8 82.4M321.6 89.5 L317.9 86.1 L314.4 84.1 L310.5 82.1 L306.2 80.1 L301.7 76.4 L298.3 72.1M325.0 85.8 L328.5 87.5 L331.4 89.3 L335.6 93.5 L338.6 98.5 L340.0 101.5 L342.0 104.0 L344.0 108.2 L345.8 111.6 L347.0 116.2M333.5 76.7 L335.9 79.1 L340.6 82.7 L345.3 85.0 L348.3 85.8 L352.3 87.3 L355.9 89.0 L360.7 91.9 L364.3 95.7 L367.9 97.8M364.3 95.7 L367.9 95.0 L372.0 93.7 L377.1 90.7 L380.9 89.1 L385.0 88.0 L388.4 87.9M364.3 95.7 L369.6 97.2 L375.5 97.7 L380.1 99.0 L385.5 99.3 L390.6 100.1 L394.5 100.0M342.2 68.1 L340.6 63.4 L339.2 58.2M311.9 138.5 L312.3 132.5 L313.0 127.0 L314.6 121.3 L316.1 115.7 L316.7 112.8 L317.1 108.7 L318.6 104.8 L319.9 99.9 L320.0 96.0M313.0 127.0 L310.5 125.1 L306.6 121.9 L303.8 119.2 L300.1 116.5 L295.9 113.6 L291.1 110.9M318.3 136.1 L323.0 139.5 L326.9 143.3 L328.6 146.3 L331.0 149.6 L333.4 152.4 L337.9 155.7 L341.7 158.6 L343.9 161.1 L347.0 164.3M337.9 155.7 L339.9 158.1 L342.1 161.3 L344.8 164.1 L347.3 167.1 L350.6 171.8 L352.5 177.1M329.1 132.5 L333.1 134.5 L336.2 136.5 L339.8 139.6 L342.0 142.2 L344.5 146.9M342.0 142.2 L342.5 145.3 L343.5 151.0 L343.7 154.3 L343.4 159.4 L343.6 164.7 L343.6 169.0M344.5 146.9 L345.3 152.1 L346.1 155.6 L349.0 160.8 L351.2 166.3 L352.2 169.3M350.8 122.4 L354.3 122.7 L358.7 121.8 L362.7 120.9 L366.6 120.9 L371.1 121.9M358.6 115.8 L357.5 110.8 L357.4 105.7 L356.8 102.2 L357.4 96.5 L358.9 92.2 L359.3 88.1M385.3 100.9 L383.8 96.9 L382.3 92.1 L379.9 88.2 L376.9 85.1M379.9 88.2 L384.0 84.5 L387.0 80.9 L389.2 77.9 L391.1 75.1M376.9 85.1 L373.2 84.0 L370.1 83.1 L366.2 81.4M105.2 199.2 L110.2 200.7 L113.3 202.5 L116.6 203.4 L122.0 203.5 L126.4 203.9 L131.3 203.3 L134.5 202.1M116.6 203.4 L120.3 201.0 L124.1 196.8 L128.1 193.1 L132.3 189.2 L136.9 186.3 L140.3 184.9M116.6 203.4 L122.5 202.9 L126.8 202.1 L132.7 202.2 L138.2 203.1 L141.8 204.5 L144.6 205.9M110.8 192.3 L108.0 188.9 L104.6 186.4 L101.0 182.5 L98.7 178.8 L97.0 176.2 L95.0 171.9 L93.5 168.8 L91.9 166.0 L89.8 163.6 L87.5 161.1 L84.9 157.0 L83.2 152.7M121.1 180.1 L120.8 174.6 L121.7 169.9 L121.9 166.7 L122.3 162.5 L123.5 159.1 L124.0 156.1 L123.5 150.7 L123.8 147.3 L123.1 142.6M127.8 172.7 L133.4 172.4 L139.1 172.6 L144.9 172.4 L148.7 172.4 L152.6 172.7 L155.7 172.3 L159.4 172.1M149.1 158.4 L151.3 160.4 L155.0 164.1 L158.9 166.8 L162.2 168.4 L165.0 170.0 L168.3 172.2 L171.0 175.3 L175.4 178.8 L178.1 181.4M161.0 151.2 L164.4 152.3 L168.6 154.4 L173.1 156.0 L176.3 156.8 L179.0 158.2 L184.3 160.6 L189.7 163.0 L194.2 165.3 L198.8 168.3 L203.5 169.8 L208.6 170.4 L213.6 171.3M194.2 165.3 L194.8 169.9 L195.3 173.7 L197.2 179.1 L198.9 182.5 L200.0 186.0M179.0 158.2 L178.6 163.4 L179.2 169.2 L178.4 173.6 L176.3 178.0 L175.0 181.0 L174.5 185.8M158.0 153.1 L160.7 157.2 L163.2 161.5 L164.8 164.3 L166.9 169.0 L169.5 174.3 L171.0 177.5 L172.8 181.1 L176.2 185.7 L180.0 189.2 L183.8 191.6 L186.0 194.0M160.7 157.2 L165.7 155.4 L171.3 155.0 L175.1 154.4 L179.9 154.5 L185.1 156.0 L189.8 156.0M165.4 148.7 L167.9 150.7 L171.1 153.8 L173.9 155.9 L177.7 157.9 L182.0 160.0 L186.6 161.6 L191.7 163.2 L195.0 165.0 L198.4 168.1 L201.4 170.4 L204.4 173.4 L206.8 176.3M182.0 160.0 L182.5 164.3 L184.4 169.7 L185.7 173.2 L187.6 176.2 L189.6 178.9 L192.9 183.5M182.0 160.0 L185.3 157.2 L188.8 155.4 L192.8 154.0 L197.9 152.0 L202.8 150.5 L205.8 149.0M181.2 145.4 L181.7 149.6 L182.6 153.0 L183.1 157.4 L184.0 160.5 L184.6 163.6M184.6 163.6 L181.5 168.4 L179.0 173.5 L178.4 177.2 L177.7 180.7M189.8 149.0 L191.1 144.6 L191.6 140.8 L192.8 136.7 L193.3 131.6 L195.0 127.1M195.0 127.1 L194.2 123.4 L193.9 120.1 L192.7 115.8 L190.6 111.6 L187.5 106.7 L184.3 102.2M203.9 151.5 L205.0 147.5 L206.6 143.9 L207.8 140.9 L210.7 136.2 L212.3 132.4 L214.4 129.1 L217.3 125.9 L221.4 122.0 L223.3 118.5 L226.0 114.1M217.3 125.9 L221.9 124.3 L226.1 123.4 L229.3 123.0M214.4 129.1 L211.7 124.3 L210.5 121.1 L209.2 117.4M220.9 149.5 L222.9 153.4 L224.4 156.1 L226.9 160.9 L228.4 163.5M224.4 156.1 L229.5 157.8 L233.5 159.2 L237.9 161.0 L241.9 162.6M226.9 160.9 L231.7 160.9 L235.4 160.0 L238.8 159.4 L242.8 158.6 L246.3 158.7 L249.3 159.5 L253.7 159.7M224.6 148.5 L222.8 144.6 L221.4 140.9 L220.7 136.7 L220.1 132.2 L219.5 129.2 L218.1 125.0 L217.8 121.6 L218.7 115.8 L219.8 112.1 L220.0 106.5M235.8 139.9 L234.5 136.5 L232.3 131.8 L230.3 126.3 L228.3 121.4 L227.8 116.6M227.8 116.6 L229.7 112.3 L231.8 109.5 L234.1 105.4 L237.2 100.4 L239.2 98.0 L242.6 95.3M232.3 131.8 L227.5 132.1 L224.5 132.7 L220.3 133.5 L216.7 133.6 L211.8 134.2 L206.8 134.8 L203.4 134.7M263.0 110.1 L261.6 106.8 L260.7 103.5 L259.4 99.6 L257.8 95.8 L255.4 92.4M259.4 99.6 L255.0 97.0 L250.8 93.1M263.3 109.1 L266.3 108.9 L269.5 109.2 L274.0 109.5 L278.7 110.6 L283.7 110.8 L288.5 110.3 L294.3 109.4 L298.1 108.7 L303.7 107.1 L307.2 105.7M269.5 109.2 L272.5 113.4 L274.6 117.8 L276.1 121.7 L278.2 125.4 L279.8 129.2 L281.4 134.2M274.0 109.5 L274.5 106.1 L275.1 102.2 L276.5 97.9 L277.9 94.1 L278.2 88.6 L278.3 83.1M285.4 80.4 L290.4 81.2 L294.2 80.9 L299.3 79.2 L302.9 78.0 L307.4 77.3 L311.5 76.1 L314.2 74.4 L318.2 70.1 L322.0 67.5 L326.3 65.8 L329.5 65.0M326.3 65.8 L330.1 69.2 L332.8 72.7 L336.8 76.5 L340.2 80.5 L343.7 85.3M296.7 73.4 L298.9 76.9 L302.0 81.2 L305.4 84.0 L309.3 86.4 L313.7 90.0 L317.6 93.2 L322.0 95.4 L325.8 98.5 L329.3 101.4 L332.1 103.5 L336.9 106.0 L339.7 107.4M339.7 107.4 L339.5 110.7 L338.6 114.1 L338.2 118.5 L337.7 124.1M317.6 93.2 L321.3 92.5 L325.5 92.7 L331.3 92.8M177.9 138.3 L182.7 140.4 L185.7 141.9 L188.6 143.9 L192.1 147.3 L194.3 149.7 L198.0 153.3 L200.7 154.9 L205.5 157.6M192.1 147.3 L194.2 150.2 L195.7 152.8 L198.2 155.9 L199.4 158.8 L202.4 163.0 L204.1 166.4M185.7 141.9 L185.9 146.6 L187.4 151.6 L188.5 157.0 L188.8 161.5 L187.9 165.8M181.9 126.6 L187.4 125.3 L191.5 125.2 L196.1 123.8 L201.8 122.5 L206.9 121.5 L210.4 121.4M210.4 121.4 L212.3 126.8 L213.8 129.7 L215.0 135.4 L215.6 141.1 L217.4 146.4M210.4 121.4 L214.0 125.5 L216.4 127.4 L218.9 129.4M187.8 109.2 L185.2 106.2 L182.6 104.0 L179.4 101.4 L175.7 98.0M179.4 101.4 L174.0 101.9 L168.3 102.3 L163.0 101.3M190.0 105.1 L188.1 100.9 L187.0 96.6 L185.2 90.9 L183.3 87.2M197.2 98.9 L202.3 100.2 L205.7 101.0 L210.7 102.7 L214.5 103.6 L217.7 103.6M213.4 93.6 L215.0 89.7 L217.5 85.5 L219.0 82.6M215.0 89.7 L213.2 86.8 L211.5 82.4 L211.1 79.4 L210.3 74.3M237.7 94.6 L239.5 98.2 L241.7 101.8 L243.7 106.1 L246.0 110.9M239.5 98.2 L238.6 102.3 L237.1 105.1 L234.8 108.7 L231.2 113.3 L228.8 115.9 L225.5 118.9M291.5 69.3 L291.7 66.3 L291.8 62.2 L291.5 59.0M297.3 67.2 L299.7 69.7 L302.7 74.2 L305.0 77.3 L308.5 80.0 L310.6 82.3 L312.8 84.8 L316.0 87.9 L319.9 90.1 L324.0 93.6M319.9 90.1 L318.8 93.1 L317.4 96.5 L316.0 100.7 L315.2 104.2 L313.6 108.3M319.9 90.1 L319.0 93.2 L317.5 97.8 L315.8 102.0 L313.5 107.5 L311.0 111.1 L307.5 114.6M570.0 123.0 L569.6 126.3 L568.7 131.4 L566.4 136.0 L565.4 139.2 L564.8 142.9 L564.1 146.8M576.6 118.5 L571.7 118.6 L566.6 119.8 L561.9 120.8 L558.4 120.9 L554.0 119.9 L548.8 118.6 L543.8 116.1 L538.5 113.3 L534.9 112.4M534.9 112.4 L530.6 115.2 L528.4 117.6 L525.8 121.0M594.7 70.2 L592.9 65.3 L592.2 59.8 L590.5 55.0 L588.9 51.8 L587.7 46.1M592.9 65.3 L595.2 62.3 L597.2 59.7 L601.3 55.3 L604.9 53.2M592.9 65.3 L590.2 61.9 L588.3 58.2 L586.8 53.9 L584.3 49.2 L582.2 46.9 L578.9 43.9M601.2 70.0 L603.9 66.6 L606.5 62.2 L607.8 59.1 L608.1 56.0 L608.2 51.9M606.5 62.2 L604.5 59.3 L601.4 55.9 L598.6 51.2M603.9 66.6 L603.0 62.7 L601.5 58.1 L598.9 54.2 L597.0 51.7M632.6 93.1 L634.9 95.3 L639.7 98.6M634.9 95.3 L635.4 98.5 L635.1 103.6 L636.1 108.3 L638.1 113.7 L639.3 118.8 L639.7 123.6 L639.4 127.9M581.7 124.6 L585.0 120.3 L588.3 115.8 L591.3 112.4 L594.3 110.0 L598.0 108.4 L601.4 107.2 L606.1 105.4 L610.5 104.9 L616.3 103.9 L621.3 103.3 L625.3 102.6 L630.5 100.7M591.3 112.4 L594.9 110.8 L599.4 108.0 L604.5 105.1M588.3 115.8 L587.1 110.1 L586.3 104.5 L585.0 100.4 L583.2 96.3 L581.6 90.6 L581.3 85.0M586.3 125.9 L588.0 123.1 L591.0 120.2 L592.9 117.6 L595.4 114.5M595.6 129.1 L599.6 126.5 L603.4 124.0 L608.0 120.6 L610.3 117.7 L613.3 115.1M599.6 126.5 L602.7 127.7 L607.4 129.8 L612.3 131.5 L617.0 132.7 L621.0 132.8 L625.8 133.1 L628.9 133.2M612.5 135.5 L611.7 139.1 L611.8 142.3 L611.5 147.9 L610.5 152.6 L608.2 157.7 L607.1 161.6 L604.0 166.6 L601.1 170.5 L599.4 173.3 L597.8 176.7 L595.3 181.0 L592.1 185.7M550.8 122.6 L555.6 124.3 L558.5 126.1 L561.2 128.7 L565.8 132.4 L570.4 134.5 L574.9 135.3 L579.2 137.1 L583.9 139.9 L588.3 141.4 L591.9 142.3 L597.1 144.8M574.9 135.3 L580.0 132.1 L583.1 130.4 L587.6 127.6 L591.3 123.7 L595.7 120.4 L598.2 118.4 L601.0 116.8M588.3 141.4 L594.2 141.2 L597.6 141.9 L603.2 142.1M532.3 156.7 L526.8 155.1 L522.3 152.4 L518.4 149.1 L514.7 146.2 L511.8 142.4 L508.3 139.9 L504.9 136.0 L501.0 131.7 L499.0 128.7 L496.4 123.7 L492.4 119.4 L488.5 115.6M522.3 166.9 L523.6 170.0 L525.6 173.6 L527.3 178.6 L527.7 184.2M527.7 184.2 L530.7 183.4 L536.1 182.7 L541.4 181.1 L544.8 180.5 L549.5 178.8M525.6 173.6 L523.5 178.1 L522.8 182.4 L522.1 186.6 L522.3 191.5M511.4 183.3 L512.3 186.3 L514.4 190.9 L517.0 194.2 L520.2 198.9M520.2 198.9 L519.4 202.3 L518.9 207.7 L519.5 210.7 L520.5 214.8 L520.8 220.3M514.4 190.9 L513.3 193.9 L512.0 197.9 L510.6 202.4 L508.9 206.3 L506.7 211.3 L504.9 214.4M495.9 204.9 L492.8 202.2 L489.7 198.6 L487.1 193.8 L485.5 188.5 L485.2 184.9 L484.9 180.1 L485.8 174.8 L485.3 170.2 L485.8 166.4M485.5 188.5 L481.2 188.1 L478.1 187.8 L474.0 186.9 L470.8 186.4M542.8 102.0 L545.8 99.8 L548.1 96.9 L551.6 92.6 L553.9 88.0 L556.3 83.7 L558.5 80.3 L560.3 75.9 L562.1 71.1 L563.0 68.2 L563.1 63.6M563.1 63.6 L564.0 59.0 L565.2 54.3 L567.2 50.5 L569.4 45.8 L571.1 42.4 L573.5 39.5M548.1 96.9 L553.1 99.0 L557.2 101.0 L560.5 102.1M531.0 75.5 L526.7 77.5 L522.1 80.1 L517.2 82.1 L512.8 82.9 L509.1 83.5 L503.3 84.6 L499.1 85.4 L495.5 86.4 L492.5 87.4 L489.2 88.0 L484.1 88.7 L480.8 89.3M509.1 83.5 L503.7 81.9 L499.1 80.1 L495.5 78.0 L491.1 75.7 L486.1 74.1 L481.3 71.1M522.1 80.1 L521.0 83.9 L520.8 89.2 L521.3 95.1 L522.4 99.3 L522.5 103.5 L522.4 108.0 L522.7 111.8M540.1 96.0 L535.3 95.6 L529.4 95.0 L525.8 94.6 L520.4 94.4 L516.9 94.2 L511.4 94.0 L507.7 93.5M539.7 95.1 L534.2 93.4 L528.8 91.8 L525.1 91.8 L521.2 90.6 L517.4 90.5 L512.8 90.8 L509.0 91.2M521.2 90.6 L515.9 93.0 L513.2 94.9 L509.8 98.6 L506.4 100.9 L501.1 103.1 L497.0 105.9 L491.9 108.9M528.1 69.2 L524.0 67.6 L519.4 64.4 L517.4 62.1 L513.8 59.0 L510.9 56.5M519.4 64.4 L515.4 65.8 L511.0 66.8 L505.8 69.2 L500.3 70.6 L495.4 72.6M524.0 67.6 L522.8 61.9 L522.0 58.7 L521.6 55.1 L521.7 51.1 L521.7 46.0M525.5 63.8 L521.5 65.0 L515.8 65.8 L511.4 66.3 L508.0 66.8 L504.7 67.3 L500.0 68.4 L496.3 70.3 L493.2 71.0M500.0 68.4 L496.8 70.6 L492.8 73.0 L488.7 74.9 L483.9 76.4 L480.3 77.6 L475.4 78.3 L470.3 79.6M511.4 66.3 L509.3 68.7 L507.1 73.0 L504.2 76.6M523.7 60.0 L526.9 57.6 L531.0 55.7 L535.3 52.5 L539.5 49.7 L543.7 45.7 L545.9 42.0 L547.2 38.1 L549.0 35.0 L551.6 30.0 L554.1 26.9 L556.2 24.5M551.6 30.0 L555.8 29.2 L558.9 28.2 L561.8 27.1M556.2 24.5 L559.7 23.0 L563.3 21.7M581.2 51.1 L578.2 54.0 L575.6 58.4 L572.3 62.4 L567.9 65.4 L565.2 68.2M583.0 80.7 L587.5 81.4 L593.1 81.3 L596.1 81.3 L599.2 81.2 L604.8 82.1 L607.6 83.0 L610.9 84.9 L615.2 88.0 L617.8 90.1 L622.4 92.6M583.0 79.0 L578.7 81.3 L575.5 83.0 L570.6 86.3 L567.1 88.8 L563.9 92.5 L562.2 95.4M563.9 92.5 L560.9 96.5 L558.7 101.0 L556.9 105.1 L556.0 108.4M563.9 92.5 L559.1 90.3 L555.4 87.7 L551.6 83.8 L548.9 81.1 L546.2 77.1 L543.0 72.8M583.0 62.2 L588.5 62.1 L592.2 61.8 L596.3 61.7 L599.5 60.8 L604.6 59.8 L608.3 60.1 L612.3 61.0 L616.0 61.9M599.5 60.8 L603.7 64.7 L606.7 67.6 L611.2 70.7 L615.3 72.5 L619.1 75.5 L621.4 78.7M97.8 182.9 L93.6 181.2 L90.5 180.6 L86.6 180.2 L82.4 180.9 L76.7 181.6 L71.8 183.3 L67.5 185.3 L62.9 186.5 L58.1 187.6 L52.4 188.1M97.4 187.6 L93.9 187.5 L88.7 185.9 L83.8 183.0 L78.9 179.6 L76.1 177.7 L72.2 174.4M96.1 203.5 L98.9 201.9 L102.3 199.7 L106.4 196.1 L109.0 194.5 L114.2 192.5 L119.3 191.5 L124.5 189.7 L129.7 187.5M98.9 201.9 L103.9 201.8 L107.0 201.5 L110.9 200.8 L116.2 200.5 L119.6 201.2M104.3 122.5 L108.8 121.7 L112.8 121.6 L117.9 122.6 L122.2 124.3 L125.8 126.9 L128.6 130.2 L130.3 133.7 L132.4 137.9M139.3 152.0 L137.3 148.2 L135.8 144.5 L132.4 140.2 L129.7 137.6 L126.0 133.9 L123.4 132.1 L121.3 130.0 L117.7 126.0 L116.2 123.4 L114.0 120.7M132.4 140.2 L134.6 136.7 L136.0 133.2 L137.4 127.4 L137.3 124.0M144.9 135.2 L148.0 133.5 L152.3 131.5 L157.7 129.8 L161.8 129.4 L165.6 129.1 L171.2 129.3 L176.0 128.7 L180.8 127.9 L185.5 127.4 L189.0 128.0 L193.0 127.9M149.1 122.7 L153.9 121.5 L158.6 118.9 L162.2 117.1 L165.7 115.0 L169.6 112.6 L172.7 109.9 L175.7 105.9 L178.8 101.8M220.6 174.1 L216.2 171.9 L212.5 169.8 L208.0 167.3 L205.0 166.6 L199.3 165.9 L194.7 164.6 L191.1 162.6 L186.1 159.5 L182.3 155.8 L179.5 153.3 L176.4 148.7M212.5 169.8 L211.5 165.9 L208.8 160.6 L206.4 158.0 L203.6 153.4 L200.3 150.1 L197.5 145.2 L195.3 142.8M220.6 174.0 L224.6 173.1 L228.3 172.3 L233.4 171.7 L236.6 170.8M223.4 170.0 L218.6 166.5 L214.2 164.2 L208.9 161.9 L204.8 160.1 L200.9 157.5 L197.9 155.7 L194.2 152.5M214.2 164.2 L216.4 159.2 L218.8 155.5 L220.5 153.0 L224.6 149.3M240.0 158.4 L242.3 161.4 L245.1 163.6 L248.9 166.7 L251.3 169.6M313.6 194.2 L315.5 191.7 L318.1 186.8 L319.3 182.4 L319.3 177.3 L320.3 171.8M319.3 182.4 L323.1 183.2 L329.0 183.6 L334.1 184.1 L339.9 183.9M315.5 191.7 L315.9 187.0 L317.1 183.5 L317.7 180.3 L319.8 176.2 L322.2 173.3 L325.9 170.8M315.6 197.4 L311.7 197.3 L307.8 197.6 L304.0 198.6 L300.0 199.2 L297.0 200.1M304.0 198.6 L301.4 194.7 L297.3 191.0 L295.4 188.6M304.0 198.6 L300.3 195.5 L297.3 192.5 L293.9 189.8 L291.2 187.1M303.3 183.6 L299.2 186.3 L295.1 189.9 L291.2 192.7 L287.0 195.6 L282.7 197.9M295.1 189.9 L290.4 188.4 L285.7 185.4 L282.6 182.8 L277.1 180.4 L274.0 179.8 L268.2 178.5M287.0 195.6 L285.7 198.4 L284.7 201.5 L281.9 206.8M299.8 180.7 L296.8 182.0 L293.7 184.4 L289.7 187.5 L285.8 189.5 L282.9 190.3 L277.7 191.6 L274.4 192.7 L270.6 194.3 L266.6 196.1 L261.0 197.2 L257.6 198.2M257.6 198.2 L253.2 194.8 L249.4 192.9 L245.4 189.8 L242.7 187.3 L240.0 183.8 L236.8 180.5M362.7 175.5 L366.4 174.9 L370.5 175.2 L376.0 175.3 L379.5 175.9 L385.3 177.4 L389.9 178.3 L394.8 179.7M385.3 177.4 L388.6 179.6 L390.9 181.7 L393.1 184.4M361.7 171.2 L363.9 168.3 L368.2 165.0 L370.0 162.6 L372.8 159.2 L376.4 155.0 L379.1 152.9M357.7 160.9 L354.1 162.2 L350.5 163.3 L347.4 164.7 L342.9 168.2 L339.6 171.1 L336.0 175.8 L334.0 180.7 L333.5 184.6 L332.9 188.9 L331.8 193.5 L330.7 196.5 L329.8 200.2M342.9 168.2 L340.5 166.2 L336.0 164.2 L332.3 161.1 L328.1 158.7 L324.8 156.8 L321.8 154.4M347.6 128.4 L344.6 128.0 L340.2 126.5 L335.8 123.8 L332.6 122.7 L329.3 122.0 L323.8 120.3 L320.3 118.5 L316.7 115.8M436.7 91.6 L435.9 87.0 L434.9 81.7 L433.6 76.0 L433.7 71.9M442.9 73.5 L439.1 72.2 L435.4 71.3M502.9 149.7 L508.0 146.7 L513.3 144.1 L517.1 142.6 L521.0 140.3 L525.3 138.8M521.0 140.3 L522.3 136.6 L524.3 131.1 L525.1 127.5 L527.1 122.1 L527.8 118.2M521.0 140.3 L522.1 136.7 L522.9 131.4 L523.6 126.7 L524.8 121.6M503.7 148.4 L502.9 143.1 L502.4 139.2 L500.9 135.5 L499.3 132.6M509.2 134.5 L505.2 132.8 L502.4 130.6 L498.4 128.0 L495.3 125.6 L491.6 123.1 L489.5 120.7 L487.2 116.6 L486.1 112.6 L485.5 109.6M543.9 167.9 L549.5 165.9 L554.9 163.3 L557.7 161.7 L562.9 158.9M549.5 165.9 L551.8 167.8 L555.6 170.8 L559.3 174.7 L562.0 179.5 L564.2 182.4 L566.4 186.1M557.7 161.7 L562.2 164.7 L566.3 166.4 L569.2 167.9 L574.2 170.6M558.4 171.6 L558.9 175.9 L559.2 179.9 L558.8 184.5 L558.5 189.0 L557.6 194.5 L555.8 199.3 L555.2 202.2 L555.2 205.5 L555.2 208.7M555.2 202.2 L558.8 204.8 L561.8 206.3 L564.8 208.0 L568.4 209.3 L573.8 211.9 L577.3 213.0M555.6 170.9 L556.6 165.0 L557.8 162.3 L560.8 158.4 L563.0 154.5 L565.0 149.6 L566.1 146.5 L568.2 143.1 L570.1 138.4 L570.9 133.6M556.6 165.0 L555.5 162.1 L554.7 157.2 L554.8 151.9 L554.1 148.0M582.9 168.3 L585.3 171.9 L589.1 176.5 L591.9 178.7 L593.9 181.0 L597.4 184.0 L601.0 186.1 L605.8 187.5 L609.7 187.6 L614.7 186.7 L619.1 185.2 L622.9 182.5M593.9 181.0 L597.7 181.5 L601.5 181.1 L605.0 181.0 L608.4 180.3 L611.7 180.4M594.0 161.3 L598.5 164.9 L602.4 168.2 L604.8 170.4 L607.6 174.0 L611.7 177.3 L616.3 180.9 L619.9 183.4 L623.8 187.7M619.9 183.4 L622.6 181.8 L625.7 180.6 L629.6 178.8 L633.5 175.5M604.5 156.2 L608.5 159.0 L612.1 162.1 L617.0 164.5 L619.7 166.7 L624.6 170.0 L628.2 174.2 L629.9 177.2 L631.5 182.4M600.4 157.5 L600.5 153.1 L599.1 147.3 L597.5 142.2 L596.8 136.6 L595.3 132.6 L593.8 129.2M521.1 177.1 L520.7 182.9 L520.4 188.5 L519.0 192.9 L518.2 197.7M520.7 182.9 L523.1 187.0 L524.6 192.2 L526.2 195.6M520.4 188.5 L524.6 192.7 L527.6 197.6 L528.8 200.3 L531.5 204.2 L534.6 208.8 L538.3 211.9M518.1 175.3 L517.4 180.6 L516.3 184.3 L514.6 188.7 L513.0 193.1 L511.6 197.1 L509.4 201.4 L505.5 205.7 L502.8 207.8 L499.3 210.5 L494.2 213.2 L491.8 215.1M547.5 189.7 L548.4 193.6 L548.7 198.1 L548.7 203.2 L548.6 207.5 L548.5 210.8 L548.8 216.0 L548.0 220.1 L546.6 223.7 L545.2 228.5 L543.5 231.6M548.0 220.1 L546.4 225.7 L544.8 231.4 L543.1 236.1 L541.5 240.4 L539.5 243.6M557.6 191.7 L559.0 197.3 L560.6 200.3 L563.2 204.5 L565.2 209.8 L565.9 213.3 L565.7 216.4 L565.4 220.5 L566.2 224.0 L565.7 229.9 L565.8 235.9 L565.5 239.0M563.2 204.5 L566.6 206.7 L570.4 207.8 L573.7 208.4 L577.9 208.2M560.6 200.3 L563.2 203.6 L564.9 206.5 L566.7 212.1 L568.1 215.2 L569.3 219.2M548.5 189.9 L551.3 186.4 L553.8 182.5 L555.7 178.2 L556.5 175.3 L556.9 170.0M551.3 186.4 L551.2 182.8 L550.6 178.0 L549.8 174.9 L549.9 169.1 L549.6 165.6M582.2 187.9 L584.7 190.4 L588.7 194.1 L591.4 195.8 L594.4 199.1 L598.6 202.8 L601.2 206.7 L603.9 210.8 L608.0 214.7 L610.4 217.4M594.4 199.1 L598.7 197.2 L604.3 195.3 L608.1 194.4M607.7 178.5 L612.0 182.7 L615.3 185.4 L618.2 188.1 L620.4 190.3 L622.2 193.2M615.3 185.4 L620.4 187.7 L625.0 188.4M612.0 182.7 L615.5 183.9 L618.4 184.7 L622.4 186.3 L626.1 189.1M595.8 183.3 L597.0 186.2 L599.4 189.9 L602.1 194.8 L603.8 198.2 L605.3 201.4M528.4 207.6 L531.6 205.1 L535.8 200.8 L538.7 197.5 L541.3 192.6 L542.7 187.3 L543.1 183.6 L542.5 179.6 L542.9 175.6 L543.0 170.3 L542.3 165.1M531.6 205.1 L534.5 206.6 L538.5 209.1 L543.0 211.9 L546.9 213.4 L552.0 215.9 L556.2 219.7M518.5 201.3 L517.6 207.1 L517.0 212.7 L515.5 217.0 L512.4 222.0 L511.1 226.6 L509.1 230.0 L507.6 233.1 L504.7 236.8 L501.5 240.3 L497.8 243.0 L494.2 245.4M501.5 240.3 L499.2 242.3 L495.6 245.3 L493.2 248.0 L489.2 251.2 L485.6 254.0 L481.9 257.5M564.6 209.9 L565.8 214.6 L567.8 219.5 L569.2 222.6 L571.7 225.6 L575.9 228.5 L579.5 231.4 L582.6 235.3 L584.9 238.0 L588.9 240.7 L592.9 245.1M571.7 225.6 L576.3 226.6 L579.6 227.4 L585.1 228.0 L590.5 227.5 L593.9 226.9 L599.5 227.3 L605.0 228.9M557.3 211.3 L559.4 207.8 L561.5 202.7 L562.5 198.1 L564.0 193.9 L565.2 189.2 L565.9 184.3 L567.6 179.1 L569.1 176.1M561.5 202.7 L558.6 199.1 L554.8 196.0 L551.8 193.3 L549.5 191.3 L545.5 187.3 L542.7 185.4M588.7 200.6 L593.3 201.5 L599.1 202.9 L602.7 203.9 L607.4 204.3 L611.4 203.9 L614.9 204.5M582.9 203.5 L585.5 206.1 L588.2 210.6 L590.1 215.2 L591.6 217.9 L592.7 221.5 L592.7 225.9 L592.9 229.1 L594.1 234.1 L594.1 239.0 L594.5 242.9M393.5 260.7 L397.2 262.6 L401.2 265.1 L404.2 266.6 L409.2 268.3M392.6 256.6 L395.2 258.8 L397.3 261.3 L402.0 264.9 L403.9 267.4M397.3 261.3 L400.1 259.3 L405.5 256.7 L409.0 256.0 L411.8 254.9 L415.1 252.6 L420.1 250.8 L423.7 248.7M393.2 265.4 L395.0 267.9 L397.0 273.5 L398.6 277.5 L400.4 282.7 L402.5 288.0 L403.0 291.8M391.2 271.5 L393.0 275.0 L395.5 279.0 L398.0 282.7 L400.8 287.2 L403.3 289.8M449.4 261.1 L453.9 263.5 L456.2 265.6 L460.4 268.8 L463.4 270.7 L466.6 273.6 L469.9 275.8 L473.0 277.4 L475.6 278.9M186.3 274.4 L182.7 275.8 L177.8 277.0 L172.4 278.4 L166.5 278.2M182.7 275.8 L181.7 279.1 L180.2 284.7M177.8 277.0 L172.0 276.6 L168.0 277.4 L163.2 278.3M139.3 272.3 L143.8 274.6 L146.5 276.9 L150.0 280.9M262.3 263.4 L265.7 266.3 L268.3 268.6 L272.1 271.5 L274.5 273.8 L276.3 276.7 L279.2 280.1 L284.0 283.7 L287.3 285.9 L291.7 289.1 L295.5 292.0M272.1 271.5 L277.0 269.5 L281.0 267.4 L286.2 264.7 L290.9 262.4 L296.0 261.0 L300.5 260.1 L305.5 257.7M287.3 285.9 L288.2 289.8 L288.9 295.4M255.7 284.3 L257.4 287.0 L260.8 291.0 L263.3 294.4M353.8 275.6 L352.1 278.1 L349.1 281.7 L345.1 285.6 L341.7 290.2 L338.0 294.2M349.6 291.1 L353.4 294.4 L355.8 297.1M355.8 297.1 L360.5 296.5 L365.0 295.2 L369.9 292.6M352.1 282.4 L348.9 282.1 L344.7 281.4 L339.1 281.6 L335.6 282.3 L331.9 283.0M335.6 282.3 L330.3 284.5 L326.1 287.9 L321.6 290.4 L317.0 292.3M606.2 144.7 L609.7 143.6 L613.0 142.8 L617.2 140.4 L622.4 137.8 L625.4 135.3 L628.8 130.7 L631.3 128.3 L634.9 124.7 L638.3 121.8 L641.1 119.5 L643.2 116.8 L645.2 114.0M596.4 181.3 L590.7 180.0 L587.2 178.5 L583.8 177.3 L580.0 175.6 L576.2 174.0 L571.5 172.9 L567.7 171.5 L562.9 170.9 L558.4 169.9 L553.0 167.7 L548.9 165.2 L545.6 161.9M571.5 172.9 L568.8 175.6 L566.7 178.4 L564.7 182.6 L562.5 187.6 L559.6 192.5 L557.3 195.0M548.9 165.2 L545.7 168.4 L543.6 171.0 L541.3 173.8M600.3 169.9 L603.7 173.3 L608.5 176.7 L612.6 179.3 L615.9 182.0 L618.4 184.7 L622.7 188.3M618.4 184.7 L618.2 189.6 L618.0 193.3 L617.1 196.4 L615.8 202.1 L614.6 206.1 L614.2 210.2 L612.9 215.0M618.4 184.7 L618.2 189.9 L617.3 192.9 L616.1 195.8 L614.3 198.7 L612.2 201.7M596.1 181.9 L597.7 185.0 L599.9 189.9 L600.5 193.1 L600.6 197.9 L599.5 202.7 L597.7 207.5 L596.6 211.4 L595.5 214.4 L594.7 217.5M600.6 197.9 L605.6 198.6 L611.2 198.8 L615.0 199.4M597.7 185.0 L597.0 188.8 L595.8 191.7 L593.0 196.4 L590.7 199.7 L586.8 203.9 L583.4 207.4 L579.1 211.3M584.0 198.0 L580.6 195.4 L577.3 192.5 L574.3 190.5 L570.7 187.4M575.6 205.2 L572.2 204.0 L567.5 201.9 L562.8 199.9 L559.1 197.9 L555.0 195.3M571.0 208.3 L567.9 207.5 L562.9 204.9 L558.4 201.4 L555.5 199.6 L550.5 196.7 L547.8 194.7 L543.9 191.0 L540.3 187.6 L537.8 184.1M537.8 184.1 L535.8 186.9 L533.4 190.3 L530.8 192.8 L528.2 195.2" fill="none" stroke="#5a6eb4" stroke-width="0.9" opacity="0.55" stroke-linejoin="round"></path>
<polyline points="96.0,205.0 95.8,199.9 97.2,195.3 97.6,189.9 98.1,185.1 97.3,179.9 96.9,175.0 98.0,168.4 96.7,163.4 96.2,156.5 95.8,150.8 96.2,145.7 97.5,139.2 100.1,132.6 103.0,126.0 105.0,121.0" fill="none" stroke="#1418e2" stroke-width="1.9" stroke-linejoin="round" opacity=".95"></polyline>
<polyline points="133.0,167.0 135.1,161.8 137.7,158.3 138.9,153.3 140.2,147.6 142.0,143.3 143.5,138.8 145.0,132.5 146.7,128.4 148.8,123.0 151.7,116.7 155.0,110.0" fill="none" stroke="#1418e2" stroke-width="1.9" stroke-linejoin="round" opacity=".95"></polyline>
<polyline points="215.0,188.0 216.4,183.2 218.5,178.3 221.2,172.8 225.2,168.1 228.3,163.0 235.2,160.5 241.0,158.0" fill="none" stroke="#1418e2" stroke-width="1.9" stroke-linejoin="round" opacity=".95"></polyline>
<polyline points="322.0,218.0 321.8,212.9 320.4,208.4 318.5,202.3 316.5,198.1 313.5,195.0 311.6,189.4 306.3,186.2 303.5,182.6 299.0,180.0" fill="none" stroke="#1418e2" stroke-width="1.9" stroke-linejoin="round" opacity=".95"></polyline>
<polyline points="365.0,186.0 364.4,180.6 362.7,173.6 360.7,168.3 359.2,162.2 355.8,158.6 353.4,153.2 352.1,148.2 351.2,143.1 348.8,137.7 348.4,133.2 347.4,127.9 346.8,122.6 346.0,118.0" fill="none" stroke="#1418e2" stroke-width="1.9" stroke-linejoin="round" opacity=".95"></polyline>
<polyline points="430.0,102.0 433.6,97.1 436.5,93.4 438.7,88.4 440.1,82.5 441.4,78.4 443.0,73.0" fill="none" stroke="#1418e2" stroke-width="1.9" stroke-linejoin="round" opacity=".95"></polyline>
<polyline points="495.0,162.0 498.3,158.0 500.2,153.4 504.5,147.3 506.8,142.5 508.2,136.8 510.8,129.9 512.7,124.8 514.4,118.6 515.5,112.9 516.6,108.0 517.1,102.8 519.1,97.5 519.3,92.3 520.6,87.4 521.0,83.0" fill="none" stroke="#1418e2" stroke-width="1.9" stroke-linejoin="round" opacity=".95"></polyline>
<polyline points="532.0,157.0 535.6,160.8 540.8,164.6 544.0,167.7 548.4,170.0 554.4,170.1 559.2,172.1 564.7,172.6 568.7,171.2 574.1,171.2 579.4,168.7 583.8,167.3 588.5,164.7 593.4,161.0 598.6,157.9 604.6,155.9 609.2,154.5 614.0,153.0" fill="none" stroke="#1418e2" stroke-width="1.9" stroke-linejoin="round" opacity=".95"></polyline>
<polyline points="516.0,174.0 520.0,177.3 525.8,179.4 529.4,181.9 533.7,184.7 538.5,188.6 543.5,188.5 549.7,190.7 553.4,190.7 559.8,191.8 564.2,193.3 569.2,190.9 574.4,190.7 578.9,188.6 584.4,188.2 589.7,185.5 594.4,184.0 599.8,182.8 604.0,180.6 609.0,178.0" fill="none" stroke="#1418e2" stroke-width="1.9" stroke-linejoin="round" opacity=".95"></polyline>
<polyline points="507.0,194.0 511.0,196.7 515.9,199.0 520.2,203.1 524.7,205.2 529.5,207.9 533.6,209.8 538.5,211.1 544.6,211.8 549.0,212.3 553.5,212.4 559.4,211.2 563.4,210.4 569.8,209.6 574.3,207.9 578.9,204.9 583.3,203.7 588.8,200.3 594.0,198.0" fill="none" stroke="#1418e2" stroke-width="1.9" stroke-linejoin="round" opacity=".95"></polyline>
<polyline points="391.0,249.0 393.2,255.8 394.5,262.6 392.3,267.6 390.7,272.3 389.0,278.0" fill="none" stroke="#1418e2" stroke-width="1.9" stroke-linejoin="round" opacity=".95"></polyline>
<polyline points="452.0,247.0 451.5,251.9 450.7,257.7 448.8,263.2 445.1,267.5 442.2,272.6 439.0,278.0" fill="none" stroke="#1418e2" stroke-width="1.9" stroke-linejoin="round" opacity=".95"></polyline>
<polyline points="194.0,254.0 191.5,261.3 189.2,268.3 187.1,274.4 184.0,280.0" fill="none" stroke="#1418e2" stroke-width="1.9" stroke-linejoin="round" opacity=".95"></polyline>
<polyline points="147.0,257.0 143.2,263.1 141.4,267.2 139.1,272.6 137.0,278.0" fill="none" stroke="#1418e2" stroke-width="1.9" stroke-linejoin="round" opacity=".95"></polyline>
<polyline points="263.0,258.0 261.9,262.4 261.9,267.6 261.2,272.4 259.4,278.3 256.0,282.3 254.0,288.0" fill="none" stroke="#1418e2" stroke-width="1.9" stroke-linejoin="round" opacity=".95"></polyline>
<polyline points="348.0,262.0 350.6,266.2 351.4,270.7 354.4,276.6 353.1,282.0 350.9,287.6 349.0,293.0" fill="none" stroke="#1418e2" stroke-width="1.9" stroke-linejoin="round" opacity=".95"></polyline>
<polyline points="603.0,132.0 604.8,137.5 606.0,141.9 607.2,148.4 605.5,153.0 603.6,157.9 602.6,163.6 601.1,167.9 599.0,173.4 597.2,177.3 595.8,183.0 594.5,187.9 590.5,191.5 586.5,194.8 582.7,198.8 578.8,202.6 574.3,206.1 568.8,209.5 564.0,213.0" fill="none" stroke="#1418e2" stroke-width="1.9" stroke-linejoin="round" opacity=".95"></polyline>
<polyline points="25.0,195.0 29.2,198.5 31.8,200.5 34.4,203.8 37.2,206.6 39.0,210.2 43.3,212.5 45.6,215.5 50.2,217.0 54.8,221.0 58.0,222.5 60.3,223.8 64.8,225.4 67.3,225.5 70.5,227.9 74.8,229.9 77.5,231.7 80.5,233.6 87.1,235.0 89.0,240.0" fill="none" stroke="#0202ee" stroke-width="3.9" stroke-linejoin="round" stroke-linecap="round"></polyline>
<polyline points="89.0,240.0 89.8,244.7 92.5,247.5 94.5,251.4 97.3,255.6 100.2,255.1 105.7,256.9 111.5,253.0 115.9,253.4 120.5,252.9 125.8,252.1 128.1,254.1 134.9,255.3 138.4,256.8 142.1,256.4 146.9,257.0 151.5,255.5 156.4,254.9 160.1,253.5 164.7,254.1 167.8,251.4 172.0,250.7 174.2,248.7 179.4,248.4 183.9,249.8 187.7,252.3 190.1,253.2 194.8,254.7 198.0,253.8 201.1,252.8 206.6,252.8 209.3,253.4 214.4,254.0 217.7,253.9 222.0,255.3 226.0,255.3 230.0,255.3 233.1,257.4 238.7,257.4 241.3,256.8 245.3,258.7 249.5,258.1 253.2,257.5 256.0,258.9 259.7,257.9 262.5,258.1 267.6,256.3 270.9,257.3 274.8,256.5 277.1,253.5 279.0,251.0" fill="none" stroke="#0202ee" stroke-width="3.9" stroke-linejoin="round" stroke-linecap="round"></polyline>
<polyline points="279.0,251.0 283.4,249.9 285.1,246.2 291.7,247.0 296.3,245.6 299.7,242.7 303.2,238.3 305.9,235.8 309.4,234.0 312.9,229.1 314.9,224.5 317.6,220.6 321.9,217.6 324.5,216.3 327.6,213.1 329.7,209.5 332.7,207.3 335.8,206.2 338.8,201.9 342.0,200.3 344.5,197.8 347.9,195.6 350.4,194.0 354.9,190.3 358.2,189.8 361.3,187.7 365.0,186.8 368.5,185.9 371.7,185.3 376.3,183.7 379.1,183.8 383.4,182.6 386.4,182.0 391.4,181.3 396.1,180.9 400.5,180.3 404.0,180.0" fill="none" stroke="#0202ee" stroke-width="3.9" stroke-linejoin="round" stroke-linecap="round"></polyline>
<polyline points="404.0,180.0 406.0,175.6 408.7,171.2 412.3,167.6 414.0,166.7 418.0,163.5 423.0,161.9 427.0,161.0 430.9,159.3 435.3,159.7 439.0,158.5 443.3,156.1 447.5,156.2 448.9,151.7 452.4,149.3 454.4,146.8 456.8,143.5 458.5,139.9 460.9,136.9 463.8,132.2 464.3,129.4 467.9,126.9 469.3,123.6 471.0,120.8 472.9,118.2 475.6,115.8 478.0,112.9 480.5,110.0 482.3,105.3 484.7,103.6 486.8,99.5 488.4,95.4 490.3,92.8 490.9,88.5 493.0,86.0" fill="none" stroke="#0202ee" stroke-width="3.9" stroke-linejoin="round" stroke-linecap="round"></polyline>
<polyline points="396.0,182.0 395.7,177.0 396.3,172.8 395.9,169.1 397.8,165.6 397.8,160.4 397.6,156.6 397.1,152.2 397.4,149.9 399.7,146.0 400.6,141.2 400.6,138.5 402.5,135.3 403.8,130.2 404.7,127.3 406.0,122.4 407.4,118.2 409.9,115.7 412.4,111.9 416.5,109.8 419.8,107.7 422.7,105.2 426.5,103.5 429.3,101.6 433.6,98.7 435.1,97.5 438.6,94.9 441.9,92.1 446.0,89.4 448.0,87.0 451.7,84.8 454.3,83.3 457.4,80.5 461.8,77.2 463.5,75.1 468.2,73.6 470.5,70.7 474.0,68.9 477.4,67.4 482.8,65.9 486.1,65.3 488.4,63.2 493.9,63.6 496.5,64.6 500.6,65.0 503.6,64.4 505.2,68.6 506.4,74.6 508.0,78.0" fill="none" stroke="#0202ee" stroke-width="3.9" stroke-linejoin="round" stroke-linecap="round"></polyline>
<polyline points="279.0,251.0 282.7,251.0 286.6,250.9 292.5,249.8 294.1,251.4 298.9,254.3 302.3,254.7 304.9,256.5 309.1,258.1 312.0,258.4 317.1,260.3 322.5,259.3 326.9,259.6 330.9,259.9 334.0,261.7 338.8,260.8 344.6,262.4 347.6,262.9 352.6,260.9 356.4,259.9 361.4,257.9 365.8,254.6 369.1,253.3 373.0,252.1 377.6,252.2 381.3,251.4 386.3,249.6 391.6,249.0 395.1,251.0 400.4,252.1 405.5,254.0 409.5,257.7 412.0,254.6 416.7,251.2 419.0,247.8 422.4,247.2 425.4,244.5 431.2,245.6 434.4,245.0 439.0,246.6 442.5,246.8 448.3,247.4 451.1,247.9 454.2,244.7 458.2,243.8 460.7,241.8 465.1,238.1 468.6,235.4 472.5,234.0 478.0,234.3 481.3,231.1 487.3,231.1 490.5,229.5 495.2,229.7 499.2,229.2 502.8,230.5 507.1,230.0 513.0,230.6 517.1,233.6 521.3,234.6 523.2,235.9 526.3,238.7 529.6,239.9 533.7,243.0 536.3,244.6 538.0,247.5 541.6,247.9 545.1,249.0 548.8,252.0 553.6,251.9 556.3,252.0 559.2,252.5 564.2,253.1 567.1,252.2 571.5,251.4 575.0,249.9 578.1,248.1 581.6,246.0 585.0,242.9 586.6,239.9 589.8,235.7 591.0,232.1 593.7,228.9 596.3,225.8 598.9,222.4 600.5,218.7 603.5,215.7 605.0,213.0 608.4,210.0 611.0,207.9 613.0,203.1 616.0,199.0" fill="none" stroke="#0202ee" stroke-width="3.9" stroke-linejoin="round" stroke-linecap="round"></polyline>
<polyline points="469.0,236.0 468.3,233.0 466.3,228.2 464.0,225.3 463.6,221.9 462.1,218.2 460.5,214.6 464.1,211.5 466.4,209.7 468.4,207.1 472.6,204.5 475.6,203.4 478.7,200.7 479.5,197.9 483.3,193.6 484.2,189.4 487.3,186.2 489.9,183.5 490.4,180.3 491.5,177.3 493.4,172.8 493.7,169.6 494.8,166.6 494.1,161.7 494.5,158.1 493.8,154.2 493.8,151.6 491.6,148.3 491.3,143.9 491.0,140.3 490.8,138.1 492.1,132.7 492.6,129.0 492.0,127.1 492.9,122.3 493.0,119.0" fill="none" stroke="#0202ee" stroke-width="3.9" stroke-linejoin="round" stroke-linecap="round"></polyline>
<polyline points="87.0,234.0 86.1,229.6 86.3,225.6 85.6,222.5 84.1,219.0 86.4,216.2 88.8,212.8 91.8,211.7 95.7,207.9 101.3,206.9 105.5,206.5 110.6,206.4 114.7,207.6 117.0,207.7 121.1,209.6 124.6,209.7 129.3,209.7 133.3,209.1 136.6,209.4 142.1,209.9 145.6,210.2 150.2,209.6 155.1,210.4 158.2,210.1 163.1,210.8 167.5,208.6 172.0,207.2 174.8,207.5 178.3,206.0 181.8,205.1 187.0,203.6 191.0,201.9 194.4,201.2 197.8,198.6 202.0,197.2 204.9,194.3 207.5,192.4 212.0,191.0 215.6,187.6 218.0,186.6 220.5,184.4 224.1,182.0 227.1,181.5 230.5,179.0 234.3,178.7 236.9,176.4 241.1,175.8 246.6,174.2 250.6,171.8 255.7,172.3 261.9,170.3 264.4,169.5 268.5,169.0 273.2,167.5 275.7,167.5 280.1,167.5 284.9,167.4 288.0,166.7 292.4,165.1 296.0,164.0" fill="none" stroke="#0202ee" stroke-width="3.9" stroke-linejoin="round" stroke-linecap="round"></polyline>
<polyline points="296.0,164.0 297.1,161.3 298.6,157.1 300.2,152.5 303.3,148.4 304.0,144.9 304.9,141.0 305.0,138.1 305.4,133.3 305.8,129.7 307.2,127.4 307.8,122.2 308.3,119.7 308.6,114.7 310.0,110.6 310.7,106.4 313.5,101.8 316.8,97.2 318.3,92.1 322.9,89.0 323.9,87.2 327.2,84.1 330.3,80.6 331.7,79.1 333.8,76.2 336.2,73.4 340.4,71.1 343.7,67.4 345.4,63.9 349.1,61.8 352.0,59.0" fill="none" stroke="#0202ee" stroke-width="3.9" stroke-linejoin="round" stroke-linecap="round"></polyline>
<polyline points="305.0,141.0 308.7,139.3 311.9,138.9 315.4,136.8 321.0,134.6 324.1,134.2 327.1,132.6 332.4,131.5 336.5,129.7 339.5,128.4 344.0,128.8 346.9,126.3 349.3,124.0 351.5,120.8 355.3,119.5 358.2,115.2 361.2,112.4 364.6,110.6 368.1,109.0 373.3,105.6 376.0,104.7 379.0,102.8 384.6,100.7 387.7,99.2 391.4,99.3 394.4,96.0 395.7,92.6 397.0,87.2 399.0,84.8 400.0,80.0" fill="none" stroke="#0202ee" stroke-width="3.9" stroke-linejoin="round" stroke-linecap="round"></polyline>
<polyline points="101.0,206.0 103.6,201.9 106.2,197.4 109.1,195.6 111.3,191.3 113.8,188.4 116.0,186.4 120.2,181.3 122.7,179.2 124.5,175.6 127.8,172.9 130.6,170.3 132.3,167.5 138.0,165.4 141.2,161.1 144.5,159.3 150.9,157.6 153.0,156.8 156.1,154.1 159.6,151.1 163.2,150.7 165.6,147.7 169.3,145.6 172.7,145.4 176.3,143.1 180.4,144.0 183.5,146.1 187.2,147.2 191.2,148.5 193.7,151.3 198.9,151.9 202.2,151.2 206.2,151.6 210.4,150.2 215.2,149.7 220.0,150.3 224.6,149.0 226.7,146.5 229.0,144.8 232.7,141.6 236.2,138.9 241.2,135.8 244.7,134.0 246.5,131.4 250.8,129.0 254.2,125.1 258.0,122.9 259.5,118.5 261.5,114.4 263.0,109.3 264.2,106.6 265.5,100.4 266.0,97.1 269.1,92.7 272.2,89.9 277.5,87.0 279.9,83.9 283.0,81.9 286.5,80.8 289.4,77.8 292.6,76.8 295.0,73.5 299.0,72.0" fill="none" stroke="#0202ee" stroke-width="3.9" stroke-linejoin="round" stroke-linecap="round"></polyline>
<polyline points="176.0,143.0 177.2,139.8 179.5,136.3 180.0,133.2 180.9,128.0 183.3,123.6 183.7,118.1 185.2,114.6 187.9,109.1 190.0,106.9 192.0,103.9 193.6,100.4 197.1,98.1 199.4,96.5 202.1,94.9 205.9,93.7 210.4,93.6 214.7,94.0 218.9,93.6 224.3,95.3 228.3,95.1 231.6,94.5 235.9,93.8 241.2,94.1 245.7,93.8 250.2,93.7 252.7,91.4 258.0,91.0" fill="none" stroke="#0202ee" stroke-width="3.9" stroke-linejoin="round" stroke-linecap="round"></polyline>
<polyline points="259.0,90.0 261.4,87.3 264.3,83.3 265.5,80.7 268.5,78.6 274.4,77.2 279.1,76.3 281.5,74.1 284.8,73.3 287.9,71.4 291.1,69.4 295.4,67.6 300.2,65.5 302.4,66.1 307.0,63.2 311.7,64.1 313.7,62.3 317.5,61.4 322.0,61.0" fill="none" stroke="#0202ee" stroke-width="3.9" stroke-linejoin="round" stroke-linecap="round"></polyline>
<polyline points="551.0,121.0 554.9,122.0 560.0,123.0 563.4,122.5 567.3,122.5 572.5,122.3 576.1,122.4 576.1,119.4 577.7,116.2 576.5,112.1 577.3,109.7 579.1,106.1 579.7,102.5 580.7,98.6 580.1,94.7 581.4,90.5 582.3,85.9 582.7,81.9 585.1,77.7 588.6,75.6 592.5,72.9 595.1,70.5 599.3,70.4 604.9,69.4 608.1,70.4 611.8,70.6 616.2,70.8 619.3,72.5 623.5,73.5 626.9,76.7 630.1,80.3 632.4,83.8 632.4,88.9 631.6,91.3 633.0,96.0" fill="none" stroke="#0202ee" stroke-width="3.9" stroke-linejoin="round" stroke-linecap="round"></polyline>
<polyline points="576.0,123.0 578.7,124.4 583.3,125.9 586.0,125.5 590.5,127.3 593.9,129.0 598.5,130.9 602.2,131.4 607.5,133.0 609.9,135.3 614.3,135.3 617.4,137.7 620.0,139.0 624.0,140.0" fill="none" stroke="#0202ee" stroke-width="3.9" stroke-linejoin="round" stroke-linecap="round"></polyline>
<polyline points="551.0,121.0 551.4,125.0 550.5,130.3 550.5,134.5 549.8,140.4 547.0,144.0 543.1,145.7 541.4,148.6 537.5,151.1 535.7,155.1 532.6,156.4 530.2,159.7 526.1,162.2 523.8,164.2 521.5,167.7 518.8,171.9 516.3,173.8 515.1,178.3 512.6,181.6 510.0,183.3 509.0,188.2 508.7,191.1 506.6,194.0 505.1,196.2 500.9,199.1 498.9,203.7 495.1,205.3 491.0,208.0" fill="none" stroke="#0202ee" stroke-width="3.9" stroke-linejoin="round" stroke-linecap="round"></polyline>
<polyline points="551.0,121.0 549.1,117.0 547.5,112.9 545.8,109.3 543.9,105.6 541.7,101.3 540.7,97.3 540.0,94.2 538.6,92.2 536.0,88.7 535.6,84.8 532.6,81.0 532.3,77.3 529.9,74.0 528.5,71.6 527.1,67.5 526.0,65.1 523.7,60.0 523.4,58.2 521.5,54.2 518.7,50.1 517.2,47.3 516.0,44.0" fill="none" stroke="#0202ee" stroke-width="3.9" stroke-linejoin="round" stroke-linecap="round"></polyline>
<polyline points="562.0,16.0 564.4,20.6 567.6,23.6 569.5,28.4 571.6,30.2 572.6,33.8 576.2,36.5 578.0,39.6 580.2,45.9 580.8,51.0 580.8,54.3 583.1,56.6 583.4,61.1 583.9,63.9 583.1,68.8 583.3,71.1 582.2,75.9 582.9,79.5 583.0,82.0" fill="none" stroke="#0202ee" stroke-width="3.9" stroke-linejoin="round" stroke-linecap="round"></polyline>
</g>
<rect x="84.0" y="234.0" width="10" height="10" fill="#a8a8b8" fill-opacity=".85" stroke="#555" stroke-width="1"></rect>
<rect x="214.0" y="250.0" width="8" height="8" fill="#a8a8b8" fill-opacity=".85" stroke="#555" stroke-width="1"></rect>
<rect x="256.0" y="165.5" width="11.0" height="11.0" fill="#a8a8b8" fill-opacity=".85" stroke="#555" stroke-width="1"></rect>
<rect x="346.0" y="244.0" width="8" height="8" fill="#a8a8b8" fill-opacity=".85" stroke="#555" stroke-width="1"></rect>
<rect x="400.0" y="176.0" width="12" height="12" fill="#a8a8b8" fill-opacity=".85" stroke="#555" stroke-width="1"></rect>
<rect x="443.5" y="152.0" width="8" height="8" fill="#a8a8b8" fill-opacity=".85" stroke="#555" stroke-width="1"></rect>
<rect x="540.5" y="82.0" width="8" height="8" fill="#a8a8b8" fill-opacity=".85" stroke="#555" stroke-width="1"></rect>
<rect x="558.5" y="235.5" width="12" height="12" fill="#a8a8b8" fill-opacity=".85" stroke="#555" stroke-width="1"></rect>
<rect x="0" y="468" width="868" height="27" fill="#8c8c8c"></rect>
<text x="1" y="12" font-family="DejaVu Sans, Liberation Sans, sans-serif" font-weight="bold" font-size="12.3" textLength="31" lengthAdjust="spacing" fill="#000" stroke="#fff" stroke-opacity=".0">ntes</text>
<text x="75" y="27" font-family="DejaVu Sans, Liberation Sans, sans-serif" font-weight="bold" font-size="12.5" textLength="53" lengthAdjust="spacing" fill="#000" stroke="#fff" stroke-opacity=".0">Cognac</text>
<text x="173" y="44" font-family="DejaVu Sans, Liberation Sans, sans-serif" font-weight="bold" font-size="12.5" textLength="84" lengthAdjust="spacing" fill="#000" stroke="#fff" stroke-opacity=".0">ANGOULÊME</text>
<text x="549" y="78" font-family="DejaVu Sans, Liberation Sans, sans-serif" font-weight="bold" font-size="12" textLength="35" lengthAdjust="spacing" fill="#000" stroke="#fff" stroke-opacity=".0">Ussel</text>
<text x="268" y="163" font-family="DejaVu Sans, Liberation Sans, sans-serif" font-weight="bold" font-size="12.5" textLength="76" lengthAdjust="spacing" fill="#000" stroke="#fff" stroke-opacity=".0">PÉRIGUEUX</text>
<text x="453" y="147" font-family="DejaVu Sans, Liberation Sans, sans-serif" font-weight="bold" font-size="12.5" textLength="42" lengthAdjust="spacing" fill="#000" stroke="#fff" stroke-opacity=".0">TULLE</text>
<text x="411" y="173" font-family="DejaVu Sans, Liberation Sans, sans-serif" font-weight="bold" font-size="13.5" textLength="128" lengthAdjust="spacing" fill="#000" stroke="#fff" stroke-opacity=".0">Brive-la-Gaillarde</text>
<text x="686" y="207" font-family="DejaVu Sans, Liberation Sans, sans-serif" font-weight="bold" font-size="12.5" textLength="78" lengthAdjust="spacing" fill="#000" stroke="#fff" stroke-opacity=".0">Saint-Flour</text>
<text x="353" y="239" font-family="DejaVu Sans, Liberation Sans, sans-serif" font-weight="bold" font-size="12.5" textLength="117" lengthAdjust="spacing" fill="#000" stroke="#fff" stroke-opacity=".0">Sarlat-la-Canéda</text>
<text x="18" y="244" font-family="DejaVu Sans, Liberation Sans, sans-serif" font-weight="bold" font-size="13" textLength="63" lengthAdjust="spacing" fill="#000" stroke="#fff" stroke-opacity=".0">Libourne</text>
<text x="573" y="249" font-family="DejaVu Sans, Liberation Sans, sans-serif" font-weight="bold" font-size="13" textLength="72" lengthAdjust="spacing" fill="#000" stroke="#fff" stroke-opacity=".0">AURILLAC</text>
<text x="175" y="274" font-family="DejaVu Sans, Liberation Sans, sans-serif" font-weight="bold" font-size="13.5" textLength="66" lengthAdjust="spacing" fill="#000" stroke="#fff" stroke-opacity=".0">Bergerac</text>
<text x="90" y="315" font-family="DejaVu Sans, Liberation Sans, sans-serif" font-weight="bold" font-size="12.5" textLength="52" lengthAdjust="spacing" fill="#000" stroke="#fff" stroke-opacity=".0">Langon</text>
<text x="38" y="478" font-family="DejaVu Sans, Liberation Sans, sans-serif" font-weight="bold" font-size="13" textLength="124" lengthAdjust="spacing" fill="#000" stroke="#fff" stroke-opacity=".0">MONT-DE-MARSA</text>
<text x="21.30000000000001" y="266.6" text-anchor="end" font-family="DejaVu Sans, Liberation Sans, sans-serif" font-weight="bold" font-size="18.2" fill="#000">UX</text>
<text x="34.599999999999994" y="166" text-anchor="end" font-family="DejaVu Sans, Liberation Sans, sans-serif" font-weight="bold" font-size="12.5" fill="#000">Blaye</text>
<text x="359" y="174" font-family="Liberation Sans, sans-serif" font-size="11" textLength="47" lengthAdjust="spacing" fill="#111" stroke="#fff" stroke-width="2.5" stroke-opacity=".85" paint-order="stroke">Dordogne</text>
</svg>
<svg class="abs" style="left:0;top:0" width="1066" height="694" viewBox="0 0 1066 694">
<path d="M28.5 61.5H40.5L45.5 66.5V82.5H28.5Z" fill="#fff" stroke="#7d7d7d" stroke-width="1.2" stroke-linejoin="round"></path><path d="M40.5 61.5V66.5H45.5" fill="#eee" stroke="#7d7d7d" stroke-width="1"></path>
<path d="M60.5 80V64.5Q60.5 63 62 63H68L70.5 66H79Q80.5 66 80.5 67.5V70" fill="#f3c436" stroke="#d5a11e" stroke-width="1"></path><path d="M60.5 80.5L63.5 69.5H84L81 80.5Z" fill="#f9d654" stroke="#d9a820" stroke-width="1" stroke-linejoin="round"></path>
<rect x="97" y="60.5" width="20" height="20.5" rx="3" fill="#5c88c5" stroke="#3f6aa6" stroke-width="1"></rect><rect x="100.5" y="62.5" width="13" height="9" fill="#fff" stroke="#d0d8e4" stroke-width=".5"></rect><path d="M102 65.0H112M102 67.0H112M102 69.0H112" stroke="#8a8a8a" stroke-width=".55"></path><rect x="102" y="74.0" width="10.5" height="7" fill="#d4d4d4" stroke="#8a8a8a" stroke-width=".6"></rect><rect x="104" y="75.5" width="3" height="4.5" fill="#44546a"></rect>
<rect x="132" y="60.5" width="20" height="20.5" rx="3" fill="#5c88c5" stroke="#3f6aa6" stroke-width="1"></rect><rect x="135.5" y="62.5" width="13" height="9" fill="#fff" stroke="#d0d8e4" stroke-width=".5"></rect><path d="M137 65.0H147M137 67.0H147M137 69.0H147" stroke="#8a8a8a" stroke-width=".55"></path><rect x="137" y="74.0" width="10.5" height="7" fill="#d4d4d4" stroke="#8a8a8a" stroke-width=".6"></rect><rect x="139" y="75.5" width="3" height="4.5" fill="#44546a"></rect>
<rect x="144.5" y="74.5" width="10.5" height="10.5" rx="2" fill="#4d934d" stroke="#3a7a3a" stroke-width=".8"></rect><path d="M147 82.5L152.5 77" stroke="#fff" stroke-width="2.2" stroke-linecap="round"></path>
<path d="M165.5 61.5H182L186.5 66V76.5H165.5Z" fill="#fff" stroke="#8a8a8a" stroke-width="1.1"></path><path d="M182 61.5V66H186.5" fill="#eee" stroke="#8a8a8a" stroke-width=".9"></path>
<rect x="179" y="74" width="11" height="11" rx="2" fill="#e9c02c" stroke="#c9a01c" stroke-width=".8"></rect><path d="M184.5 76V83M181 79.5H188M182 77L187 82M187 77L182 82" stroke="#fff" stroke-width="1.3"></path>
<path d="M200.5 61.5H216L220.5 66V76.5H200.5Z" fill="#fff" stroke="#8a8a8a" stroke-width="1.1"></path><path d="M216 61.5V66H220.5" fill="#eee" stroke="#8a8a8a" stroke-width=".9"></path>
<path d="M213 71L222 82" stroke="#8a6a20" stroke-width="4.2" stroke-linecap="round"></path><path d="M214 72L221.5 81.5" stroke="#e8c050" stroke-width="2.4" stroke-linecap="round"></path>
<path d="M208.5 66.5A4.2 4.2 0 1 0 215 71.5L212 71L210.5 68.5Z" fill="#c8ccd2" stroke="#555" stroke-width="1"></path>
<path d="M250.5 62L257 78L269.5 61.5" fill="none" stroke="#2f5d8c" stroke-width="1.4"></path>
<circle cx="250.5" cy="62" r="2.2" fill="#fff" stroke="#2f5d8c" stroke-width="1.1"></circle>
<circle cx="257" cy="78.5" r="2.2" fill="#fff" stroke="#2f5d8c" stroke-width="1.1"></circle>
<circle cx="269.5" cy="61.5" r="2.2" fill="#fff" stroke="#2f5d8c" stroke-width="1.1"></circle>
<rect x="263" y="74" width="11" height="11" rx="2" fill="#5a9e5a" stroke="#3f7f3f" stroke-width=".8"></rect><path d="M268.5 76.2V82.8M265.2 79.5H271.8" stroke="#fff" stroke-width="2.2"></path>
<rect x="284.0" y="60.0" width="6.7" height="6.7" fill="#274a78"></rect>
<rect x="290.6" y="60.0" width="6.7" height="6.7" fill="#7fa6d6"></rect>
<rect x="297.2" y="60.0" width="6.7" height="6.7" fill="#274a78"></rect>
<rect x="284.0" y="66.6" width="6.7" height="6.7" fill="#7fa6d6"></rect>
<rect x="290.6" y="66.6" width="6.7" height="6.7" fill="#274a78"></rect>
<rect x="297.2" y="66.6" width="6.7" height="6.7" fill="#7fa6d6"></rect>
<rect x="284.0" y="73.2" width="6.7" height="6.7" fill="#274a78"></rect>
<rect x="290.6" y="73.2" width="6.7" height="6.7" fill="#7fa6d6"></rect>
<rect x="297.2" y="73.2" width="6.7" height="6.7" fill="#a9c3e3"></rect>
<rect x="299.5" y="74" width="11" height="11" rx="2" fill="#5a9e5a" stroke="#3f7f3f" stroke-width=".8"></rect><path d="M305.0 76.2V82.8M301.7 79.5H308.3" stroke="#fff" stroke-width="2.2"></path>
<path d="M321 63Q319 70 322 74Q323 76 325 74L325.5 69M333 62Q338 62 337.5 68Q337 73 334.5 74.5" fill="#6f96c9" stroke="#2e5786" stroke-width="1.2"></path>
<path d="M323 62Q327 59 332 61Q336 63 335 69Q334 73 332 75Q331.5 79 329 79Q327.5 78 328 75Q324 73 323.5 68Z" fill="#6f96c9" stroke="#2e5786" stroke-width="1.2"></path><circle cx="331" cy="66" r=".9" fill="#fff"></circle>
<rect x="334.5" y="74" width="11" height="11" rx="2" fill="#5a9e5a" stroke="#3f7f3f" stroke-width=".8"></rect><path d="M340.0 76.2V82.8M336.7 79.5H343.3" stroke="#fff" stroke-width="2.2"></path>
<path d="M355 81Q360 66 376 60.5Q377 70 366 76Q361 78.5 357.5 77.5Z" fill="#6f96c9" stroke="#2e5786" stroke-width="1.2" stroke-linejoin="round"></path><path d="M355 82Q362 70 374 62.5" fill="none" stroke="#2e5786" stroke-width="1"></path>
<rect x="369.5" y="74" width="11" height="11" rx="2" fill="#5a9e5a" stroke="#3f7f3f" stroke-width=".8"></rect><path d="M375.0 76.2V82.8M371.7 79.5H378.3" stroke="#fff" stroke-width="2.2"></path>
<path d="M389.5 60.5Q406 63 413 73.5Q402 73 390 80Q397 70 389.5 60.5Z" fill="#6f96c9" stroke="#2e5786" stroke-width="1.2" stroke-linejoin="round"></path><path d="M397 62.5Q402 69 398 76.5M404 66Q407 70 405 74.5" fill="none" stroke="#2e5786" stroke-width=".9"></path>
<rect x="404.5" y="74" width="11" height="11" rx="2" fill="#5a9e5a" stroke="#3f7f3f" stroke-width=".8"></rect><path d="M410.0 76.2V82.8M406.7 79.5H413.3" stroke="#fff" stroke-width="2.2"></path>
<rect x="426" y="62.5" width="19" height="14" rx="5" fill="#7198cb" stroke="#1f4372" stroke-width="2"></rect>
<rect x="439.5" y="74" width="11" height="11" rx="2" fill="#5a9e5a" stroke="#3f7f3f" stroke-width=".8"></rect><path d="M445.0 76.2V82.8M441.7 79.5H448.3" stroke="#fff" stroke-width="2.2"></path>
<circle cx="470.5" cy="70.5" r="11" fill="#8fb0dc" stroke="#6c90c0" stroke-width="1"></circle><path d="M461 66Q470.5 63 480 66M460 72H481M462.5 77.5Q470.5 80 478.5 77.5M470.500 59.500V81.500M465 61Q461 70.500 465 80M476 61Q480 70.500 476 80" fill="none" stroke="#e8eef8" stroke-width=".8"></path>
<path d="M464 65H468V68H466V71H463ZM471 64H476V67H478V70H474V68H471ZM469 72H472V76H470ZM474 73H478V76H475Z" fill="#2c4a70"></path>
<rect x="474.5" y="74" width="11" height="11" rx="2" fill="#5a9e5a" stroke="#3f7f3f" stroke-width=".8"></rect><path d="M480.0 76.2V82.8M476.7 79.5H483.3" stroke="#fff" stroke-width="2.2"></path>
<path d="M535 69.75L540 64H554.5Q556 64 556 65.5V74.0Q556 75.5 554.5 75.5H540Z" fill="#f5d332" stroke="#c9a514" stroke-width="1"></path><text x="548.0" y="72.9" text-anchor="middle" font-family="Liberation Sans, sans-serif" font-weight="bold" font-size="9" fill="#333">abc</text>
<rect x="570.5" y="64.5" width="23.5" height="17" fill="#dbe8f8" stroke="#5b8fd6" stroke-width="1"></rect>
<path d="M572 71.0L577 65.5H588.0Q589.5 65.5 589.5 67.0V75.0Q589.5 76.5 588.0 76.5H577Z" fill="#f5d332" stroke="#c9a514" stroke-width="1"></path><text x="583.25" y="73.9" text-anchor="middle" font-family="Liberation Sans, sans-serif" font-weight="bold" font-size="9" fill="#333">ab</text>
<path d="M587 67.500V75" stroke="#fff" stroke-width="2.5"></path><path d="M587 68V75" stroke="#999" stroke-width="1"></path><circle cx="588" cy="77.5" r="4" fill="#cc2020" stroke="#8e1010" stroke-width=".8"></circle><circle cx="586.8" cy="76.300" r="1.2" fill="#f08080"></circle>
<path d="M605 69.5L610 64H620.5Q622 64 622 65.5V73.5Q622 75 620.5 75H610Z" fill="#f4f4f4" stroke="#a0a0a0" stroke-width="1"></path><text x="616.0" y="72.4" text-anchor="middle" font-family="Liberation Sans, sans-serif" font-weight="bold" font-size="9" fill="#8a8a8a">ab</text>
<path d="M621 67V75" stroke="#aaa" stroke-width="1.2"></path><circle cx="622.5" cy="78" r="4.2" fill="#8e8e8e" stroke="#777" stroke-width=".8"></circle>
<path d="M640 69.5L645 64H658.5Q660 64 660 65.5V73.5Q660 75 658.5 75H645Z" fill="#f4f4f4" stroke="#a0a0a0" stroke-width="1"></path><text x="652.5" y="72.4" text-anchor="middle" font-family="Liberation Sans, sans-serif" font-weight="bold" font-size="9" fill="#8a8a8a">abc</text>
<path d="M648 79Q656 72 664 79Q656 86 648 79Z" fill="#fff" stroke="#666" stroke-width="1"></path><circle cx="656" cy="79" r="2.3" fill="#555"></circle>
<path d="M675 69.5L680 64H693.5Q695 64 695 65.5V73.5Q695 75 693.5 75H680Z" fill="#f4f4f4" stroke="#a0a0a0" stroke-width="1"></path><text x="687.5" y="72.4" text-anchor="middle" font-family="Liberation Sans, sans-serif" font-weight="bold" font-size="9" fill="#8a8a8a">abc</text>
<rect x="688" y="73.500" width="11" height="10.5" rx="1.5" fill="#9a9a9a" stroke="#7c7c7c" stroke-width=".8"></rect><path d="M690 79H694V76.500L698 79.500L694 82.500V80.500H690Z" fill="#fff"></path>
<path d="M710 69.5L715 64H728.5Q730 64 730 65.5V73.5Q730 75 728.5 75H715Z" fill="#f4f4f4" stroke="#a0a0a0" stroke-width="1"></path><text x="722.5" y="72.4" text-anchor="middle" font-family="Liberation Sans, sans-serif" font-weight="bold" font-size="9" fill="#8a8a8a">abc</text>
<rect x="723" y="73.500" width="11" height="10.5" rx="1.5" fill="#9a9a9a" stroke="#7c7c7c" stroke-width=".8"></rect><path d="M731.500 79A3 3 0 1 1 728.500 76" fill="none" stroke="#fff" stroke-width="1.3"></path><path d="M728 74L731 76L728 78Z" fill="#fff"></path>
<path d="M745 69.5L750 64H763.5Q765 64 765 65.5V73.5Q765 75 763.5 75H750Z" fill="#f4f4f4" stroke="#a0a0a0" stroke-width="1"></path><text x="757.5" y="72.4" text-anchor="middle" font-family="Liberation Sans, sans-serif" font-weight="bold" font-size="9" fill="#8a8a8a">abc</text>
<rect x="757.500" y="73.500" width="11" height="10.5" rx="1.5" fill="#c4c4c4" stroke="#a4a4a4" stroke-width=".8"></rect><path d="M760 82L766 76" stroke="#fff" stroke-width="2.4" stroke-linecap="round"></path>
<text x="782" y="70" font-family="Liberation Sans, sans-serif" font-weight="bold" font-style="italic" font-size="8.5" fill="#111" textLength="20" lengthAdjust="spacingAndGlyphs">Easy</text>
<path d="M786 76.0L791 72H801.0Q802.5 72 802.5 73.5V78.5Q802.5 80 801.0 80H791Z" fill="#f5d332" stroke="#c9a514" stroke-width="1"></path><text x="796.75" y="77.4" text-anchor="middle" font-family="Liberation Sans, sans-serif" font-weight="bold" font-size="7" fill="#444">abc</text>
<circle cx="836.500" cy="68.500" r="8.5" fill="#5b8cc8" stroke="#4a78b2" stroke-width="1"></circle><text x="836.500" y="73.500" text-anchor="middle" font-family="Liberation Serif, serif" font-weight="bold" font-style="italic" font-size="14" fill="#fff">i</text>
<path d="M842.5 69.5 L842.5 81.4 L845.4 78.7 L847.6 83.1 L849.5 82.2 L847.3 77.8 L851.0 77.8Z" fill="#fff" stroke="#222" stroke-width="1" stroke-linejoin="round"></path>
<circle cx="874.500" cy="69.500" r="8.500" fill="#d6d6d6" stroke="#a8a8a8" stroke-width="1.2" stroke-dasharray="3.4 1.6"></circle><circle cx="874.500" cy="69.500" r="5.2" fill="#bdbdbd" stroke="#fff" stroke-width="1.2"></circle><path d="M873 66.500L878 69.500L873 72.500Z" fill="#fff"></path>
<path d="M878.5 71.5 L878.5 82.7 L881.2 80.1 L883.3 84.3 L885.1 83.5 L883.1 79.3 L886.5 79.3Z" fill="#f8f8f8" stroke="#9a9a9a" stroke-width="1" stroke-linejoin="round"></path>
<path d="M894 69H903L898.500 74Z" fill="#a8a8a8"></path>
<rect x="911.500" y="61" width="23" height="19.5" fill="#dcdcdc" stroke="#222" stroke-width="1.5" stroke-dasharray="3 1.6"></rect><rect x="913.500" y="63" width="14.500" height="14" fill="#f6dc3c"></rect>
<path d="M921.5 68.5 L921.5 81.1 L924.6 78.2 L926.9 82.9 L928.9 82.0 L926.6 77.3 L930.5 77.3Z" fill="#fff" stroke="#222" stroke-width="1" stroke-linejoin="round"></path>
<path d="M941 69.500H950.500L945.750 74.500Z" fill="#000"></path>
<rect x="961.500" y="63.500" width="14" height="14" fill="#f6dc3c" stroke="#d0a818" stroke-width="1" stroke-dasharray="2.2 1.3"></rect><rect x="971.500" y="74" width="10.500" height="10.500" rx="2" fill="#d93030" stroke="#b01c1c" stroke-width=".8"></rect><circle cx="976.750" cy="79.250" r="3" fill="none" stroke="#fff" stroke-width="1.2"></circle><path d="M974.800 81.200L978.800 77.200" stroke="#fff" stroke-width="1.2"></path>
<text x="994.500" y="76.500" font-family="Liberation Serif, DejaVu Serif, serif" font-size="31" fill="#5a2d6e">ε</text>
<rect x="1004.500" y="71.500" width="12.500" height="12" fill="#f6dc3c" stroke="#d0a818" stroke-width="1" stroke-dasharray="1.6 1.2"></rect>
</svg>
<svg class="abs" style="left:0;top:0" width="1066" height="694" viewBox="0 0 1066 694">
<path d="M33 106L38.500 111.500M31 113.500L36.500 117" stroke="#555" stroke-width="1.3" stroke-linecap="round"></path><path d="M38 99.500L41 103.500M36.500 101L42 99.500" stroke="#666" stroke-width=".9"></path><path d="M38.500 111Q41 108.500 43 111L46 115.500V122.500H41.500L36.500 117Q35.500 115 37.500 114.500" fill="#fff" stroke="#555" stroke-width="1.1" stroke-linejoin="round"></path>
<path d="M67.500 121Q65 116 63.800 110.500Q63.500 108.500 65 108.500Q66.500 108.500 67.500 112L68.500 113.500V102.500Q68.500 101 69.800 101Q71 101 71 102.500V99.800Q71 98.500 72.300 98.500Q73.600 98.500 73.600 99.800V101.500Q73.600 100.200 74.900 100.200Q76.200 100.200 76.200 101.500V103.500Q76.200 102.300 77.500 102.300Q78.800 102.300 78.800 103.500V113Q78.800 118 76.500 121Z" fill="#fff" stroke="#222" stroke-width="1.2" stroke-linejoin="round"></path><path d="M71 102.500V109M73.600 101.500V109M76.200 103.500V109" stroke="#222" stroke-width="1"></path>
<rect x="95.500" y="99.500" width="16" height="11" fill="#f4dc3a" stroke="#6a5a10" stroke-width="1" stroke-dasharray="2 1.4"></rect>
<path d="M107.5 109L107.5 104.5" stroke="#4a7fc0" stroke-width="4"></path><path d="M107.5 100L112.7 104.5L102.3 104.5Z" fill="#4a7fc0"></path><path d="M109.5 111L114.0 111.0" stroke="#4a7fc0" stroke-width="4"></path><path d="M118.5 111L114.0 116.2L114.0 105.8Z" fill="#4a7fc0"></path><path d="M107.5 113L107.5 117.5" stroke="#4a7fc0" stroke-width="4"></path><path d="M107.5 122L102.3 117.5L112.7 117.5Z" fill="#4a7fc0"></path><path d="M105.5 111L101.0 111.0" stroke="#4a7fc0" stroke-width="4"></path><path d="M96.5 111L101.0 105.8L101.0 116.2Z" fill="#4a7fc0"></path>
<rect x="125.500" y="95.500" width="33" height="32" rx="3" fill="#dcdcdc" stroke="#8c8c8c" stroke-width="1"></rect>
<path d="M139.236 115.764L131.236 123.764" stroke="#555" stroke-width="4.6" stroke-linecap="round"></path><path d="M137.736 117.264L131.236 123.764" stroke="#e8b820" stroke-width="3" stroke-linecap="round"></path><circle cx="145.5" cy="109.5" r="8.7" fill="#f4f4f4" stroke="#8c8c8c" stroke-width="1.6"></circle><circle cx="145.5" cy="109.5" r="6.8999999999999995" fill="none" stroke="#fff" stroke-width="1.2" opacity=".8"></circle>
<path d="M145.500 104V115M140 109.500H151" stroke="#4a7fc0" stroke-width="2.8"></path>
<path d="M174.096 113.904L166.096 121.904" stroke="#555" stroke-width="4.6" stroke-linecap="round"></path><path d="M172.596 115.404L166.096 121.904" stroke="#e8b820" stroke-width="3" stroke-linecap="round"></path><circle cx="180" cy="108" r="8.2" fill="#f4f4f4" stroke="#8c8c8c" stroke-width="1.6"></circle><circle cx="180" cy="108" r="6.3999999999999995" fill="none" stroke="#fff" stroke-width="1.2" opacity=".8"></circle>
<path d="M175 108H185" stroke="#5b8ac6" stroke-width="2.8"></path>
<path d="M209.096 113.904L201.096 121.904" stroke="#555" stroke-width="4.6" stroke-linecap="round"></path><path d="M207.596 115.404L201.096 121.904" stroke="#d8d8d8" stroke-width="3" stroke-linecap="round"></path><circle cx="215" cy="108" r="8.2" fill="#f4f4f4" stroke="#a4a4a4" stroke-width="1.6"></circle><circle cx="215" cy="108" r="6.3999999999999995" fill="none" stroke="#fff" stroke-width="1.2" opacity=".8"></circle>
<text x="215" y="111.500" text-anchor="middle" font-family="Liberation Sans, sans-serif" font-weight="bold" font-size="9" fill="#8a8a8a">1:1</text>
<rect x="236.500" y="98.500" width="21" height="21" fill="#dfe8f4" opacity=".0"></rect>
<path d="M237 99L244 99L241.8 101.2L245.5 105L243 107.5L239.2 103.8L237 106Z" fill="#4a7fc0"></path>
<path d="M258 99L251 99L253.2 101.2L249.5 105L252 107.5L255.8 103.8L258 106Z" fill="#4a7fc0"></path>
<path d="M258 120L251 120L253.2 117.8L249.5 114L252 111.5L255.8 115.2L258 113Z" fill="#4a7fc0"></path>
<path d="M237 120L244 120L241.8 117.8L245.5 114L243 111.5L239.2 115.2L237 113Z" fill="#4a7fc0"></path>
<path d="M246.036 115.964L238.036 123.964" stroke="#555" stroke-width="4.6" stroke-linecap="round"></path><path d="M244.536 117.464L238.036 123.964" stroke="#e8b820" stroke-width="3" stroke-linecap="round"></path><circle cx="250.5" cy="111.5" r="6.2" fill="#f4f4f4" stroke="#8c8c8c" stroke-width="1.6"></circle><circle cx="250.5" cy="111.5" r="4.4" fill="none" stroke="#fff" stroke-width="1.2" opacity=".8"></circle>
<rect x="270.500" y="100.500" width="13" height="15" fill="#f4dc3a" stroke="#6a5a10" stroke-width="1" stroke-dasharray="2 1.4"></rect>
<path d="M278.88 114.12L270.88 122.12" stroke="#555" stroke-width="4.6" stroke-linecap="round"></path><path d="M277.38 115.62L270.88 122.12" stroke="#e8b820" stroke-width="3" stroke-linecap="round"></path><circle cx="285" cy="108" r="8.5" fill="#f2f0d0" stroke="#8c8c8c" stroke-width="1.6"></circle><circle cx="285" cy="108" r="6.7" fill="none" stroke="#fff" stroke-width="1.2" opacity=".8"></circle>
<rect x="306.500" y="104.500" width="14" height="12" fill="#d2d2d2" stroke="#9a9a9a" stroke-width="1"></rect>
<path d="M313.88 113.62L305.88 121.62" stroke="#555" stroke-width="4.6" stroke-linecap="round"></path><path d="M312.38 115.12L305.88 121.62" stroke="#e8b820" stroke-width="3" stroke-linecap="round"></path><circle cx="320" cy="107.5" r="8.5" fill="#ececec" stroke="#8c8c8c" stroke-width="1.6"></circle><circle cx="320" cy="107.5" r="6.7" fill="none" stroke="#fff" stroke-width="1.2" opacity=".8"></circle>
<path d="M348.38 113.12L340.38 121.12" stroke="#555" stroke-width="4.6" stroke-linecap="round"></path><path d="M346.88 114.62L340.38 121.12" stroke="#e8b820" stroke-width="3" stroke-linecap="round"></path><circle cx="354.5" cy="107" r="8.5" fill="#f4f4f4" stroke="#8c8c8c" stroke-width="1.6"></circle><circle cx="354.5" cy="107" r="6.7" fill="none" stroke="#fff" stroke-width="1.2" opacity=".8"></circle>
<rect x="353.500" y="112.500" width="11" height="10.500" fill="#5b8ac6" stroke="#3f6aa6" stroke-width=".8"></rect><path d="M361.500 114.500L356.500 117.800L361.500 121" fill="none" stroke="#fff" stroke-width="1.8"></path>
<path d="M383.38 113.12L375.38 121.12" stroke="#555" stroke-width="4.6" stroke-linecap="round"></path><path d="M381.88 114.62L375.38 121.12" stroke="#dcdcdc" stroke-width="3" stroke-linecap="round"></path><circle cx="389.5" cy="107" r="8.5" fill="#f6f6f6" stroke="#b4b4b4" stroke-width="1.6"></circle><circle cx="389.5" cy="107" r="6.7" fill="none" stroke="#fff" stroke-width="1.2" opacity=".8"></circle>
<rect x="388.500" y="112.500" width="11" height="10.500" fill="#b4b4b4" stroke="#9c9c9c" stroke-width=".8"></rect><path d="M391.500 114.500L396.500 117.800L391.500 121" fill="none" stroke="#fff" stroke-width="1.8"></path>
<path d="M413.500 110A9 9 0 0 1 428 103.500L430.500 100.500L432.500 110H423L425.500 106.500A5.500 5.500 0 0 0 417.500 110Z" fill="#4a86d0" stroke="#2f68b0" stroke-width=".8" stroke-linejoin="round"></path><path d="M431.500 111.500A9 9 0 0 1 417 118L414.500 121L412.500 111.500H422L419.500 115A5.500 5.500 0 0 0 427.500 111.500Z" fill="#4a86d0" stroke="#2f68b0" stroke-width=".8" stroke-linejoin="round"></path>
<path d="M505 108V101.500H523V108M508 108V100H521" fill="#fbfbfb" stroke="#b4b4b4" stroke-width=".9"></path><path d="M507 104H521M507 106H521" stroke="#8fbf8f" stroke-width=".8"></path>
<rect x="502.500" y="108.500" width="24.500" height="12.500" rx="1" fill="#f0c860" stroke="#c89a30" stroke-width="1"></rect><rect x="510.500" y="113.500" width="8.500" height="2.500" fill="#8a6a20"></rect>
<path d="M550.500 98.800H561L553.500 108H558.500L543 122.500L548 111.500H543.500Z" fill="#f8cc20" stroke="#b08a10" stroke-width="1" stroke-linejoin="round"></path>
<rect x="577" y="104.500" width="10.500" height="9" fill="#f5b080" stroke="#e07030" stroke-width="1"></rect><rect x="579" y="106.500" width="10.500" height="9" fill="#f5b080" stroke="#e07030" stroke-width="1"></rect><rect x="581" y="108.500" width="10.500" height="9" fill="#f09050" stroke="#e07030" stroke-width="1"></rect><path d="M593.500 114.500H588V112L583.500 115.500L588 119V116.800H593.500Z" fill="#5aa03a" stroke="#3a7a20" stroke-width=".7"></path>
<ellipse cx="620" cy="115.500" rx="11.500" ry="5" fill="none" stroke="#3a8a2a" stroke-width="1.6"></ellipse><path d="M613 113Q613 105 620 106Q628 105 628 112Q629 118 621 118.500Q613 119 613 113Z" fill="#c83c3c" stroke="#8e2020" stroke-width=".9"></path><path d="M612 120.500L631 102Q632.500 108 626 113Z" fill="#b4b4b4" stroke="#7c7c7c" stroke-width=".7"></path><path d="M609.500 116Q614 120.500 622 120.500Q629 120 631.500 116" fill="none" stroke="#3a8a2a" stroke-width="1.6"></path>
<path d="M654.500 119.500A8.500 8.500 0 1 0 647 107.500L644 106L645.500 115.500L654 112L651 110.200A4.500 4.500 0 1 1 654.500 115.500Z" fill="#3f8ae0" stroke="#2a68b8" stroke-width=".8" stroke-linejoin="round"></path>
<path d="M689 119.500A8.500 8.500 0 1 0 681.500 107.500L678.500 106L680 115.500L688.500 112L685.500 110.200A4.500 4.500 0 1 1 689 115.500Z" fill="#5f96d8" stroke="#3a70b8" stroke-width=".8" stroke-linejoin="round" opacity=".9"></path><path d="M688 110L699.500 120.500" stroke="#8a6a20" stroke-width="3.6" stroke-linecap="round"></path><path d="M689 111L699 120" stroke="#e0b040" stroke-width="2" stroke-linecap="round"></path><path d="M684.500 112.500L690 107L693.500 110.500L692 112L690.500 110.800L687 114.500Z" fill="#8e8e8e" stroke="#555" stroke-width=".8"></path><path d="M699 110L688 121" stroke="#777" stroke-width="1.8" stroke-linecap="round"></path>
<text x="712.500" y="113" font-family="Liberation Sans, sans-serif" font-weight="bold" font-size="17" fill="#000" textLength="15" lengthAdjust="spacingAndGlyphs">W</text><text x="719.500" y="119.500" font-family="Liberation Sans, sans-serif" font-weight="bold" font-size="14" fill="#e01010">K</text><text x="727.500" y="122" font-family="Liberation Sans, sans-serif" font-weight="bold" font-size="13" fill="#000">T</text>
<rect x="748" y="99" width="24" height="23.500" fill="#3b3b3b"></rect><path d="M753.500 103.500L759 102L764.500 102.500L766 104.500L768 108.500L770.500 109L768.500 112.500L766 115L765.500 118.500L763 121H760.500L759 116.500L759.500 113L757 110.500H753.500L751.500 107.500Z" fill="#fff"></path><path d="M768.500 115.500L769.500 117.500L768.300 119Z" fill="#fff"></path>
<path d="M786 119.500V121.500H799" fill="none" stroke="#b0b0b0" stroke-width="1"></path><rect x="784.500" y="100.500" width="22" height="18.500" fill="#fbfbfb" stroke="#b8b8b8" stroke-width="1"></rect><text x="795.500" y="113.500" text-anchor="middle" font-family="Liberation Mono, monospace" font-size="9.500" fill="#333" textLength="17" lengthAdjust="spacingAndGlyphs">CSW</text>
<path d="M1027 139.500H1054" stroke="#c4c4c4" stroke-width="3" stroke-dasharray="1.2 2.200"></path>
<path d="M1030.500 166L1033 158L1042 146L1046 149L1037 161Z" fill="#a8a8a8" stroke="#8a8a8a" stroke-width=".8"></path><path d="M1034.500 168L1037 160L1046 148L1050 151L1041 163Z" fill="#bcbcbc" stroke="#8e8e8e" stroke-width=".8"></path><path d="M1034.500 168L1036 163L1038.500 165Z" fill="#666"></path><path d="M1049 168H1054L1051.500 171Z" fill="#8e8e8e"></path>
<path d="M1033.500 203L1036 194.500L1044.500 183L1049 186.500L1040.500 198Z" fill="#f2d21c" stroke="#a88c10" stroke-width=".9" stroke-linejoin="round"></path><path d="M1033.500 203L1035.200 197.500L1038.500 200Z" fill="#555"></path><path d="M1036 194.500L1040.500 198L1038.500 200L1035.200 197.500Z" fill="#e8d8a8"></path>
<rect x="1029.500" y="217.500" width="19" height="19" rx="2.500" fill="#a6a6a6" stroke="#8c8c8c" stroke-width="1"></rect><rect x="1033" y="219.500" width="12" height="8" fill="#e4e4e4"></rect><path d="M1034.500 222H1043.500M1034.500 224.500H1043.500" stroke="#999" stroke-width=".8"></path><rect x="1034.500" y="230" width="9" height="6" fill="#d4d4d4"></rect><path d="M1041 236L1049 226L1052 228.500L1044 238.500Z" fill="#bdbdbd" stroke="#909090" stroke-width=".8"></path>
<path d="M1029.500 255Q1030 250 1036 251Q1040 253 1044 251Q1050 250.5 1050 256Q1050 261 1044 261Q1040 260 1036 262Q1029 262 1029.500 255Z" fill="#c6c6c6" stroke="#a0a0a0" stroke-width="1.2"></path>
<rect x="1040.500" y="260.5" width="10.500" height="10.500" rx="1.500" fill="#c8c8c8" stroke="#a0a0a0" stroke-width=".8"></rect>
<path d="M1045.750 262.5V269M1042.500 265.75H1049M1043.500 263.5L1048 268M1048 263.5L1043.500 268" stroke="#fff" stroke-width="1.2"></path>
<path d="M1029.500 289Q1030 284 1036 285Q1040 287 1044 285Q1050 284.5 1050 290Q1050 295 1044 295Q1040 294 1036 296Q1029 296 1029.500 289Z" fill="#c6c6c6" stroke="#a0a0a0" stroke-width="1.2"></path>
<rect x="1040.500" y="294.5" width="10.500" height="10.500" rx="1.500" fill="#8a8a8a" stroke="#a0a0a0" stroke-width=".8"></rect>
<path d="M1042.500 299H1046V297L1050 299.75L1046 302.5V300.5H1042.500Z" fill="#fff"></path>
<path d="M1031.500 339L1036 324.500L1050 323.500" fill="none" stroke="#8e8e8e" stroke-width="1"></path><circle cx="1036" cy="324.500" r="2" fill="#e8e8e8" stroke="#8e8e8e" stroke-width=".9"></circle><path d="M1040 330L1049.500 339M1049 329.500L1040.500 338.500" stroke="#8a8a8a" stroke-width="2.600" stroke-linecap="round"></path>
<rect x="1028.500" y="352.500" width="14.500" height="14" fill="#e0e0e0" stroke="#a0a0a0" stroke-width="1" stroke-dasharray="2 1.400"></rect><rect x="1039.500" y="363" width="10.500" height="10.500" rx="1.500" fill="#9a9a9a" stroke="#888" stroke-width=".8"></rect><path d="M1042 365.500L1047.500 371M1047.500 365.500L1042 371" stroke="#fff" stroke-width="1.600"></path>
<g transform="translate(0 2)"><path d="M1028 388.500L1046 398.500M1028 400L1047 391.500" stroke="#8e8e8e" stroke-width="1.500" stroke-linecap="round"></path><ellipse cx="1048.500" cy="399.500" rx="3" ry="2.200" fill="none" stroke="#8e8e8e" stroke-width="1.300" transform="rotate(25 1048.500 399.500)"></ellipse><ellipse cx="1049.500" cy="391" rx="3" ry="2.200" fill="none" stroke="#8e8e8e" stroke-width="1.300" transform="rotate(-25 1049.500 391)"></ellipse></g>
</svg>
<div class="abs" style="left:312px;top:409px;width:780px;height:300px;border-radius:7px;box-shadow:0 0 7px 2px rgba(0,0,0,.45),0 -1px 1px rgba(0,0,0,.4)"></div>
<div class="abs" id="dlg" style="left:312px;top:409px;width:780px;height:300px;border:1px solid #3c4a58;border-radius:7px 0 0 0;overflow:hidden;background:#bcd8f6">
<div class="abs" style="left:0;top:0;width:780px;height:28px;background:linear-gradient(90deg,#eef4f8 0,#f6f8f8 40px,#eef2ee 150px,#b9ccc0 178px,#a8c8b0 215px,#9abeac 260px,#8ab2b8 300px,#6f9fe2 340px,#86b2e6 365px,#a0c4c0 385px,#a8cce8 402px,#b6d6f4 430px,#bcdaf8 700px,#a2bad2 714px,#b2cae2 732px,#9caab6 754px)"></div>
<div class="abs" style="left:0;top:0;width:780px;height:28px;background:linear-gradient(180deg,rgba(255,255,255,.32),rgba(255,255,255,.08) 45%,rgba(255,255,255,0))"></div>
<div class="abs" style="left:0;top:0;width:779px;height:299px;border-left:1px solid rgba(255,255,255,.75);border-top:1px solid rgba(255,255,255,.8)"></div>
<div class="abs" style="left:1px;top:28px;width:5px;height:280px;background:linear-gradient(180deg,#dbe9f4 0,#c9def0 40px,#8fb4dc 120px,#b5cfe8 170px,#6f97c8 215px,#b9d3ea 245px,#7fa3cf 280px)"></div>
</div>
<div class="abs" style="left:318px;top:437px;width:760px;height:270px;background:#f0f0f0;border-left:1px solid #6a7480;border-top:1px solid #6a7480"></div>
<div class="abs" style="left:319px;top:438px;width:150px;height:260px;background:#5c5c5c"></div>
<div class="abs" style="left:319px;top:473px;width:150px;height:34px;background:#f0f0f0"></div>
<span class="t" style="left: 355.4px; top: 451.9px; font-size: 11px; color: rgb(255, 255, 255); letter-spacing: -0.349px;">General</span>
<span class="t" style="left: 358.5px; top: 485.9px; font-size: 11px; color: rgb(0, 0, 0); letter-spacing: -0.194px;">Style</span>
<span class="t" style="left: 355.4px; top: 519.9px; font-size: 11px; color: rgb(255, 255, 255); letter-spacing: -0.404px;">Labels</span>
<span class="t" style="left: 355.4px; top: 553.9px; font-size: 11px; color: rgb(255, 255, 255); letter-spacing: -0.474px;">Fields</span>
<span class="t" style="left: 355.4px; top: 587.9px; font-size: 11px; color: rgb(255, 255, 255); letter-spacing: -0.196px;">Rendering</span>
<span class="t" style="left: 355.4px; top: 621.9px; font-size: 11px; color: rgb(255, 255, 255); letter-spacing: -0.368px;">Display</span>
<span class="t" style="left: 355.4px; top: 655.9px; font-size: 11px; color: rgb(255, 255, 255); letter-spacing: -0.154px;">Actions</span>
<span class="t" style="left: 355.4px; top: 689.9px; font-size: 11px; color: rgb(255, 255, 255); letter-spacing: -0.138px;">Joins</span>
<span class="t" style="left: 340.3px; top: 418px; font-size: 12px; color: rgb(0, 0, 0); text-shadow: rgb(255, 255, 255) 0px 0px 5px, rgb(255, 255, 255) 0px 0px 8px, rgb(255, 255, 255) 0px 0px 10px; letter-spacing: -0.124px;">Layer Properties - Mask | Style</span>
<div class="grip" style="left:470px;top:572px;height:125px;width:3px;background-size:6px 4px"></div>
<div class="abs" style="left:475px;top:443px;width:117px;height:21px;border:1px solid #acacac;border-radius:3px;background:linear-gradient(#f4f4f4,#ececec 50%,#dfdfdf 51%,#d6d6d6);box-shadow:inset 0 0 0 1px rgba(255,255,255,.7);"></div>
<div class="abs" style="left:576px;top:445px;width:1px;height:17px;background:#b5b5b5"></div>
<span class="t" style="left: 479.5px; top: 447.9px; font-size: 11px; color: rgb(0, 0, 0); letter-spacing: 0.068px;">Inverted polygons</span>
<svg class="abs" style="left:580px;top:451px" width="8" height="5"><path d="M0 0H8L4 4.5Z" fill="#000"></path></svg>
<span class="t" style="left: 484px; top: 485.9px; font-size: 11px; color: rgb(0, 0, 0); letter-spacing: -0.097px;">Sub renderer:</span>
<div class="abs" style="left:803px;top:481px;width:300px;height:21px;border:1px solid #acacac;border-radius:3px;background:linear-gradient(#f4f4f4,#ececec 50%,#dfdfdf 51%,#d6d6d6);box-shadow:inset 0 0 0 1px rgba(255,255,255,.7);"></div>
<svg class="abs" style="left:810px;top:484px" width="14" height="15" viewBox="0 0 14 15"><path d="M2 1H8V4H6V6H11V9H8V11H12V14H5V11H6V9H3V6H4V4H2Z" fill="#2e9b57" stroke="#1d7a40" stroke-width=".6"></path></svg>
<span class="t" style="left: 827.5px; top: 485.9px; font-size: 11px; color: rgb(0, 0, 0); letter-spacing: -0.41px;">Single Symbol</span>
<div class="abs" style="left:484px;top:511px;width:13px;height:13px;border:1px solid #9a9a9a;background:linear-gradient(135deg,#e8e8e8,#fdfdfd)"></div>
<span class="t" style="left: 501.3px; top: 512.6px; font-size: 11px; color: rgb(0, 0, 0); letter-spacing: -0.056px;">Merge polygons before rendering (slow)</span>
<div class="abs" style="left:484px;top:533px;width:264px;height:99px;border:1px solid #b8b8b8;border-radius:3px;background:#efefef"></div>
<div class="abs" style="left:587px;top:553px;width:61px;height:61px;background:#fdfdff;box-shadow:inset 0 0 15px 7px #1f66ff,inset 0 0 5px 1px #1f66ff"></div>
<div class="abs" style="left:484px;top:640px;width:264px;height:70px;border:1px solid #b0b0b0;border-radius:3px;background:#fff"></div>
<div class="abs" style="left:485px;top:641px;width:262px;height:32px;background:#efefef;border-radius:2px 2px 0 0"></div>
<div class="abs" style="left:496px;top:642px;width:1px;height:10px;background-image:linear-gradient(#9a9a9a 1px,transparent 1px);background-size:1px 2px"></div>
<div class="abs" style="left:501px;top:657px;width:6px;height:1px;background-image:linear-gradient(90deg,#9a9a9a 1px,transparent 1px);background-size:2px 1px"></div>
<div class="abs" style="left:516px;top:673px;width:1px;height:15px;background-image:linear-gradient(#9a9a9a 1px,transparent 1px);background-size:1px 2px"></div>
<div class="abs" style="left:516px;top:688px;width:10px;height:1px;background-image:linear-gradient(90deg,#9a9a9a 1px,transparent 1px);background-size:2px 1px"></div>
<svg class="abs" style="left:492px;top:653px" width="9" height="9"><rect x="0.5" y="0.5" width="8" height="8" rx="1" fill="#fdfdfd" stroke="#8e8e8e"></rect><path d="M2.5 4.5H6.5" stroke="#333" stroke-width="1"></path></svg>
<div class="abs" style="left:509px;top:649px;width:16px;height:16px;background:#2a6cf7"></div>
<span class="t" style="left: 531px; top: 652.4px; font-size: 11px; color: rgb(0, 0, 0); font-weight: bold; letter-spacing: 0.277px;">Fill</span>
<div class="abs" style="left:529px;top:681px;width:16px;height:16px;background:#2a6cf7"></div>
<span class="t" style="left: 550.3px; top: 683.9px; font-size: 11px; color: rgb(0, 0, 0); letter-spacing: -0.115px;">Shapeburst fill</span>
<span class="t" style="left: 758px; top: 537.9px; font-size: 11px; color: rgb(0, 0, 0); letter-spacing: -0.141px;">Unit</span>
<div class="abs" style="left:854px;top:533px;width:99px;height:20px;border:1px solid #acacac;border-radius:3px;background:linear-gradient(#f4f4f4,#ececec 50%,#dfdfdf 51%,#d6d6d6);box-shadow:inset 0 0 0 1px rgba(255,255,255,.7);"></div>
<div class="abs" style="left:936px;top:535px;width:1px;height:16px;background:#b5b5b5"></div>
<span class="t" style="left: 857.5px; top: 537.9px; font-size: 11px; color: rgb(0, 0, 0); letter-spacing: -0.206px;">Millimeter</span>
<svg class="abs" style="left:940px;top:541px" width="8" height="5"><path d="M0 0H8L4 4.5Z" fill="#000"></path></svg>
<span class="t" style="left: 758px; top: 561.9px; font-size: 11px; color: rgb(0, 0, 0); letter-spacing: -0.087px;">Transparency 0%</span>
<div class="abs" style="left:855px;top:564px;width:98px;height:4px;border:1px solid #b0b0b0;border-radius:2px;background:#e7eaea"></div>
<svg class="abs" style="left:853px;top:559px" width="12" height="16" viewBox="0 0 12 16"><path d="M1.5 2.5Q1.5 .8 3 .8H8.5Q10 .8 10 2.5V9.5L5.75 14.6L1.5 9.5Z" fill="#f2f2f2" stroke="#8a8a8a" stroke-width="1"></path></svg>
<span class="t" style="left: 758px; top: 587.4px; font-size: 11px; color: rgb(0, 0, 0); letter-spacing: -0.059px;">Color</span>
<div class="abs" style="left:854px;top:583px;width:99px;height:19px;border:1px solid #acacac;border-radius:3px;background:linear-gradient(#f4f4f4,#ececec 50%,#dfdfdf 51%,#d6d6d6);box-shadow:inset 0 0 0 1px rgba(255,255,255,.7);"></div>
<div class="abs" style="left:857px;top:587px;width:92px;height:11px;background:#0055f5;border:1px solid #1248b0;border-radius:1px"></div>
<div class="abs" style="left:758px;top:606px;width:320px;height:1px;background:#a8a8a8"></div>
<div class="abs" style="left:758px;top:607px;width:320px;height:1px;background:#fdfdfd"></div>
<span class="t" style="left: 758px; top: 619.6px; font-size: 11px; color: rgb(0, 0, 0); letter-spacing: -0.275px;">Symbols in group</span>
<div class="abs" style="left:843px;top:614px;width:195px;height:20px;border:1px solid #acacac;border-radius:2px;background:#fff"></div>
<div class="abs" style="left:1021px;top:615px;width:16px;height:18px;border-left:1px solid #c4c4c4;background:linear-gradient(#f4f4f4,#ececec 50%,#dfdfdf 51%,#d6d6d6)"></div>
<svg class="abs" style="left:1025px;top:622px" width="8" height="5"><path d="M0 0H8L4 4.5Z" fill="#000"></path></svg>
<div class="abs" style="left:1042px;top:614px;width:60px;height:21px;border:1px solid #acacac;border-radius:3px;background:linear-gradient(#f4f4f4,#ececec 50%,#dfdfdf 51%,#d6d6d6);box-shadow:inset 0 0 0 1px rgba(255,255,255,.7);"></div>
<span class="t" style="left:1046.6px;top:619.6px;font-size:11px;color:#000;">Open Library</span>
<div class="abs" style="left:758px;top:640px;width:330px;height:70px;border:1px solid #b0b0b0;border-radius:3px;background:#fff"></div>
<div class="abs" style="left:768px;top:648px;width:48px;height:50px;background-color:#eef3c9;border:0"></div>
<svg class="abs" style="left:768px;top:648px" width="48" height="46"><path d="M0 4V0H4M44 0H48V4" fill="none" stroke="#333" stroke-width="1.6"></path><path d="M0 0L3 3M48 0L45 3" stroke="#333" stroke-width="1"></path></svg>
<div class="abs" style="left:827px;top:648px;width:48px;height:50px;background-color:#a6bddb;border:0"></div>
<div class="abs" style="left:886px;top:648px;width:48px;height:50px;background-color:#f1f4c9;background-image:radial-gradient(circle at 3px 3px,#8b8b4e 1px,transparent 1.4px),radial-gradient(circle at 3px 3px,#8b8b4e 1px,transparent 1.4px);background-size:9px 9px,9px 9px;background-position:0 0,4.5px 4.5px;border:0"></div>
<div class="abs" style="left:945px;top:648px;width:48px;height:50px;background-color:#b8dc6c;border:0"></div>
<div class="abs" style="left:1004px;top:648px;width:48px;height:50px;background-color:#eef3c9;border:0"></div>
<svg class="abs" style="left:0;top:0" width="1066" height="694" viewBox="0 0 1066 694">
<g transform="translate(320 415) scale(1)"><path d="M2.500 14Q1.500 7 6 3.500Q10 1 13 2Q12 8 9.500 12Q7.500 15.500 5 17Q3.500 16.500 2.500 14Z" fill="#d4e64a" opacity=".95"></path><path d="M8 16Q10.500 9 14.500 4Q15 10 13.500 14Q11.500 17.500 9.500 17.500Z" fill="#c0dc40" opacity=".9"></path><path d="M4 14.500L11.500 2.500L13.500 1L12.500 3.500" fill="none" stroke="#1a7a1a" stroke-width="1.700" stroke-linecap="round"></path><path d="M1.500 13.500L4 14.500L3.500 17" fill="none" stroke="#1a7a1a" stroke-width="1.200"></path><path d="M9 14L11 16.500" stroke="#1a7a1a" stroke-width="1"></path></g>
<path d="M326 446L346 467" stroke="#c25a10" stroke-width="4.600" stroke-linecap="round"></path><path d="M336 456.500L346 467" stroke="#f08a28" stroke-width="4.200" stroke-linecap="round"></path><path d="M325 445L334 454.500" stroke="#c8ccd0" stroke-width="1.800" stroke-linecap="round"></path>
<path d="M325.500 466L338 453" stroke="#2f62b0" stroke-width="4.600" stroke-linecap="round"></path><path d="M334 451.500L337.500 448Q342 443 347.500 447L349 452L345.500 450L339.500 457Z" fill="#3a3a3a" stroke="#1e1e1e" stroke-width=".8" stroke-linejoin="round"></path>
<path d="M327 482L341 486L338 499L324 495Z" fill="#e8e070"></path><path d="M326 486L340 490L338 499L324 495Z" fill="#6ab0a0"></path><path d="M325 490.500L339 494.500L338 499L324 495Z" fill="#d85070"></path>
<path d="M336.500 489L343 484L347 488L342 494.500Q338.500 497 335.500 493.500Z" fill="#b8b4a0" stroke="#8a8670" stroke-width=".8"></path><path d="M344 486L350.500 479.500" stroke="#9a9478" stroke-width="3" stroke-linecap="round"></path>
<path d="M324 524.0L329 517.5H346.5Q348 517.5 348 519.0V529.0Q348 530.5 346.5 530.5H329Z" fill="#f5d332" stroke="#c9a514" stroke-width="1"></path><text x="338.5" y="527.9" text-anchor="middle" font-family="Liberation Sans, sans-serif" font-weight="bold" font-size="10.5" fill="#222">abc</text>
<rect x="324.500" y="547.500" width="23" height="19.500" fill="#e8e8e8" stroke="#9a9a9a" stroke-width="1"></rect><rect x="325" y="548" width="22" height="4" fill="#6a90c8"></rect>
<path d="M325 555H347" stroke="#b4b4b4" stroke-width=".8"></path>
<path d="M325 558.5H347" stroke="#b4b4b4" stroke-width=".8"></path>
<path d="M325 562H347" stroke="#b4b4b4" stroke-width=".8"></path>
<path d="M325 565.5H347" stroke="#b4b4b4" stroke-width=".8"></path>
<path d="M332.500 552V567M340 552V567" stroke="#c8c8c8" stroke-width=".8"></path>
<path d="M336 592L345.500 582" stroke="#e0983a" stroke-width="2.600" stroke-linecap="round"></path><path d="M324 594.500L333 587.500L339 593.500L331 602.500Z" fill="#e0a040" stroke="#b07820" stroke-width=".9" stroke-linejoin="round"></path><path d="M326.500 596.500L331.500 601.500M329 594.500L334 599.500" stroke="#b07820" stroke-width=".7"></path>
<path d="M328 615.500H343Q347.500 615.500 347.500 620V626Q347.500 630.500 343 630.500H336L330.500 636L331.500 630.500H328Q324 630.500 324 626V620Q324 615.500 328 615.500Z" fill="#e8dc80" stroke="#c0b050" stroke-width="1"></path><path d="M327 623V621Q327 618.500 330 618.500H337" fill="none" stroke="#fff" stroke-width="1.600" stroke-linecap="round" opacity=".85"></path>
<circle cx="338.500" cy="658" r="8.500" fill="#e8e8e8" stroke="#d8d8d8" stroke-width="3" stroke-dasharray="3.600 2.200"></circle><circle cx="338.500" cy="658" r="7.500" fill="#e6e6e6"></circle><circle cx="338.500" cy="658" r="5" fill="#4a80c8" stroke="#fff" stroke-width="1"></circle><path d="M337 655L341.500 658L337 661Z" fill="#fff"></path><circle cx="327.500" cy="668.500" r="3.200" fill="#6a90c0" stroke="#c8d4e4" stroke-width="1" stroke-dasharray="1.600 1"></circle>
<path d="M324 694L336.500 687L347.500 682V694Z" fill="#4a80c8" stroke="#3868a8" stroke-width=".8"></path>
</svg>
</body></html>
